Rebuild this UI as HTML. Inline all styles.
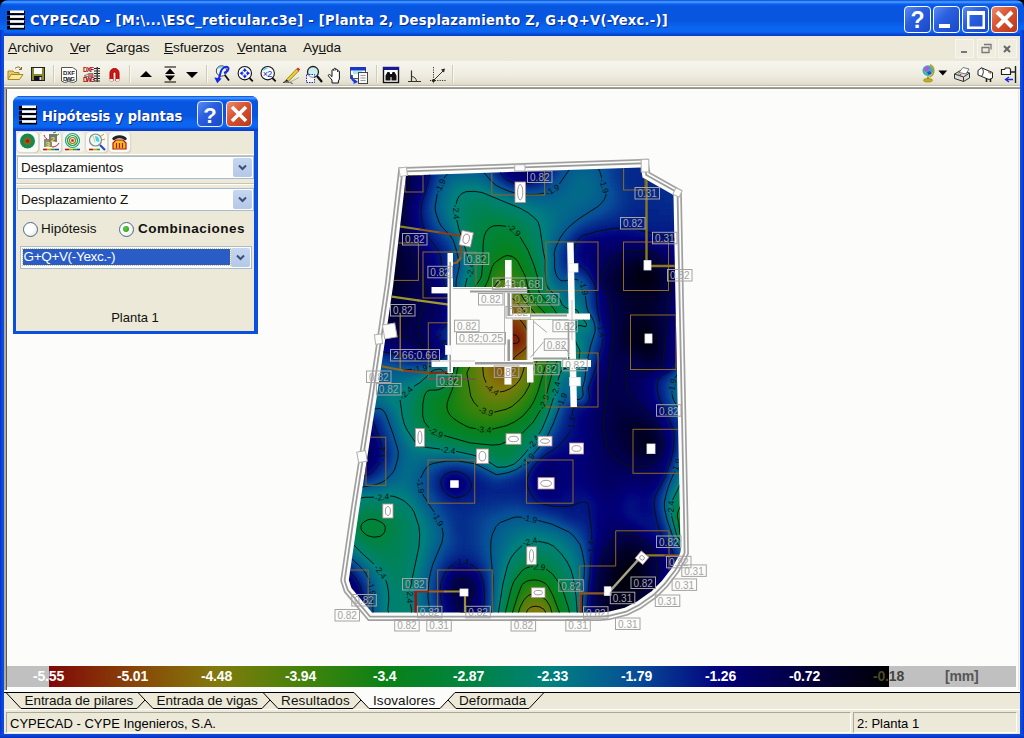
<!DOCTYPE html>
<html>
<head>
<meta charset="utf-8">
<title>CYPECAD</title>
<style>
html,body{margin:0;padding:0;}
body{width:1024px;height:738px;overflow:hidden;position:relative;background:#0a3fd6;font-family:"Liberation Sans",sans-serif;font-size:13px;color:#000;}
.abs{position:absolute;}
#titlebar{left:0;top:0;width:1024px;height:36px;background:linear-gradient(#0a40d0 0,#3a90ff 1.5px,#3a90ff 2.5px,#0c62f0 4px,#0856e0 6px,#0856e0 21px,#0a5ee8 24px,#0a66f0 27px,#0a66f0 32px,#0a48d4 34px,#0a3cc8 36px);border-radius:8px 8px 0 0;}
#title{left:30px;top:11px;line-height:18px;color:#fff;font-family:"DejaVu Sans Condensed","DejaVu Sans","Liberation Sans",sans-serif;font-weight:bold;font-size:14.5px;white-space:nowrap;text-shadow:1px 1px 0 #0a2a8a;letter-spacing:0.3px;}
#frameL{left:0;top:30px;width:4px;height:708px;background:linear-gradient(90deg,#0a2fc8,#0a48e0 2px,#0a4fe0);}
#frameR{left:1020px;top:30px;width:4px;height:708px;background:linear-gradient(90deg,#0a4fe0,#0a48e0 2px,#0a2fc8);}
#frameB{left:0;top:734px;width:1024px;height:4px;background:linear-gradient(#0a4fe0,#0a3fd0 2px,#0a2fc0);}
#menubar{left:4px;top:36px;width:1016px;height:25px;background:#ece9d8;}
#toolbar{left:4px;top:61px;width:1016px;height:26px;background:linear-gradient(#f6f5ee 0,#f0eee2 50%,#e6e3d2 80%,#d4d0bf 100%);}
#tbline{left:4px;top:85px;width:1016px;height:4.500px;background:linear-gradient(#c4c0b0 0,#c4c0b0 1px,#fff 1px,#fff 2px,#a8a498 2px,#8c887c 4.500px);}
#client{left:4px;top:89px;width:1016px;height:603px;background:#fcfcfa;}
#clientL{left:4px;top:89px;width:3px;height:603px;background:linear-gradient(90deg,#b0ac9c 0,#b0ac9c 2px,#5c5c5c 2px,#5c5c5c 3px);}
#clientR{left:1017px;top:89px;width:3px;height:603px;background:linear-gradient(90deg,#fcfcfa 1px,#ece9d8 1px,#ece9d8 2px,#fcfcfa 2px);}
.corner{position:absolute;top:0;width:10px;height:10px;background:#000;}
.menu{position:absolute;top:3.500px;font-size:13.600px;line-height:16px;letter-spacing:-0.05px;color:#111;}
.tbtn{position:absolute;top:6px;width:27px;height:27px;border-radius:4px;box-sizing:border-box;border:1px solid #fff;}
.tblue{background:linear-gradient(135deg,#5a8cf0 0,#2a5fe0 40%,#1a48c8 100%);}
.tred{background:linear-gradient(135deg,#f08868 0,#d8522e 45%,#b8381a 100%);}
.sep{position:absolute;top:4px;width:1px;height:19px;background:#c8c5b4;border-right:1px solid #fff;}
.ico{position:absolute;top:3px;width:20px;height:20px;}
.mdib{position:absolute;top:3px;width:19px;height:19px;background:#efede0;border:1px solid #f6f5ee;box-sizing:border-box;}
</style>
</head>
<body>
<div class="corner" style="left:0"></div><div class="corner" style="left:1014px"></div>
<div id="titlebar" class="abs"></div>
<svg class="abs" style="left:6px;top:9px" width="20" height="21" viewBox="0 0 20 21">
<g fill="#000"><rect x="1" y="2" width="18" height="4"/><rect x="1" y="7" width="18" height="4"/><rect x="1" y="12" width="18" height="4"/><rect x="1" y="17" width="18" height="3.5"/></g>
<g fill="#fff"><rect x="4" y="1.5" width="14" height="2.6"/><rect x="4" y="6.3" width="14" height="2.6"/><rect x="4" y="11.2" width="14" height="2.6"/><rect x="4" y="16.2" width="14" height="2.6"/></g>
<g fill="#000"><rect x="7" y="4" width="1" height="2"/><rect x="11" y="4" width="1" height="2"/><rect x="15" y="4" width="1" height="2"/><rect x="7" y="9" width="1" height="2"/><rect x="11" y="9" width="1" height="2"/><rect x="15" y="9" width="1" height="2"/><rect x="7" y="14" width="1" height="2"/><rect x="11" y="14" width="1" height="2"/><rect x="15" y="14" width="1" height="2"/></g>
</svg>
<div id="title" class="abs">CYPECAD - [M:\...\ESC_reticular.c3e] - [Planta 2, Desplazamiento Z, G+Q+V(-Yexc.-)]</div>
<div class="tbtn tblue" style="left:904px"><svg width="25" height="25" viewBox="0 0 25 25"><text x="12.5" y="21" text-anchor="middle" font-family="Liberation Sans,sans-serif" font-weight="bold" font-size="23" fill="#fff">?</text></svg></div>
<div class="tbtn tblue" style="left:933px"><svg width="25" height="25" viewBox="0 0 25 25"><rect x="5" y="17" width="11" height="4" fill="#fff"/></svg></div>
<div class="tbtn tblue" style="left:962px"><svg width="25" height="25" viewBox="0 0 25 25"><path d="M4 4h18v18H4z M6.5 8v11.500h13V8z" fill="#fff" fill-rule="evenodd"/></svg></div>
<div class="tbtn tred" style="left:991px"><svg width="25" height="25" viewBox="0 0 25 25"><path d="M5 5L20 20M20 5L5 20" stroke="#fff" stroke-width="4" stroke-linecap="butt"/></svg></div>
<div id="frameL" class="abs"></div>
<div id="frameR" class="abs"></div>
<div id="frameB" class="abs"></div>
<div id="menubar" class="abs">
<span class="menu" style="left:4px"><u>A</u>rchivo</span>
<span class="menu" style="left:66px"><u>V</u>er</span>
<span class="menu" style="left:102px"><u>C</u>argas</span>
<span class="menu" style="left:160px"><u>E</u>sfuerzos</span>
<span class="menu" style="left:233px"><u>V</u>entana</span>
<span class="menu" style="left:299px">Ay<u>u</u>da</span>
<div class="mdib" style="left:951px"><svg width="17" height="17"><rect x="5" y="11" width="6" height="2" fill="#777"/></svg></div>
<div class="mdib" style="left:973px"><svg width="17" height="17"><path d="M6 4.500h7v5M4 7.500h7v5H4z" fill="none" stroke="#777" stroke-width="1.300"/></svg></div>
<div class="mdib" style="left:994px"><svg width="17" height="17"><path d="M5 6l6 6M11 6l-6 6" stroke="#666" stroke-width="2"/></svg></div>
</div>
<div id="toolbar" class="abs"></div>
<div id="tbline" class="abs"></div>
<svg class="abs" style="left:0;top:61px" width="1024" height="26" viewBox="0 61 1024 26" font-family="Liberation Sans,sans-serif">
<!-- separators -->
<g stroke="#cfccbc"><path d="M53.500 65v18M129.500 65v18M206.500 65v18M376.500 65v18M452.500 65v18"/></g>
<g stroke="#f8f7f0"><path d="M54.500 65v18M130.500 65v18M207.500 65v18M377.500 65v18M453.500 65v18"/></g>
<!-- open folder -->
<path d="M8 71h5l1.500 1.500H19V79H8z" fill="#e8c860" stroke="#a88820" stroke-width="1"/>
<path d="M8 79.500l3-5h12l-3.500 5z" fill="#f8e8a0" stroke="#a88820" stroke-width="1"/>
<path d="M15 68.500c2-2 5-2 6 .5M21.500 69.500v-2.500M21.500 69.500h-2.500" fill="none" stroke="#806020" stroke-width="1"/>
<!-- save -->
<rect x="31.500" y="67.500" width="13" height="13" fill="#8a8a30" stroke="#222" stroke-width="1"/>
<rect x="34" y="68" width="8" height="6" fill="#fff"/>
<rect x="34" y="76" width="8" height="5" fill="#112"/>
<rect x="39.500" y="77" width="2" height="3" fill="#ddd"/>
<!-- DXF doc -->
<path d="M61.500 67.500h11l4 2.500v11l-3 1.500-5-1-4 1-3-1.500z" fill="#fff" stroke="#555" stroke-width="1"/>
<text x="63" y="74.500" font-size="6" font-weight="bold" fill="#222" textLength="12">DXF</text>
<text x="63" y="80.500" font-size="6" font-weight="bold" fill="#222" textLength="12">DWG</text>
<!-- DXF red -->
<text x="83" y="72" font-size="6.500" font-weight="bold" fill="#b01010" textLength="11">DXF</text>
<text x="83" y="82" font-size="6.500" font-weight="bold" fill="#b01010" textLength="12">DWG</text>
<path d="M84 76l5-2.500h4v3h-7z" fill="#ddd" stroke="#555" stroke-width=".7"/>
<path d="M88 75h5" stroke="#d00" stroke-width="1"/>
<g stroke="#222" stroke-width="1.200"><path d="M94 68.500h6M94 71h6M94 73.500h6M94 76h6M94 78.500h6M94 81h6"/></g>
<rect x="96.500" y="67" width="1.500" height="15" fill="#444"/>
<!-- magnet -->
<path d="M110 81v-8a4.500 4.500 0 0 1 9 0v8h-3v-7.500a1.500 1.500 0 0 0-3 0V81z" fill="#d01818" stroke="#a00" stroke-width="1"/>
<rect x="109.500" y="79" width="3.500" height="2.500" fill="#eee"/><rect x="116" y="79" width="3.500" height="2.500" fill="#eee"/>
<!-- arrows -->
<path d="M140 77l6-6 6 6z" fill="#000"/>
<path d="M164.500 67h11.500M164.500 82h11.500" stroke="#000" stroke-width="1.200"/>
<path d="M165 74l5-5.500 5 5.500zM165 75.500l5 5.500 5-5.500z" fill="#000"/>
<path d="M186 72l6 6 6-6z" fill="#000"/>
<!-- R magnifier -->
<circle cx="221.500" cy="71" r="5.200" fill="#eef6f8" stroke="#444" stroke-width="1"/>
<path d="M218.500 68.500a3.500 3.500 0 0 1 4-1.500" stroke="#40d8e8" stroke-width="1.300" fill="none"/>
<path d="M224.800 75l4.200 5.500" stroke="#111" stroke-width="1.800"/>
<path d="M224 73c3-1 5.300-3.200 4.300-5.200c-1.200-2-5.800-.8-7.300 3.200c-1 3-1.200 5.500-2.500 8.500" stroke="#1428e8" stroke-width="2" fill="none"/>
<path d="M214.300 77.500l7.400 1-4.400 4.700z" fill="#1428e8"/>
<!-- zoom all -->
<circle cx="244.800" cy="73.200" r="6.700" fill="#fafcff" stroke="#111" stroke-width="1.100"/>
<path d="M249.500 78l3.300 3.400" stroke="#111" stroke-width="1.800"/>
<path d="M244.800 68l-2.200 3h4.400zM244.800 78.400l-2.200-3h4.400zM239.600 73.200l3-2.200v4.400zM250 73.200l-3-2.200v4.400z" fill="#1428e8"/>
<path d="M241.500 73.200h2M246.100 73.200h2M244.800 70v2M244.800 74.400v2" stroke="#1428e8" stroke-width="1.200"/>
<!-- x2 -->
<circle cx="267.700" cy="73.200" r="6.700" fill="#fafcff" stroke="#111" stroke-width="1.100"/>
<path d="M263.300 70.300a5 5 0 0 1 4-2.300" stroke="#40d8e8" stroke-width="1.300" fill="none"/>
<path d="M272.400 78l3.300 3.400" stroke="#111" stroke-width="1.800"/>
<text x="262.700" y="76.800" font-size="9" fill="#2030c0" textLength="9.500">×2</text>
<!-- pencil -->
<path d="M286.500 79.500l10-10.500 2.200 2-10.200 10.300z" fill="#e8d428" stroke="#706010" stroke-width=".7"/>
<path d="M296.500 69l1.500-1.600 2.200 2-1.500 1.600z" fill="#e02020"/>
<path d="M284 82l2.500-2.500 2 1.800z" fill="#222"/>
<path d="M283 82.500c3-.8 7-.5 9.500 1" stroke="#333" stroke-width="1" fill="none"/>
<path d="M289 82.500l10-5" stroke="#aaa" stroke-width="1"/>
<!-- zoom window -->
<circle cx="313" cy="72" r="5.500" fill="#c8f0f0" stroke="#222" stroke-width="1.300"/>
<path d="M317 76l5 6" stroke="#111" stroke-width="2.200"/>
<rect x="306.500" y="74.500" width="8" height="8" fill="#fff" fill-opacity=".6" stroke="#2030d0" stroke-width="1" stroke-dasharray="1.500 1"/>
<!-- hand -->
<path d="M332 83v-3l-3.500-4c-.8-1.200.8-2 1.800-1l1.700 1.700v-6.200c0-1.300 1.800-1.300 1.800 0v-1.300c0-1.300 1.900-1.300 1.900 0v1c0-1.300 1.900-1.300 1.900 0v1.500c0-1.200 1.800-1.200 1.800 0V79l-1 2v2z" fill="#fff" stroke="#111" stroke-width="1"/>
<!-- window icon -->
<rect x="350.500" y="67.500" width="15" height="11" fill="#fff" stroke="#555" stroke-width="1"/>
<rect x="350" y="67" width="16" height="3.500" fill="#1838c8"/>
<rect x="353" y="71" width="9" height="3" fill="#a0e8f0"/>
<rect x="358.500" y="72.500" width="9" height="11" fill="#f8f8f8" stroke="#444" stroke-width="1"/>
<path d="M360.500 75.500h5M360.500 78h5M360.500 80.500h5" stroke="#999" stroke-width="1"/>
<path d="M352 75c-1 4 1 6 4 6.500" stroke="#1838e0" stroke-width="2" fill="none"/>
<path d="M354 79l4 3-4.500 2z" fill="#1838e0"/>
<!-- binoculars -->
<rect x="383.500" y="67.500" width="15" height="15" fill="#fff" stroke="#111" stroke-width="1.400"/>
<rect x="383" y="67" width="16" height="3" fill="#18189a"/>
<path d="M385.500 80.500v-5l2-3.500h2l1 3v5.500zM391.500 80.500v-5.500l1-3h2l2 3.500v5z" fill="#111"/>
<rect x="389.500" y="74" width="3" height="3" fill="#111"/>
<!-- angle -->
<path d="M408 81.500h13M411.500 81.500v-11" stroke="#333" stroke-width="1.200" fill="none"/>
<path d="M411.500 76.500a5 5 0 0 1 5 5" stroke="#333" stroke-width="1" fill="none"/>
<!-- dotted -->
<path d="M433.500 67v17M430 80.500h16" stroke="#333" stroke-width="1" stroke-dasharray="1.200 1.200"/>
<path d="M433.500 80.500l10-10" stroke="#333" stroke-width="1"/>
<circle cx="433.500" cy="80.500" r="1.600" fill="#222"/>
<path d="M445 68.500l-4 1 3 3z" fill="#222"/>
<!-- right icons -->
<circle cx="927.800" cy="70.600" r="5.300" fill="#38b0b8"/>
<path d="M924 68.500l3-2.500 3 1.500-2 3.500-3 .5z" fill="#c050d8"/><path d="M927 72l3-1 1.500 2.500-3 1.500z" fill="#3048d0"/><path d="M923.500 71.500l2 .5.500 2.500z" fill="#60d060"/>
<path d="M930 64.800a6.600 6.600 0 0 1-.5 12.200" stroke="#b0a018" stroke-width="1.500" fill="none"/>
<path d="M928 76.500v3" stroke="#a09010" stroke-width="1.800"/>
<ellipse cx="928" cy="80.300" rx="4.600" ry="1.800" fill="#c0b020" stroke="#8a7a10" stroke-width=".6"/>
<path d="M938.400 70.600h8.800l-4.400 4.800z" fill="#000"/>
<path d="M954.500 74l6-3.500 9 2.500v5l-6 3.500-9-3z" fill="#ddd" stroke="#333" stroke-width="1"/>
<path d="M954.500 74l9 3 6-4M963.500 77v4.500" stroke="#333" stroke-width="1" fill="none"/>
<path d="M959 72.500l4-5 6 1.500-3 5z" fill="#fff" stroke="#555" stroke-width=".8"/>
<circle cx="960.500" cy="74.800" r=".9" fill="#e22"/><circle cx="958.500" cy="74" r=".8" fill="#2c2"/>
<path d="M978 70.500l3.500-2.700 11 4.700v5.500l-3.500 1.500-11-4.500z" fill="#fff" stroke="#222" stroke-width="1"/>
<path d="M981.500 67.800c2.200 1.800 2.500 5.200.3 8.200" stroke="#222" stroke-width="1" fill="none"/>
<path d="M986.500 78.500v3.500M990.500 79v3" stroke="#222" stroke-width="1.600"/>
<circle cx="990.300" cy="72.800" r=".9" fill="#e22"/><circle cx="988.800" cy="72" r=".8" fill="#2a2"/>
<path d="M1001.500 69.500h3l1-1.500h4l1 1.500v5h-9z" fill="#fff" stroke="#222" stroke-width="1.200"/>
<path d="M1010 72h5M1015.500 66v17" stroke="#222" stroke-width="1.400"/>
<path d="M1013 79.500h-7M1009 77l-3.500 2.500 3.500 2.500" stroke="#1828e0" stroke-width="1.300" fill="none"/>
</svg>
<div id="client" class="abs"></div>
<div id="clientL" class="abs"></div>
<div id="clientR" class="abs"></div>
<svg class="abs" style="left:0;top:89px" width="1024" height="577" viewBox="0 89 1024 577" font-family="Liberation Sans,sans-serif">
<defs>
<filter id="cm" filterUnits="userSpaceOnUse" x="330" y="150" width="370" height="480" color-interpolation-filters="sRGB"><feGaussianBlur stdDeviation="3.2"/><feComponentTransfer><feFuncR type="table" tableValues="0 0.008 0.008 0.031 0 0 0.039 0.275 0.51 0.533 0.502"/><feFuncG type="table" tableValues="0 0 0 0.298 0.502 0.518 0.51 0.51 0.478 0.267 0.031"/><feFuncB type="table" tableValues="0.016 0.235 0.486 0.596 0.502 0.251 0.086 0.039 0.047 0.031 0.031"/><feFuncA type="linear" slope="0" intercept="1"/></feComponentTransfer></filter>
<clipPath id="mclip"><path d="M406 175.5L641 167.5L642.5 177.5L673.5 195L675.5 300L680 520L680.5 552L679 555.4L672 567.7L661.8 581L651.5 591.3L637 601.5L624.8 607.7L608.4 611.8L600 612.5L372 612.5L351.4 588L348.8 580L359 510L377 395L393.2 285z"/></clipPath>
</defs>
<path d="M406 175.5L641 167.5L642.5 177.5L673.5 195L675.5 300L680 520L680.5 552L679 555.4L672 567.7L661.8 581L651.5 591.3L637 601.5L624.8 607.7L608.4 611.8L600 612.5L372 612.5L351.4 588L348.8 580L359 510L377 395L393.2 285z" fill="none" stroke="#a0a0a0" stroke-width="16.8" stroke-linejoin="miter"/>
<path d="M406 175.5L641 167.5L642.5 177.5L673.5 195L675.5 300L680 520L680.5 552L679 555.4L672 567.7L661.8 581L651.5 591.3L637 601.5L624.8 607.7L608.4 611.8L600 612.5L372 612.5L351.4 588L348.8 580L359 510L377 395L393.2 285z" fill="none" stroke="#fcfcfa" stroke-width="13.4" stroke-linejoin="miter"/>
<path d="M406 175.5L641 167.5L642.5 177.5L673.5 195L675.5 300L680 520L680.5 552L679 555.4L672 567.7L661.8 581L651.5 591.3L637 601.5L624.8 607.7L608.4 611.8L600 612.5L372 612.5L351.4 588L348.8 580L359 510L377 395L393.2 285z" fill="none" stroke="#9c9c9c" stroke-width="10" stroke-linejoin="miter"/>
<path d="M406 175.5L641 167.5L642.5 177.5L673.5 195L675.5 300L680 520L680.5 552L679 555.4L672 567.7L661.8 581L651.5 591.3L637 601.5L624.8 607.7L608.4 611.8L600 612.5L372 612.5L351.4 588L348.8 580L359 510L377 395L393.2 285z" fill="none" stroke="#fcfcfa" stroke-width="6.4" stroke-linejoin="miter"/>
<g clip-path="url(#mclip)">
<g filter="url(#cm)"><rect x="330" y="150" width="370" height="480" fill="#333"/>
<path fill="#040404" d="M623 575h6.5v6.5h-6.5zM623 581h6.5v6.5h-6.5z"/>
<path fill="#050505" d="M623 569h12.5v6.5h-12.5zM617 575h6.5v6.5h-6.5zM629 575h6.5v6.5h-6.5zM617 581h6.5v6.5h-6.5z"/>
<path fill="#060606" d="M641 269h6.5v6.5h-6.5zM641 275h6.5v6.5h-6.5zM641 335h6.5v6.5h-6.5zM623 563h6.5v6.5h-6.5zM629 581h6.5v6.5h-6.5zM617 587h12.5v6.5h-12.5z"/>
<path fill="#070707" d="M647 275h6.5v6.5h-6.5zM641 329h6.5v6.5h-6.5zM647 335h6.5v6.5h-6.5zM641 341h6.5v6.5h-6.5zM629 563h6.5v6.5h-6.5zM617 569h6.5v6.5h-6.5z"/>
<path fill="#080808" d="M635 269h6.5v6.5h-6.5zM647 269h6.5v6.5h-6.5zM635 275h6.5v6.5h-6.5zM641 281h12.5v6.5h-12.5zM635 335h6.5v6.5h-6.5zM647 341h6.5v6.5h-6.5zM617 593h6.5v6.5h-6.5z"/>
<path fill="#090909" d="M635 281h6.5v6.5h-6.5zM635 329h6.5v6.5h-6.5zM623 557h12.5v6.5h-12.5zM617 563h6.5v6.5h-6.5zM635 569h6.5v6.5h-6.5zM635 575h6.5v6.5h-6.5zM611 581h6.5v6.5h-6.5zM611 587h6.5v6.5h-6.5zM629 587h6.5v6.5h-6.5zM623 593h6.5v6.5h-6.5z"/>
<path fill="#0a0a0a" d="M641 263h6.5v6.5h-6.5zM641 323h6.5v6.5h-6.5zM647 329h6.5v6.5h-6.5zM635 341h6.5v6.5h-6.5zM647 443h6.5v6.5h-6.5zM635 563h6.5v6.5h-6.5zM611 575h6.5v6.5h-6.5zM611 593h6.5v6.5h-6.5zM617 599h6.5v6.5h-6.5z"/>
<path fill="#0b0b0b" d="M629 275h6.5v6.5h-6.5zM629 281h6.5v6.5h-6.5zM641 287h6.5v6.5h-6.5zM635 323h6.5v6.5h-6.5zM641 347h12.5v6.5h-12.5zM641 443h6.5v6.5h-6.5zM635 581h6.5v6.5h-6.5z"/>
<path fill="#0c0c0c" d="M635 263h6.5v6.5h-6.5zM647 263h6.5v6.5h-6.5zM629 269h6.5v6.5h-6.5zM653 275h6.5v6.5h-6.5zM653 281h6.5v6.5h-6.5zM635 287h6.5v6.5h-6.5zM647 287h6.5v6.5h-6.5zM629 329h6.5v6.5h-6.5zM629 335h6.5v6.5h-6.5zM641 437h12.5v6.5h-12.5zM635 557h6.5v6.5h-6.5zM611 569h6.5v6.5h-6.5zM629 593h6.5v6.5h-6.5zM611 599h6.5v6.5h-6.5zM623 599h6.5v6.5h-6.5z"/>
<path fill="#0d0d0d" d="M635 317h12.5v6.5h-12.5zM647 323h6.5v6.5h-6.5zM641 431h6.5v6.5h-6.5zM623 551h12.5v6.5h-12.5zM617 557h6.5v6.5h-6.5z"/>
<path fill="#0e0e0e" d="M389 251h6.5v6.5h-6.5zM389 257h6.5v6.5h-6.5zM389 263h6.5v6.5h-6.5zM389 269h6.5v6.5h-6.5zM653 269h6.5v6.5h-6.5zM389 275h6.5v6.5h-6.5zM623 275h6.5v6.5h-6.5zM623 281h6.5v6.5h-6.5zM383 287h6.5v6.5h-6.5zM629 287h6.5v6.5h-6.5zM629 323h6.5v6.5h-6.5zM629 341h6.5v6.5h-6.5zM653 341h6.5v6.5h-6.5zM611 563h6.5v6.5h-6.5zM635 587h6.5v6.5h-6.5zM611 605h12.5v6.5h-12.5z"/>
<path fill="#0f0f0f" d="M389 245h6.5v6.5h-6.5zM389 281h6.5v6.5h-6.5zM653 287h6.5v6.5h-6.5zM635 293h18.5v6.5h-18.5zM653 335h6.5v6.5h-6.5zM635 347h6.5v6.5h-6.5zM653 347h6.5v6.5h-6.5zM635 431h6.5v6.5h-6.5zM647 431h6.5v6.5h-6.5zM635 437h6.5v6.5h-6.5zM641 449h12.5v6.5h-12.5zM635 551h6.5v6.5h-6.5zM641 569h6.5v6.5h-6.5zM605 581h6.5v6.5h-6.5zM605 587h6.5v6.5h-6.5zM605 593h6.5v6.5h-6.5zM629 599h6.5v6.5h-6.5zM623 605h6.5v6.5h-6.5z"/>
<path fill="#101010" d="M629 263h6.5v6.5h-6.5zM623 287h6.5v6.5h-6.5zM383 293h6.5v6.5h-6.5zM629 293h6.5v6.5h-6.5zM635 311h12.5v6.5h-12.5zM629 317h6.5v6.5h-6.5zM647 317h6.5v6.5h-6.5zM653 329h6.5v6.5h-6.5zM647 353h6.5v6.5h-6.5zM641 425h6.5v6.5h-6.5zM635 443h6.5v6.5h-6.5zM641 563h6.5v6.5h-6.5zM605 575h6.5v6.5h-6.5zM641 575h6.5v6.5h-6.5zM605 599h6.5v6.5h-6.5z"/>
<path fill="#111111" d="M389 239h6.5v6.5h-6.5zM623 269h6.5v6.5h-6.5zM389 287h6.5v6.5h-6.5zM641 299h6.5v6.5h-6.5zM635 305h12.5v6.5h-12.5zM623 335h6.5v6.5h-6.5zM641 353h6.5v6.5h-6.5zM635 425h6.5v6.5h-6.5zM617 551h6.5v6.5h-6.5z"/>
<path fill="#121212" d="M389 233h6.5v6.5h-6.5zM641 257h6.5v6.5h-6.5zM395 263h6.5v6.5h-6.5zM395 269h6.5v6.5h-6.5zM395 275h6.5v6.5h-6.5zM617 275h6.5v6.5h-6.5zM617 281h6.5v6.5h-6.5zM389 293h6.5v6.5h-6.5zM653 293h6.5v6.5h-6.5zM383 299h6.5v6.5h-6.5zM629 299h12.5v6.5h-12.5zM647 299h6.5v6.5h-6.5zM629 311h6.5v6.5h-6.5zM647 311h6.5v6.5h-6.5zM623 329h6.5v6.5h-6.5zM629 431h6.5v6.5h-6.5zM623 545h12.5v6.5h-12.5zM611 557h6.5v6.5h-6.5zM641 557h6.5v6.5h-6.5zM641 581h6.5v6.5h-6.5zM635 593h6.5v6.5h-6.5zM605 605h6.5v6.5h-6.5zM611 611h12.5v6.5h-12.5z"/>
<path fill="#131313" d="M395 251h6.5v6.5h-6.5zM395 257h6.5v6.5h-6.5zM635 257h6.5v6.5h-6.5zM653 263h6.5v6.5h-6.5zM395 281h6.5v6.5h-6.5zM659 281h6.5v6.5h-6.5zM617 287h6.5v6.5h-6.5zM623 293h6.5v6.5h-6.5zM629 305h6.5v6.5h-6.5zM647 305h6.5v6.5h-6.5zM623 323h6.5v6.5h-6.5zM653 323h6.5v6.5h-6.5zM623 341h6.5v6.5h-6.5zM629 347h6.5v6.5h-6.5zM629 425h6.5v6.5h-6.5zM629 437h6.5v6.5h-6.5zM653 443h6.5v6.5h-6.5zM635 449h6.5v6.5h-6.5zM605 569h6.5v6.5h-6.5zM629 605h6.5v6.5h-6.5zM623 611h6.5v6.5h-6.5z"/>
<path fill="#141414" d="M647 257h6.5v6.5h-6.5zM623 263h6.5v6.5h-6.5zM617 269h6.5v6.5h-6.5zM659 275h6.5v6.5h-6.5zM395 287h6.5v6.5h-6.5zM389 299h6.5v6.5h-6.5zM383 305h6.5v6.5h-6.5zM623 317h6.5v6.5h-6.5zM653 353h6.5v6.5h-6.5zM647 425h6.5v6.5h-6.5zM653 437h6.5v6.5h-6.5zM629 443h6.5v6.5h-6.5zM635 545h6.5v6.5h-6.5z"/>
<path fill="#151515" d="M395 245h6.5v6.5h-6.5zM611 281h6.5v6.5h-6.5zM659 287h6.5v6.5h-6.5zM395 293h6.5v6.5h-6.5zM623 299h6.5v6.5h-6.5zM653 299h6.5v6.5h-6.5zM389 305h6.5v6.5h-6.5zM623 311h6.5v6.5h-6.5zM653 317h6.5v6.5h-6.5zM635 353h6.5v6.5h-6.5zM629 419h12.5v6.5h-12.5zM623 425h6.5v6.5h-6.5zM623 431h6.5v6.5h-6.5zM641 551h6.5v6.5h-6.5zM635 599h6.5v6.5h-6.5zM605 611h6.5v6.5h-6.5z"/>
<path fill="#161616" d="M395 239h6.5v6.5h-6.5zM629 257h6.5v6.5h-6.5zM401 269h6.5v6.5h-6.5zM401 275h6.5v6.5h-6.5zM611 275h6.5v6.5h-6.5zM401 281h6.5v6.5h-6.5zM617 293h6.5v6.5h-6.5zM623 305h6.5v6.5h-6.5zM653 305h6.5v6.5h-6.5zM383 311h6.5v6.5h-6.5zM653 311h6.5v6.5h-6.5zM623 437h6.5v6.5h-6.5zM617 545h6.5v6.5h-6.5zM611 551h6.5v6.5h-6.5zM605 563h6.5v6.5h-6.5zM641 587h6.5v6.5h-6.5z"/>
<path fill="#171717" d="M401 263h6.5v6.5h-6.5zM659 269h6.5v6.5h-6.5zM395 299h6.5v6.5h-6.5zM395 305h6.5v6.5h-6.5zM389 311h6.5v6.5h-6.5zM623 347h6.5v6.5h-6.5zM647 359h6.5v6.5h-6.5zM623 419h6.5v6.5h-6.5zM641 419h6.5v6.5h-6.5zM623 443h6.5v6.5h-6.5zM629 449h6.5v6.5h-6.5zM653 449h6.5v6.5h-6.5zM461 587h6.5v6.5h-6.5zM599 587h6.5v6.5h-6.5zM599 593h6.5v6.5h-6.5zM599 599h6.5v6.5h-6.5z"/>
<path fill="#181818" d="M395 233h6.5v6.5h-6.5zM401 257h6.5v6.5h-6.5zM617 263h6.5v6.5h-6.5zM611 269h6.5v6.5h-6.5zM401 287h6.5v6.5h-6.5zM611 287h6.5v6.5h-6.5zM659 293h6.5v6.5h-6.5zM395 311h6.5v6.5h-6.5zM617 335h6.5v6.5h-6.5zM617 341h6.5v6.5h-6.5zM641 359h6.5v6.5h-6.5zM617 419h6.5v6.5h-6.5zM617 425h6.5v6.5h-6.5zM617 431h6.5v6.5h-6.5zM653 431h6.5v6.5h-6.5zM641 455h6.5v6.5h-6.5zM629 539h6.5v6.5h-6.5zM647 563h6.5v6.5h-6.5zM647 569h6.5v6.5h-6.5zM647 575h6.5v6.5h-6.5zM599 581h6.5v6.5h-6.5zM599 605h6.5v6.5h-6.5z"/>
<path fill="#191919" d="M395 185h6.5v6.5h-6.5zM395 227h6.5v6.5h-6.5zM401 251h6.5v6.5h-6.5zM401 293h6.5v6.5h-6.5zM617 299h6.5v6.5h-6.5zM383 317h18.5v6.5h-18.5zM617 329h6.5v6.5h-6.5zM653 359h6.5v6.5h-6.5zM623 413h12.5v6.5h-12.5zM617 437h6.5v6.5h-6.5zM635 455h6.5v6.5h-6.5zM623 539h6.5v6.5h-6.5zM605 557h6.5v6.5h-6.5zM635 605h6.5v6.5h-6.5z"/>
<path fill="#1a1a1a" d="M395 191h6.5v6.5h-6.5zM395 197h6.5v6.5h-6.5zM395 221h6.5v6.5h-6.5zM623 257h6.5v6.5h-6.5zM407 275h6.5v6.5h-6.5zM605 275h6.5v6.5h-6.5zM407 281h6.5v6.5h-6.5zM401 299h6.5v6.5h-6.5zM401 305h6.5v6.5h-6.5zM617 305h6.5v6.5h-6.5zM401 311h6.5v6.5h-6.5zM617 311h6.5v6.5h-6.5zM617 317h6.5v6.5h-6.5zM617 323h6.5v6.5h-6.5zM659 335h6.5v6.5h-6.5zM659 341h6.5v6.5h-6.5zM617 347h6.5v6.5h-6.5zM629 353h6.5v6.5h-6.5zM617 413h6.5v6.5h-6.5zM635 413h6.5v6.5h-6.5zM623 449h6.5v6.5h-6.5zM647 455h6.5v6.5h-6.5zM641 545h6.5v6.5h-6.5zM647 557h6.5v6.5h-6.5zM599 575h6.5v6.5h-6.5zM461 581h6.5v6.5h-6.5zM455 587h6.5v6.5h-6.5zM641 593h6.5v6.5h-6.5z"/>
<path fill="#1b1b1b" d="M395 203h6.5v6.5h-6.5zM395 209h6.5v6.5h-6.5zM395 215h6.5v6.5h-6.5zM401 245h6.5v6.5h-6.5zM653 257h6.5v6.5h-6.5zM659 263h6.5v6.5h-6.5zM407 269h6.5v6.5h-6.5zM605 281h6.5v6.5h-6.5zM407 287h6.5v6.5h-6.5zM659 299h6.5v6.5h-6.5zM401 317h6.5v6.5h-6.5zM389 323h12.5v6.5h-12.5zM659 323h6.5v6.5h-6.5zM659 329h6.5v6.5h-6.5zM659 347h6.5v6.5h-6.5zM623 407h6.5v6.5h-6.5zM611 419h6.5v6.5h-6.5zM611 425h6.5v6.5h-6.5zM617 443h6.5v6.5h-6.5zM629 455h6.5v6.5h-6.5zM635 539h6.5v6.5h-6.5zM611 545h6.5v6.5h-6.5zM647 581h6.5v6.5h-6.5zM599 611h6.5v6.5h-6.5z"/>
<path fill="#1c1c1c" d="M401 239h6.5v6.5h-6.5zM407 263h6.5v6.5h-6.5zM611 263h6.5v6.5h-6.5zM407 293h6.5v6.5h-6.5zM611 293h6.5v6.5h-6.5zM659 305h6.5v6.5h-6.5zM659 317h6.5v6.5h-6.5zM383 323h6.5v6.5h-6.5zM401 323h6.5v6.5h-6.5zM623 353h6.5v6.5h-6.5zM635 359h6.5v6.5h-6.5zM617 407h6.5v6.5h-6.5zM611 413h6.5v6.5h-6.5zM647 419h6.5v6.5h-6.5zM611 431h6.5v6.5h-6.5zM617 539h6.5v6.5h-6.5zM599 569h6.5v6.5h-6.5z"/>
<path fill="#1d1d1d" d="M635 251h12.5v6.5h-12.5zM407 257h6.5v6.5h-6.5zM617 257h6.5v6.5h-6.5zM605 269h6.5v6.5h-6.5zM665 281h6.5v6.5h-6.5zM407 299h6.5v6.5h-6.5zM407 305h6.5v6.5h-6.5zM407 311h6.5v6.5h-6.5zM659 311h6.5v6.5h-6.5zM407 317h6.5v6.5h-6.5zM617 353h6.5v6.5h-6.5zM617 401h6.5v6.5h-6.5zM611 407h6.5v6.5h-6.5zM629 407h6.5v6.5h-6.5zM611 437h6.5v6.5h-6.5zM617 449h6.5v6.5h-6.5zM605 551h6.5v6.5h-6.5zM647 551h6.5v6.5h-6.5zM455 581h6.5v6.5h-6.5zM467 587h6.5v6.5h-6.5zM461 593h6.5v6.5h-6.5zM641 599h6.5v6.5h-6.5z"/>
<path fill="#1e1e1e" d="M401 167h6.5v6.5h-6.5zM401 173h6.5v6.5h-6.5zM401 179h6.5v6.5h-6.5zM401 233h6.5v6.5h-6.5zM629 251h6.5v6.5h-6.5zM647 251h6.5v6.5h-6.5zM413 275h6.5v6.5h-6.5zM665 275h6.5v6.5h-6.5zM413 281h6.5v6.5h-6.5zM413 287h6.5v6.5h-6.5zM665 287h6.5v6.5h-6.5zM611 299h6.5v6.5h-6.5zM407 323h6.5v6.5h-6.5zM611 401h6.5v6.5h-6.5zM623 401h6.5v6.5h-6.5zM641 413h6.5v6.5h-6.5zM653 425h6.5v6.5h-6.5zM611 443h6.5v6.5h-6.5zM623 455h6.5v6.5h-6.5zM455 593h6.5v6.5h-6.5z"/>
<path fill="#1f1f1f" d="M401 185h6.5v6.5h-6.5zM401 191h6.5v6.5h-6.5zM407 251h6.5v6.5h-6.5zM413 269h6.5v6.5h-6.5zM605 287h6.5v6.5h-6.5zM413 293h6.5v6.5h-6.5zM389 329h24.5v6.5h-24.5zM611 347h6.5v6.5h-6.5zM611 353h6.5v6.5h-6.5zM659 353h6.5v6.5h-6.5zM617 359h6.5v6.5h-6.5zM659 359h6.5v6.5h-6.5zM641 365h12.5v6.5h-12.5zM611 395h12.5v6.5h-12.5zM635 407h6.5v6.5h-6.5zM605 413h6.5v6.5h-6.5zM605 419h6.5v6.5h-6.5zM605 425h6.5v6.5h-6.5zM635 461h6.5v6.5h-6.5zM599 563h6.5v6.5h-6.5zM647 587h6.5v6.5h-6.5z"/>
<path fill="#202020" d="M401 227h6.5v6.5h-6.5zM623 251h6.5v6.5h-6.5zM419 287h6.5v6.5h-6.5zM665 293h6.5v6.5h-6.5zM413 299h6.5v6.5h-6.5zM413 305h6.5v6.5h-6.5zM611 305h6.5v6.5h-6.5zM413 311h6.5v6.5h-6.5zM611 311h6.5v6.5h-6.5zM413 323h6.5v6.5h-6.5zM383 329h6.5v6.5h-6.5zM413 329h6.5v6.5h-6.5zM611 341h6.5v6.5h-6.5zM611 359h6.5v6.5h-6.5zM629 359h6.5v6.5h-6.5zM611 365h6.5v6.5h-6.5zM611 371h6.5v6.5h-6.5zM611 377h6.5v6.5h-6.5zM611 383h6.5v6.5h-6.5zM611 389h12.5v6.5h-12.5zM623 395h6.5v6.5h-6.5zM629 401h6.5v6.5h-6.5zM605 407h6.5v6.5h-6.5zM605 431h6.5v6.5h-6.5zM611 449h6.5v6.5h-6.5zM617 455h6.5v6.5h-6.5zM653 455h6.5v6.5h-6.5zM629 461h6.5v6.5h-6.5zM641 461h6.5v6.5h-6.5zM623 533h12.5v6.5h-12.5zM611 539h6.5v6.5h-6.5zM641 539h6.5v6.5h-6.5zM467 581h6.5v6.5h-6.5zM347 593h6.5v6.5h-6.5zM461 599h6.5v6.5h-6.5zM461 605h6.5v6.5h-6.5z"/>
<path fill="#212121" d="M401 197h6.5v6.5h-6.5zM401 221h6.5v6.5h-6.5zM407 245h6.5v6.5h-6.5zM611 257h6.5v6.5h-6.5zM413 263h6.5v6.5h-6.5zM605 263h6.5v6.5h-6.5zM665 269h6.5v6.5h-6.5zM599 275h6.5v6.5h-6.5zM419 281h6.5v6.5h-6.5zM419 293h6.5v6.5h-6.5zM419 299h6.5v6.5h-6.5zM413 317h6.5v6.5h-6.5zM611 317h6.5v6.5h-6.5zM611 323h6.5v6.5h-6.5zM377 329h6.5v6.5h-6.5zM413 335h6.5v6.5h-6.5zM611 335h6.5v6.5h-6.5zM623 359h6.5v6.5h-6.5zM617 365h6.5v6.5h-6.5zM635 365h6.5v6.5h-6.5zM653 365h6.5v6.5h-6.5zM617 371h6.5v6.5h-6.5zM617 377h6.5v6.5h-6.5zM617 383h6.5v6.5h-6.5zM623 389h6.5v6.5h-6.5zM605 395h6.5v6.5h-6.5zM605 401h6.5v6.5h-6.5zM605 437h6.5v6.5h-6.5zM659 437h6.5v6.5h-6.5zM605 443h6.5v6.5h-6.5zM659 443h6.5v6.5h-6.5zM599 557h6.5v6.5h-6.5zM653 563h6.5v6.5h-6.5zM653 569h6.5v6.5h-6.5zM653 575h6.5v6.5h-6.5zM467 593h6.5v6.5h-6.5zM455 599h6.5v6.5h-6.5zM593 605h6.5v6.5h-6.5z"/>
<path fill="#222222" d="M401 203h6.5v6.5h-6.5zM401 209h6.5v6.5h-6.5zM401 215h6.5v6.5h-6.5zM659 257h6.5v6.5h-6.5zM419 275h6.5v6.5h-6.5zM419 305h6.5v6.5h-6.5zM611 329h6.5v6.5h-6.5zM407 335h6.5v6.5h-6.5zM419 341h6.5v6.5h-6.5zM623 365h6.5v6.5h-6.5zM623 371h6.5v6.5h-6.5zM605 377h6.5v6.5h-6.5zM623 377h6.5v6.5h-6.5zM605 383h6.5v6.5h-6.5zM623 383h6.5v6.5h-6.5zM605 389h6.5v6.5h-6.5zM629 395h6.5v6.5h-6.5zM359 443h6.5v6.5h-6.5zM359 449h6.5v6.5h-6.5zM623 461h6.5v6.5h-6.5zM647 461h6.5v6.5h-6.5zM617 533h6.5v6.5h-6.5zM605 545h6.5v6.5h-6.5zM647 545h6.5v6.5h-6.5zM653 557h6.5v6.5h-6.5zM341 581h6.5v6.5h-6.5zM647 593h6.5v6.5h-6.5zM593 599h6.5v6.5h-6.5zM455 605h6.5v6.5h-6.5z"/>
<path fill="#232323" d="M407 167h6.5v6.5h-6.5zM407 173h6.5v6.5h-6.5zM407 179h6.5v6.5h-6.5zM407 239h6.5v6.5h-6.5zM617 251h6.5v6.5h-6.5zM653 251h6.5v6.5h-6.5zM413 257h6.5v6.5h-6.5zM425 293h6.5v6.5h-6.5zM605 293h6.5v6.5h-6.5zM425 299h6.5v6.5h-6.5zM665 299h6.5v6.5h-6.5zM425 305h6.5v6.5h-6.5zM419 311h6.5v6.5h-6.5zM419 335h6.5v6.5h-6.5zM413 341h6.5v6.5h-6.5zM629 365h6.5v6.5h-6.5zM605 371h6.5v6.5h-6.5zM629 371h6.5v6.5h-6.5zM635 401h6.5v6.5h-6.5zM641 407h6.5v6.5h-6.5zM647 413h6.5v6.5h-6.5zM599 419h6.5v6.5h-6.5zM599 425h6.5v6.5h-6.5zM605 449h6.5v6.5h-6.5zM359 455h6.5v6.5h-6.5zM611 455h6.5v6.5h-6.5zM617 461h6.5v6.5h-6.5zM461 575h6.5v6.5h-6.5zM449 587h6.5v6.5h-6.5zM593 587h6.5v6.5h-6.5zM593 593h6.5v6.5h-6.5zM467 599h6.5v6.5h-6.5z"/>
<path fill="#242424" d="M407 185h6.5v6.5h-6.5zM605 257h6.5v6.5h-6.5zM665 263h6.5v6.5h-6.5zM419 269h6.5v6.5h-6.5zM599 269h6.5v6.5h-6.5zM425 287h6.5v6.5h-6.5zM665 305h6.5v6.5h-6.5zM425 311h6.5v6.5h-6.5zM419 317h6.5v6.5h-6.5zM419 323h6.5v6.5h-6.5zM389 335h6.5v6.5h-6.5zM401 335h6.5v6.5h-6.5zM605 365h6.5v6.5h-6.5zM635 371h6.5v6.5h-6.5zM629 377h6.5v6.5h-6.5zM629 383h6.5v6.5h-6.5zM629 389h6.5v6.5h-6.5zM599 407h6.5v6.5h-6.5zM599 413h6.5v6.5h-6.5zM653 419h6.5v6.5h-6.5zM599 431h6.5v6.5h-6.5zM659 431h6.5v6.5h-6.5zM659 449h6.5v6.5h-6.5zM635 467h6.5v6.5h-6.5zM635 533h6.5v6.5h-6.5zM455 575h6.5v6.5h-6.5zM593 581h6.5v6.5h-6.5zM653 581h6.5v6.5h-6.5zM347 587h6.5v6.5h-6.5zM467 605h6.5v6.5h-6.5zM461 611h6.5v6.5h-6.5zM593 611h6.5v6.5h-6.5z"/>
<path fill="#252525" d="M407 191h6.5v6.5h-6.5zM407 233h6.5v6.5h-6.5zM629 245h6.5v6.5h-6.5zM413 251h6.5v6.5h-6.5zM611 251h6.5v6.5h-6.5zM425 281h6.5v6.5h-6.5zM599 281h6.5v6.5h-6.5zM431 305h6.5v6.5h-6.5zM431 311h6.5v6.5h-6.5zM665 311h6.5v6.5h-6.5zM665 317h6.5v6.5h-6.5zM665 323h6.5v6.5h-6.5zM419 329h6.5v6.5h-6.5zM383 335h6.5v6.5h-6.5zM395 335h6.5v6.5h-6.5zM425 341h6.5v6.5h-6.5zM419 347h12.5v6.5h-12.5zM605 359h6.5v6.5h-6.5zM641 371h6.5v6.5h-6.5zM599 389h6.5v6.5h-6.5zM599 395h6.5v6.5h-6.5zM635 395h6.5v6.5h-6.5zM599 401h6.5v6.5h-6.5zM599 437h6.5v6.5h-6.5zM599 443h6.5v6.5h-6.5zM365 449h6.5v6.5h-6.5zM605 455h6.5v6.5h-6.5zM611 461h6.5v6.5h-6.5zM653 461h6.5v6.5h-6.5zM623 467h12.5v6.5h-12.5zM641 467h6.5v6.5h-6.5zM611 533h6.5v6.5h-6.5zM605 539h6.5v6.5h-6.5zM599 551h6.5v6.5h-6.5zM449 581h6.5v6.5h-6.5zM449 593h6.5v6.5h-6.5z"/>
<path fill="#262626" d="M635 245h6.5v6.5h-6.5zM419 263h6.5v6.5h-6.5zM599 263h6.5v6.5h-6.5zM431 299h6.5v6.5h-6.5zM605 299h6.5v6.5h-6.5zM425 317h6.5v6.5h-6.5zM665 329h6.5v6.5h-6.5zM377 335h6.5v6.5h-6.5zM407 341h6.5v6.5h-6.5zM659 365h6.5v6.5h-6.5zM635 377h6.5v6.5h-6.5zM599 383h6.5v6.5h-6.5zM365 443h6.5v6.5h-6.5zM599 449h6.5v6.5h-6.5zM605 461h6.5v6.5h-6.5zM611 467h12.5v6.5h-12.5zM647 467h6.5v6.5h-6.5zM653 551h6.5v6.5h-6.5zM467 575h6.5v6.5h-6.5zM593 575h6.5v6.5h-6.5zM455 611h6.5v6.5h-6.5z"/>
<path fill="#272727" d="M515 167h12.5v6.5h-12.5zM407 197h6.5v6.5h-6.5zM407 227h6.5v6.5h-6.5zM623 245h6.5v6.5h-6.5zM641 245h6.5v6.5h-6.5zM605 251h6.5v6.5h-6.5zM599 257h6.5v6.5h-6.5zM425 275h6.5v6.5h-6.5zM671 275h6.5v6.5h-6.5zM671 281h6.5v6.5h-6.5zM671 287h6.5v6.5h-6.5zM431 293h6.5v6.5h-6.5zM605 305h6.5v6.5h-6.5zM605 311h6.5v6.5h-6.5zM665 335h6.5v6.5h-6.5zM605 353h6.5v6.5h-6.5zM599 377h6.5v6.5h-6.5zM635 383h6.5v6.5h-6.5zM635 389h6.5v6.5h-6.5zM641 401h6.5v6.5h-6.5zM365 455h6.5v6.5h-6.5zM599 455h6.5v6.5h-6.5zM659 455h6.5v6.5h-6.5zM359 461h6.5v6.5h-6.5zM605 467h6.5v6.5h-6.5zM623 527h6.5v6.5h-6.5zM473 587h6.5v6.5h-6.5zM467 611h6.5v6.5h-6.5z"/>
<path fill="#282828" d="M413 167h6.5v6.5h-6.5zM413 173h6.5v6.5h-6.5zM413 179h6.5v6.5h-6.5zM413 245h6.5v6.5h-6.5zM617 245h6.5v6.5h-6.5zM647 245h6.5v6.5h-6.5zM659 251h6.5v6.5h-6.5zM665 257h6.5v6.5h-6.5zM431 317h6.5v6.5h-6.5zM605 317h6.5v6.5h-6.5zM413 347h6.5v6.5h-6.5zM647 371h6.5v6.5h-6.5zM647 407h6.5v6.5h-6.5zM593 419h6.5v6.5h-6.5zM593 425h6.5v6.5h-6.5zM593 431h6.5v6.5h-6.5zM599 461h6.5v6.5h-6.5zM653 467h6.5v6.5h-6.5zM605 473h42.5v6.5h-42.5zM545 479h6.5v6.5h-6.5zM617 527h6.5v6.5h-6.5zM599 545h6.5v6.5h-6.5zM593 569h6.5v6.5h-6.5zM653 587h6.5v6.5h-6.5zM473 593h6.5v6.5h-6.5zM449 599h6.5v6.5h-6.5z"/>
<path fill="#292929" d="M413 185h6.5v6.5h-6.5zM407 203h6.5v6.5h-6.5zM407 221h6.5v6.5h-6.5zM599 251h6.5v6.5h-6.5zM419 257h6.5v6.5h-6.5zM671 269h6.5v6.5h-6.5zM431 287h6.5v6.5h-6.5zM671 293h6.5v6.5h-6.5zM437 305h6.5v6.5h-6.5zM437 311h6.5v6.5h-6.5zM401 341h6.5v6.5h-6.5zM665 341h6.5v6.5h-6.5zM431 347h6.5v6.5h-6.5zM665 359h6.5v6.5h-6.5zM641 377h6.5v6.5h-6.5zM593 413h6.5v6.5h-6.5zM659 425h6.5v6.5h-6.5zM593 437h6.5v6.5h-6.5zM593 443h6.5v6.5h-6.5zM599 467h6.5v6.5h-6.5zM545 473h6.5v6.5h-6.5zM647 473h6.5v6.5h-6.5zM605 479h6.5v6.5h-6.5zM611 527h6.5v6.5h-6.5zM629 527h6.5v6.5h-6.5zM605 533h6.5v6.5h-6.5zM647 539h6.5v6.5h-6.5zM659 563h6.5v6.5h-6.5zM659 569h6.5v6.5h-6.5zM341 575h6.5v6.5h-6.5zM473 581h6.5v6.5h-6.5zM353 599h6.5v6.5h-6.5zM449 605h6.5v6.5h-6.5z"/>
<path fill="#2a2a2a" d="M509 167h6.5v6.5h-6.5zM527 167h6.5v6.5h-6.5zM407 209h6.5v6.5h-6.5zM407 215h6.5v6.5h-6.5zM413 239h6.5v6.5h-6.5zM611 245h6.5v6.5h-6.5zM425 269h6.5v6.5h-6.5zM599 287h6.5v6.5h-6.5zM425 323h6.5v6.5h-6.5zM605 323h6.5v6.5h-6.5zM425 335h6.5v6.5h-6.5zM605 347h6.5v6.5h-6.5zM599 371h6.5v6.5h-6.5zM641 395h6.5v6.5h-6.5zM593 407h6.5v6.5h-6.5zM653 413h6.5v6.5h-6.5zM365 437h6.5v6.5h-6.5zM593 449h6.5v6.5h-6.5zM593 455h6.5v6.5h-6.5zM599 473h6.5v6.5h-6.5zM599 479h6.5v6.5h-6.5zM611 479h6.5v6.5h-6.5zM605 485h6.5v6.5h-6.5zM641 533h6.5v6.5h-6.5zM659 557h6.5v6.5h-6.5zM593 563h6.5v6.5h-6.5zM449 575h6.5v6.5h-6.5zM659 575h6.5v6.5h-6.5zM347 581h6.5v6.5h-6.5zM353 593h6.5v6.5h-6.5zM653 593h6.5v6.5h-6.5zM473 599h6.5v6.5h-6.5z"/>
<path fill="#2b2b2b" d="M605 245h6.5v6.5h-6.5zM653 245h6.5v6.5h-6.5zM419 251h6.5v6.5h-6.5zM593 257h6.5v6.5h-6.5zM593 263h6.5v6.5h-6.5zM671 263h6.5v6.5h-6.5zM431 281h6.5v6.5h-6.5zM437 299h6.5v6.5h-6.5zM671 299h6.5v6.5h-6.5zM383 341h18.5v6.5h-18.5zM665 347h6.5v6.5h-6.5zM641 383h6.5v6.5h-6.5zM641 389h6.5v6.5h-6.5zM365 461h6.5v6.5h-6.5zM593 461h6.5v6.5h-6.5zM659 461h6.5v6.5h-6.5zM545 467h6.5v6.5h-6.5zM593 467h6.5v6.5h-6.5zM539 473h6.5v6.5h-6.5zM551 473h6.5v6.5h-6.5zM653 473h6.5v6.5h-6.5zM539 479h6.5v6.5h-6.5zM551 479h6.5v6.5h-6.5zM617 479h6.5v6.5h-6.5zM641 479h6.5v6.5h-6.5zM545 485h6.5v6.5h-6.5zM599 485h6.5v6.5h-6.5zM611 485h6.5v6.5h-6.5zM605 527h6.5v6.5h-6.5zM599 539h6.5v6.5h-6.5zM653 545h6.5v6.5h-6.5zM473 605h6.5v6.5h-6.5z"/>
<path fill="#2c2c2c" d="M413 191h6.5v6.5h-6.5zM599 245h6.5v6.5h-6.5zM593 251h6.5v6.5h-6.5zM425 263h6.5v6.5h-6.5zM593 269h6.5v6.5h-6.5zM671 305h6.5v6.5h-6.5zM437 317h6.5v6.5h-6.5zM425 329h6.5v6.5h-6.5zM605 329h6.5v6.5h-6.5zM431 341h6.5v6.5h-6.5zM605 341h6.5v6.5h-6.5zM407 347h6.5v6.5h-6.5zM665 353h6.5v6.5h-6.5zM593 383h6.5v6.5h-6.5zM593 389h6.5v6.5h-6.5zM593 401h6.5v6.5h-6.5zM647 401h6.5v6.5h-6.5zM587 419h6.5v6.5h-6.5zM587 425h6.5v6.5h-6.5zM371 449h6.5v6.5h-6.5zM551 467h6.5v6.5h-6.5zM593 473h6.5v6.5h-6.5zM449 479h6.5v6.5h-6.5zM593 479h6.5v6.5h-6.5zM623 479h18.5v6.5h-18.5zM647 479h6.5v6.5h-6.5zM605 491h6.5v6.5h-6.5zM593 557h6.5v6.5h-6.5zM461 569h6.5v6.5h-6.5zM449 611h6.5v6.5h-6.5z"/>
<path fill="#2d2d2d" d="M515 173h12.5v6.5h-12.5zM413 233h6.5v6.5h-6.5zM623 239h12.5v6.5h-12.5zM665 251h6.5v6.5h-6.5zM671 311h6.5v6.5h-6.5zM377 341h6.5v6.5h-6.5zM671 353h6.5v6.5h-6.5zM599 365h6.5v6.5h-6.5zM665 365h6.5v6.5h-6.5zM593 395h6.5v6.5h-6.5zM587 413h6.5v6.5h-6.5zM659 419h6.5v6.5h-6.5zM587 431h6.5v6.5h-6.5zM587 437h6.5v6.5h-6.5zM665 437h6.5v6.5h-6.5zM371 443h6.5v6.5h-6.5zM587 443h6.5v6.5h-6.5zM587 449h6.5v6.5h-6.5zM587 455h6.5v6.5h-6.5zM587 461h6.5v6.5h-6.5zM539 467h6.5v6.5h-6.5zM587 467h6.5v6.5h-6.5zM455 479h6.5v6.5h-6.5zM539 485h6.5v6.5h-6.5zM551 485h6.5v6.5h-6.5zM617 485h6.5v6.5h-6.5zM599 491h6.5v6.5h-6.5zM611 491h6.5v6.5h-6.5zM605 521h18.5v6.5h-18.5zM659 551h6.5v6.5h-6.5zM455 569h6.5v6.5h-6.5zM659 581h6.5v6.5h-6.5z"/>
<path fill="#2e2e2e" d="M611 239h12.5v6.5h-12.5zM635 239h6.5v6.5h-6.5zM419 245h6.5v6.5h-6.5zM593 245h6.5v6.5h-6.5zM425 257h6.5v6.5h-6.5zM671 257h6.5v6.5h-6.5zM431 275h6.5v6.5h-6.5zM593 275h6.5v6.5h-6.5zM437 293h6.5v6.5h-6.5zM599 293h6.5v6.5h-6.5zM671 317h6.5v6.5h-6.5zM605 335h6.5v6.5h-6.5zM425 353h6.5v6.5h-6.5zM653 371h6.5v6.5h-6.5zM365 431h6.5v6.5h-6.5zM665 443h6.5v6.5h-6.5zM371 455h6.5v6.5h-6.5zM551 461h6.5v6.5h-6.5zM659 467h6.5v6.5h-6.5zM587 473h6.5v6.5h-6.5zM449 485h12.5v6.5h-12.5zM593 485h6.5v6.5h-6.5zM605 497h6.5v6.5h-6.5zM635 527h6.5v6.5h-6.5zM599 533h6.5v6.5h-6.5zM593 551h6.5v6.5h-6.5zM473 575h6.5v6.5h-6.5zM353 587h6.5v6.5h-6.5zM443 587h6.5v6.5h-6.5z"/>
<path fill="#2f2f2f" d="M419 167h6.5v6.5h-6.5zM533 167h6.5v6.5h-6.5zM419 173h6.5v6.5h-6.5zM527 173h6.5v6.5h-6.5zM419 179h6.5v6.5h-6.5zM413 197h6.5v6.5h-6.5zM413 227h6.5v6.5h-6.5zM605 239h6.5v6.5h-6.5zM641 239h6.5v6.5h-6.5zM659 245h6.5v6.5h-6.5zM587 251h6.5v6.5h-6.5zM587 257h6.5v6.5h-6.5zM431 323h6.5v6.5h-6.5zM671 323h6.5v6.5h-6.5zM437 347h6.5v6.5h-6.5zM419 353h6.5v6.5h-6.5zM647 377h6.5v6.5h-6.5zM647 395h6.5v6.5h-6.5zM653 407h6.5v6.5h-6.5zM665 431h6.5v6.5h-6.5zM665 449h6.5v6.5h-6.5zM545 461h6.5v6.5h-6.5zM359 467h6.5v6.5h-6.5zM557 467h6.5v6.5h-6.5zM557 473h6.5v6.5h-6.5zM587 479h6.5v6.5h-6.5zM653 479h6.5v6.5h-6.5zM623 485h6.5v6.5h-6.5zM641 485h6.5v6.5h-6.5zM545 491h6.5v6.5h-6.5zM617 491h6.5v6.5h-6.5zM611 497h6.5v6.5h-6.5zM605 515h12.5v6.5h-12.5zM623 521h6.5v6.5h-6.5zM599 527h6.5v6.5h-6.5zM467 569h6.5v6.5h-6.5zM443 593h6.5v6.5h-6.5zM587 605h6.5v6.5h-6.5zM473 611h6.5v6.5h-6.5z"/>
<path fill="#303030" d="M503 167h6.5v6.5h-6.5zM509 173h6.5v6.5h-6.5zM599 239h6.5v6.5h-6.5zM587 245h6.5v6.5h-6.5zM431 269h6.5v6.5h-6.5zM677 275h6.5v6.5h-6.5zM677 281h6.5v6.5h-6.5zM677 287h6.5v6.5h-6.5zM599 299h6.5v6.5h-6.5zM599 305h6.5v6.5h-6.5zM401 347h6.5v6.5h-6.5zM431 353h6.5v6.5h-6.5zM599 359h6.5v6.5h-6.5zM671 359h6.5v6.5h-6.5zM593 377h6.5v6.5h-6.5zM587 407h6.5v6.5h-6.5zM581 455h6.5v6.5h-6.5zM557 461h6.5v6.5h-6.5zM581 461h6.5v6.5h-6.5zM563 467h6.5v6.5h-6.5zM581 467h6.5v6.5h-6.5zM581 473h6.5v6.5h-6.5zM557 479h6.5v6.5h-6.5zM629 485h12.5v6.5h-12.5zM647 485h6.5v6.5h-6.5zM551 491h6.5v6.5h-6.5zM593 491h6.5v6.5h-6.5zM599 497h6.5v6.5h-6.5zM605 503h12.5v6.5h-12.5zM605 509h6.5v6.5h-6.5zM599 515h6.5v6.5h-6.5zM599 521h6.5v6.5h-6.5zM443 581h6.5v6.5h-6.5zM659 587h6.5v6.5h-6.5z"/>
<path fill="#313131" d="M419 185h6.5v6.5h-6.5zM413 203h6.5v6.5h-6.5zM413 221h6.5v6.5h-6.5zM419 239h6.5v6.5h-6.5zM593 239h6.5v6.5h-6.5zM647 239h6.5v6.5h-6.5zM425 251h6.5v6.5h-6.5zM587 263h6.5v6.5h-6.5zM677 269h6.5v6.5h-6.5zM437 287h6.5v6.5h-6.5zM599 311h6.5v6.5h-6.5zM671 329h6.5v6.5h-6.5zM671 347h6.5v6.5h-6.5zM647 383h6.5v6.5h-6.5zM647 389h6.5v6.5h-6.5zM581 419h6.5v6.5h-6.5zM581 425h6.5v6.5h-6.5zM581 431h6.5v6.5h-6.5zM371 437h6.5v6.5h-6.5zM581 437h6.5v6.5h-6.5zM581 443h6.5v6.5h-6.5zM581 449h6.5v6.5h-6.5zM563 461h18.5v6.5h-18.5zM569 467h12.5v6.5h-12.5zM533 473h6.5v6.5h-6.5zM563 473h6.5v6.5h-6.5zM533 479h6.5v6.5h-6.5zM581 479h6.5v6.5h-6.5zM557 485h6.5v6.5h-6.5zM587 485h6.5v6.5h-6.5zM539 491h6.5v6.5h-6.5zM617 497h6.5v6.5h-6.5zM611 509h6.5v6.5h-6.5zM617 515h6.5v6.5h-6.5zM647 533h6.5v6.5h-6.5zM653 539h6.5v6.5h-6.5zM593 545h6.5v6.5h-6.5zM665 563h6.5v6.5h-6.5zM347 575h6.5v6.5h-6.5zM443 599h6.5v6.5h-6.5zM587 599h6.5v6.5h-6.5z"/>
<path fill="#323232" d="M539 161h6.5v6.5h-6.5zM413 209h6.5v6.5h-6.5zM413 215h6.5v6.5h-6.5zM587 239h6.5v6.5h-6.5zM665 245h6.5v6.5h-6.5zM581 251h6.5v6.5h-6.5zM671 251h6.5v6.5h-6.5zM431 263h6.5v6.5h-6.5zM677 263h6.5v6.5h-6.5zM677 293h6.5v6.5h-6.5zM599 317h6.5v6.5h-6.5zM431 335h6.5v6.5h-6.5zM677 347h6.5v6.5h-6.5zM677 353h6.5v6.5h-6.5zM581 413h6.5v6.5h-6.5zM659 413h6.5v6.5h-6.5zM365 425h6.5v6.5h-6.5zM551 455h30.5v6.5h-30.5zM665 455h6.5v6.5h-6.5zM371 461h6.5v6.5h-6.5zM539 461h6.5v6.5h-6.5zM365 467h6.5v6.5h-6.5zM569 473h12.5v6.5h-12.5zM659 473h6.5v6.5h-6.5zM563 479h6.5v6.5h-6.5zM599 503h6.5v6.5h-6.5zM599 509h6.5v6.5h-6.5zM629 521h6.5v6.5h-6.5zM659 545h6.5v6.5h-6.5zM665 557h6.5v6.5h-6.5zM341 569h6.5v6.5h-6.5zM449 569h6.5v6.5h-6.5zM665 569h6.5v6.5h-6.5zM587 611h6.5v6.5h-6.5z"/>
<path fill="#333333" d="M533 173h6.5v6.5h-6.5zM611 233h18.5v6.5h-18.5zM653 239h6.5v6.5h-6.5zM581 245h6.5v6.5h-6.5zM431 257h6.5v6.5h-6.5zM581 257h6.5v6.5h-6.5zM437 281h6.5v6.5h-6.5zM677 299h6.5v6.5h-6.5zM443 305h6.5v6.5h-6.5zM443 311h6.5v6.5h-6.5zM671 335h6.5v6.5h-6.5zM437 341h6.5v6.5h-6.5zM671 341h6.5v6.5h-6.5zM395 347h6.5v6.5h-6.5zM413 353h6.5v6.5h-6.5zM599 353h6.5v6.5h-6.5zM653 401h6.5v6.5h-6.5zM665 425h6.5v6.5h-6.5zM575 449h6.5v6.5h-6.5zM533 467h6.5v6.5h-6.5zM449 473h12.5v6.5h-12.5zM443 479h6.5v6.5h-6.5zM461 479h6.5v6.5h-6.5zM569 479h12.5v6.5h-12.5zM533 485h6.5v6.5h-6.5zM563 485h6.5v6.5h-6.5zM557 491h6.5v6.5h-6.5zM623 491h6.5v6.5h-6.5zM641 491h6.5v6.5h-6.5zM617 503h6.5v6.5h-6.5zM617 509h6.5v6.5h-6.5zM641 527h6.5v6.5h-6.5zM593 539h6.5v6.5h-6.5zM665 575h6.5v6.5h-6.5zM587 593h6.5v6.5h-6.5zM443 605h6.5v6.5h-6.5z"/>
<path fill="#343434" d="M419 233h6.5v6.5h-6.5zM605 233h6.5v6.5h-6.5zM629 233h6.5v6.5h-6.5zM425 245h6.5v6.5h-6.5zM677 257h6.5v6.5h-6.5zM677 305h6.5v6.5h-6.5zM437 323h6.5v6.5h-6.5zM389 347h6.5v6.5h-6.5zM437 353h6.5v6.5h-6.5zM575 437h6.5v6.5h-6.5zM575 443h6.5v6.5h-6.5zM563 449h12.5v6.5h-12.5zM545 455h6.5v6.5h-6.5zM443 485h6.5v6.5h-6.5zM461 485h6.5v6.5h-6.5zM581 485h6.5v6.5h-6.5zM587 491h6.5v6.5h-6.5zM635 491h6.5v6.5h-6.5zM647 491h6.5v6.5h-6.5zM551 497h6.5v6.5h-6.5zM593 497h6.5v6.5h-6.5zM641 497h6.5v6.5h-6.5zM641 503h6.5v6.5h-6.5zM593 533h6.5v6.5h-6.5zM665 551h6.5v6.5h-6.5zM443 575h6.5v6.5h-6.5zM353 581h6.5v6.5h-6.5zM479 587h6.5v6.5h-6.5zM587 587h6.5v6.5h-6.5zM479 593h6.5v6.5h-6.5z"/>
<path fill="#353535" d="M539 167h6.5v6.5h-6.5zM503 173h6.5v6.5h-6.5zM419 191h6.5v6.5h-6.5zM599 233h6.5v6.5h-6.5zM635 233h6.5v6.5h-6.5zM581 239h6.5v6.5h-6.5zM659 239h6.5v6.5h-6.5zM671 245h6.5v6.5h-6.5zM431 251h6.5v6.5h-6.5zM593 281h6.5v6.5h-6.5zM443 299h6.5v6.5h-6.5zM431 329h6.5v6.5h-6.5zM383 347h6.5v6.5h-6.5zM593 371h6.5v6.5h-6.5zM587 401h6.5v6.5h-6.5zM581 407h6.5v6.5h-6.5zM575 419h6.5v6.5h-6.5zM575 425h6.5v6.5h-6.5zM371 431h6.5v6.5h-6.5zM575 431h6.5v6.5h-6.5zM569 443h6.5v6.5h-6.5zM377 449h6.5v6.5h-6.5zM557 449h6.5v6.5h-6.5zM569 485h12.5v6.5h-12.5zM653 485h6.5v6.5h-6.5zM563 491h6.5v6.5h-6.5zM629 491h6.5v6.5h-6.5zM545 497h6.5v6.5h-6.5zM593 503h6.5v6.5h-6.5zM593 509h6.5v6.5h-6.5zM641 509h6.5v6.5h-6.5zM593 515h6.5v6.5h-6.5zM623 515h6.5v6.5h-6.5zM593 521h6.5v6.5h-6.5zM593 527h6.5v6.5h-6.5zM473 569h6.5v6.5h-6.5zM479 599h6.5v6.5h-6.5z"/>
<path fill="#363636" d="M425 167h6.5v6.5h-6.5zM515 179h12.5v6.5h-12.5zM419 227h6.5v6.5h-6.5zM593 233h6.5v6.5h-6.5zM641 233h6.5v6.5h-6.5zM575 251h6.5v6.5h-6.5zM677 251h6.5v6.5h-6.5zM587 269h6.5v6.5h-6.5zM437 275h6.5v6.5h-6.5zM677 311h6.5v6.5h-6.5zM443 317h6.5v6.5h-6.5zM599 323h6.5v6.5h-6.5zM407 353h6.5v6.5h-6.5zM659 371h6.5v6.5h-6.5zM653 395h6.5v6.5h-6.5zM659 407h6.5v6.5h-6.5zM575 413h6.5v6.5h-6.5zM665 419h6.5v6.5h-6.5zM665 461h6.5v6.5h-6.5zM449 491h12.5v6.5h-12.5zM533 491h6.5v6.5h-6.5zM569 491h6.5v6.5h-6.5zM581 491h6.5v6.5h-6.5zM539 497h6.5v6.5h-6.5zM557 497h6.5v6.5h-6.5zM623 497h6.5v6.5h-6.5zM635 497h6.5v6.5h-6.5zM647 497h6.5v6.5h-6.5zM635 503h6.5v6.5h-6.5zM647 503h6.5v6.5h-6.5zM647 509h6.5v6.5h-6.5zM635 521h6.5v6.5h-6.5zM455 563h12.5v6.5h-12.5zM479 581h6.5v6.5h-6.5zM587 581h6.5v6.5h-6.5zM665 581h6.5v6.5h-6.5zM479 605h6.5v6.5h-6.5zM443 611h6.5v6.5h-6.5z"/>
<path fill="#373737" d="M587 233h6.5v6.5h-6.5zM647 233h6.5v6.5h-6.5zM425 239h6.5v6.5h-6.5zM665 239h6.5v6.5h-6.5zM575 245h6.5v6.5h-6.5zM575 257h6.5v6.5h-6.5zM581 263h6.5v6.5h-6.5zM437 269h6.5v6.5h-6.5zM677 317h6.5v6.5h-6.5zM377 347h6.5v6.5h-6.5zM599 347h6.5v6.5h-6.5zM653 377h6.5v6.5h-6.5zM587 389h6.5v6.5h-6.5zM365 419h6.5v6.5h-6.5zM569 437h6.5v6.5h-6.5zM377 443h6.5v6.5h-6.5zM563 443h6.5v6.5h-6.5zM377 455h6.5v6.5h-6.5zM443 473h6.5v6.5h-6.5zM527 479h6.5v6.5h-6.5zM575 491h6.5v6.5h-6.5zM563 497h6.5v6.5h-6.5zM623 503h6.5v6.5h-6.5zM623 509h6.5v6.5h-6.5zM635 509h6.5v6.5h-6.5zM653 533h6.5v6.5h-6.5zM659 539h6.5v6.5h-6.5zM359 599h6.5v6.5h-6.5zM359 605h6.5v6.5h-6.5z"/>
<path fill="#383838" d="M545 161h6.5v6.5h-6.5zM497 167h6.5v6.5h-6.5zM425 173h6.5v6.5h-6.5zM527 179h6.5v6.5h-6.5zM617 227h6.5v6.5h-6.5zM671 239h6.5v6.5h-6.5zM431 245h6.5v6.5h-6.5zM677 245h6.5v6.5h-6.5zM437 263h6.5v6.5h-6.5zM443 293h6.5v6.5h-6.5zM443 347h6.5v6.5h-6.5zM587 383h6.5v6.5h-6.5zM653 389h6.5v6.5h-6.5zM575 407h6.5v6.5h-6.5zM371 425h6.5v6.5h-6.5zM569 431h6.5v6.5h-6.5zM551 449h6.5v6.5h-6.5zM461 473h6.5v6.5h-6.5zM527 473h6.5v6.5h-6.5zM527 485h6.5v6.5h-6.5zM569 497h6.5v6.5h-6.5zM587 497h6.5v6.5h-6.5zM629 497h6.5v6.5h-6.5zM629 515h6.5v6.5h-6.5zM641 515h12.5v6.5h-12.5zM647 527h6.5v6.5h-6.5zM665 545h6.5v6.5h-6.5zM467 563h6.5v6.5h-6.5zM587 575h6.5v6.5h-6.5zM359 593h6.5v6.5h-6.5z"/>
<path fill="#393939" d="M539 173h6.5v6.5h-6.5zM509 179h6.5v6.5h-6.5zM419 197h6.5v6.5h-6.5zM419 221h6.5v6.5h-6.5zM605 227h12.5v6.5h-12.5zM623 227h12.5v6.5h-12.5zM581 233h6.5v6.5h-6.5zM653 233h6.5v6.5h-6.5zM575 239h6.5v6.5h-6.5zM437 257h6.5v6.5h-6.5zM677 323h6.5v6.5h-6.5zM437 335h6.5v6.5h-6.5zM677 341h6.5v6.5h-6.5zM593 365h6.5v6.5h-6.5zM653 383h6.5v6.5h-6.5zM587 395h6.5v6.5h-6.5zM569 425h6.5v6.5h-6.5zM563 437h6.5v6.5h-6.5zM557 443h6.5v6.5h-6.5zM539 455h6.5v6.5h-6.5zM533 461h6.5v6.5h-6.5zM371 467h6.5v6.5h-6.5zM359 473h6.5v6.5h-6.5zM467 479h6.5v6.5h-6.5zM659 479h6.5v6.5h-6.5zM467 485h6.5v6.5h-6.5zM461 491h6.5v6.5h-6.5zM533 497h6.5v6.5h-6.5zM575 497h12.5v6.5h-12.5zM587 503h6.5v6.5h-6.5zM629 503h6.5v6.5h-6.5zM587 509h6.5v6.5h-6.5zM629 509h6.5v6.5h-6.5zM635 515h6.5v6.5h-6.5zM641 521h18.5v6.5h-18.5zM653 527h6.5v6.5h-6.5zM449 563h6.5v6.5h-6.5zM443 569h6.5v6.5h-6.5zM479 575h6.5v6.5h-6.5z"/>
<path fill="#3a3a3a" d="M425 179h6.5v6.5h-6.5zM599 227h6.5v6.5h-6.5zM635 227h6.5v6.5h-6.5zM425 233h6.5v6.5h-6.5zM659 233h6.5v6.5h-6.5zM677 239h6.5v6.5h-6.5zM437 251h6.5v6.5h-6.5zM569 251h6.5v6.5h-6.5zM569 257h6.5v6.5h-6.5zM593 287h6.5v6.5h-6.5zM599 329h6.5v6.5h-6.5zM677 329h6.5v6.5h-6.5zM443 341h6.5v6.5h-6.5zM401 353h6.5v6.5h-6.5zM569 413h6.5v6.5h-6.5zM665 413h6.5v6.5h-6.5zM569 419h6.5v6.5h-6.5zM671 431h6.5v6.5h-6.5zM377 437h6.5v6.5h-6.5zM671 437h6.5v6.5h-6.5zM671 443h6.5v6.5h-6.5zM443 491h6.5v6.5h-6.5zM653 491h6.5v6.5h-6.5zM551 503h24.5v6.5h-24.5zM587 515h6.5v6.5h-6.5zM653 515h6.5v6.5h-6.5zM659 533h6.5v6.5h-6.5zM347 569h6.5v6.5h-6.5zM587 569h6.5v6.5h-6.5zM437 587h6.5v6.5h-6.5zM479 611h6.5v6.5h-6.5z"/>
<path fill="#3b3b3b" d="M533 179h6.5v6.5h-6.5zM419 203h6.5v6.5h-6.5zM419 215h6.5v6.5h-6.5zM641 227h6.5v6.5h-6.5zM665 233h12.5v6.5h-12.5zM575 263h6.5v6.5h-6.5zM443 287h6.5v6.5h-6.5zM593 293h6.5v6.5h-6.5zM437 329h6.5v6.5h-6.5zM677 335h6.5v6.5h-6.5zM599 341h6.5v6.5h-6.5zM677 359h6.5v6.5h-6.5zM671 365h6.5v6.5h-6.5zM659 401h6.5v6.5h-6.5zM569 407h6.5v6.5h-6.5zM371 419h6.5v6.5h-6.5zM563 431h6.5v6.5h-6.5zM377 461h6.5v6.5h-6.5zM665 467h6.5v6.5h-6.5zM437 479h6.5v6.5h-6.5zM467 491h6.5v6.5h-6.5zM527 491h6.5v6.5h-6.5zM545 503h6.5v6.5h-6.5zM575 503h12.5v6.5h-12.5zM569 509h6.5v6.5h-6.5zM581 509h6.5v6.5h-6.5zM653 509h6.5v6.5h-6.5zM587 521h6.5v6.5h-6.5zM671 557h6.5v6.5h-6.5zM341 563h6.5v6.5h-6.5zM671 563h6.5v6.5h-6.5zM353 575h6.5v6.5h-6.5zM359 587h6.5v6.5h-6.5zM437 593h6.5v6.5h-6.5z"/>
<path fill="#3c3c3c" d="M545 167h6.5v6.5h-6.5zM419 209h6.5v6.5h-6.5zM593 227h6.5v6.5h-6.5zM647 227h12.5v6.5h-12.5zM431 239h6.5v6.5h-6.5zM437 245h6.5v6.5h-6.5zM569 245h6.5v6.5h-6.5zM587 275h6.5v6.5h-6.5zM593 299h6.5v6.5h-6.5zM593 305h6.5v6.5h-6.5zM443 323h6.5v6.5h-6.5zM599 335h6.5v6.5h-6.5zM395 353h6.5v6.5h-6.5zM593 359h6.5v6.5h-6.5zM671 425h6.5v6.5h-6.5zM557 437h6.5v6.5h-6.5zM545 449h6.5v6.5h-6.5zM671 449h6.5v6.5h-6.5zM527 467h6.5v6.5h-6.5zM365 473h6.5v6.5h-6.5zM467 473h6.5v6.5h-6.5zM473 479h6.5v6.5h-6.5zM521 479h6.5v6.5h-6.5zM437 485h6.5v6.5h-6.5zM473 485h6.5v6.5h-6.5zM521 485h6.5v6.5h-6.5zM455 497h6.5v6.5h-6.5zM563 509h6.5v6.5h-6.5zM575 509h6.5v6.5h-6.5zM587 527h6.5v6.5h-6.5zM659 527h6.5v6.5h-6.5zM587 533h6.5v6.5h-6.5zM671 551h6.5v6.5h-6.5zM461 557h6.5v6.5h-6.5zM587 557h6.5v6.5h-6.5zM473 563h6.5v6.5h-6.5zM587 563h6.5v6.5h-6.5zM671 569h6.5v6.5h-6.5zM437 581h6.5v6.5h-6.5zM437 599h6.5v6.5h-6.5z"/>
<path fill="#3d3d3d" d="M425 185h6.5v6.5h-6.5zM617 221h30.5v6.5h-30.5zM659 227h18.5v6.5h-18.5zM575 233h6.5v6.5h-6.5zM677 233h6.5v6.5h-6.5zM443 281h6.5v6.5h-6.5zM665 371h6.5v6.5h-6.5zM563 425h6.5v6.5h-6.5zM377 431h6.5v6.5h-6.5zM551 443h6.5v6.5h-6.5zM449 467h6.5v6.5h-6.5zM479 485h6.5v6.5h-6.5zM515 485h6.5v6.5h-6.5zM473 491h6.5v6.5h-6.5zM449 497h6.5v6.5h-6.5zM461 497h6.5v6.5h-6.5zM653 497h6.5v6.5h-6.5zM539 503h6.5v6.5h-6.5zM653 503h6.5v6.5h-6.5zM575 515h12.5v6.5h-12.5zM587 539h6.5v6.5h-6.5zM665 539h6.5v6.5h-6.5zM587 545h6.5v6.5h-6.5zM587 551h6.5v6.5h-6.5zM455 557h6.5v6.5h-6.5z"/>
<path fill="#3e3e3e" d="M497 173h6.5v6.5h-6.5zM635 215h12.5v6.5h-12.5zM611 221h6.5v6.5h-6.5zM647 221h24.5v6.5h-24.5zM425 227h6.5v6.5h-6.5zM587 227h6.5v6.5h-6.5zM569 263h6.5v6.5h-6.5zM581 269h6.5v6.5h-6.5zM443 275h6.5v6.5h-6.5zM443 353h6.5v6.5h-6.5zM587 377h6.5v6.5h-6.5zM659 395h6.5v6.5h-6.5zM581 401h6.5v6.5h-6.5zM563 419h6.5v6.5h-6.5zM455 467h6.5v6.5h-6.5zM437 473h6.5v6.5h-6.5zM521 473h6.5v6.5h-6.5zM479 479h6.5v6.5h-6.5zM515 479h6.5v6.5h-6.5zM485 485h6.5v6.5h-6.5zM509 485h6.5v6.5h-6.5zM479 491h6.5v6.5h-6.5zM521 491h6.5v6.5h-6.5zM467 497h6.5v6.5h-6.5zM527 497h6.5v6.5h-6.5zM557 509h6.5v6.5h-6.5zM569 515h6.5v6.5h-6.5zM467 557h6.5v6.5h-6.5zM479 569h6.5v6.5h-6.5zM437 605h6.5v6.5h-6.5z"/>
<path fill="#3f3f3f" d="M551 161h6.5v6.5h-6.5zM431 167h6.5v6.5h-6.5zM503 179h6.5v6.5h-6.5zM635 209h24.5v6.5h-24.5zM629 215h6.5v6.5h-6.5zM647 215h24.5v6.5h-24.5zM605 221h6.5v6.5h-6.5zM671 221h6.5v6.5h-6.5zM677 227h6.5v6.5h-6.5zM569 239h6.5v6.5h-6.5zM443 257h6.5v6.5h-6.5zM563 257h6.5v6.5h-6.5zM443 263h6.5v6.5h-6.5zM443 269h6.5v6.5h-6.5zM389 353h6.5v6.5h-6.5zM659 377h6.5v6.5h-6.5zM665 407h6.5v6.5h-6.5zM671 419h6.5v6.5h-6.5zM473 473h6.5v6.5h-6.5zM491 485h18.5v6.5h-18.5zM485 491h36.5v6.5h-36.5zM473 497h6.5v6.5h-6.5zM533 503h6.5v6.5h-6.5zM581 521h6.5v6.5h-6.5zM659 521h6.5v6.5h-6.5zM449 557h6.5v6.5h-6.5zM443 563h6.5v6.5h-6.5zM437 575h6.5v6.5h-6.5z"/>
<path fill="#404040" d="M641 167h6.5v6.5h-6.5zM545 173h6.5v6.5h-6.5zM635 173h12.5v6.5h-12.5zM539 179h6.5v6.5h-6.5zM635 179h12.5v6.5h-12.5zM641 185h6.5v6.5h-6.5zM425 191h6.5v6.5h-6.5zM641 191h12.5v6.5h-12.5zM641 197h12.5v6.5h-12.5zM635 203h30.5v6.5h-30.5zM629 209h6.5v6.5h-6.5zM659 209h12.5v6.5h-12.5zM623 215h6.5v6.5h-6.5zM671 215h6.5v6.5h-6.5zM599 221h6.5v6.5h-6.5zM677 221h6.5v6.5h-6.5zM581 227h6.5v6.5h-6.5zM431 233h6.5v6.5h-6.5zM437 239h6.5v6.5h-6.5zM443 251h6.5v6.5h-6.5zM563 251h6.5v6.5h-6.5zM593 311h6.5v6.5h-6.5zM443 335h6.5v6.5h-6.5zM593 353h6.5v6.5h-6.5zM419 359h12.5v6.5h-12.5zM659 389h6.5v6.5h-6.5zM563 413h6.5v6.5h-6.5zM377 425h6.5v6.5h-6.5zM557 431h6.5v6.5h-6.5zM383 449h6.5v6.5h-6.5zM383 455h6.5v6.5h-6.5zM443 467h6.5v6.5h-6.5zM461 467h6.5v6.5h-6.5zM509 479h6.5v6.5h-6.5zM659 485h6.5v6.5h-6.5zM437 491h6.5v6.5h-6.5zM443 497h6.5v6.5h-6.5zM479 497h6.5v6.5h-6.5zM455 503h12.5v6.5h-12.5zM551 509h6.5v6.5h-6.5zM563 515h6.5v6.5h-6.5zM671 545h6.5v6.5h-6.5zM461 551h6.5v6.5h-6.5zM359 581h6.5v6.5h-6.5zM437 611h6.5v6.5h-6.5z"/>
<path fill="#414141" d="M629 161h18.5v6.5h-18.5zM491 167h6.5v6.5h-6.5zM629 167h12.5v6.5h-12.5zM629 173h6.5v6.5h-6.5zM647 173h6.5v6.5h-6.5zM629 179h6.5v6.5h-6.5zM647 179h12.5v6.5h-12.5zM629 185h12.5v6.5h-12.5zM647 185h12.5v6.5h-12.5zM635 191h6.5v6.5h-6.5zM653 191h6.5v6.5h-6.5zM635 197h6.5v6.5h-6.5zM653 197h12.5v6.5h-12.5zM629 203h6.5v6.5h-6.5zM665 203h6.5v6.5h-6.5zM671 209h6.5v6.5h-6.5zM617 215h6.5v6.5h-6.5zM677 215h6.5v6.5h-6.5zM425 221h6.5v6.5h-6.5zM443 329h6.5v6.5h-6.5zM383 353h6.5v6.5h-6.5zM413 359h6.5v6.5h-6.5zM659 383h6.5v6.5h-6.5zM365 413h6.5v6.5h-6.5zM383 443h6.5v6.5h-6.5zM671 455h6.5v6.5h-6.5zM377 467h6.5v6.5h-6.5zM371 473h6.5v6.5h-6.5zM485 479h6.5v6.5h-6.5zM503 479h6.5v6.5h-6.5zM485 497h6.5v6.5h-6.5zM521 497h6.5v6.5h-6.5zM449 503h6.5v6.5h-6.5zM467 503h6.5v6.5h-6.5zM455 551h6.5v6.5h-6.5zM467 551h6.5v6.5h-6.5zM473 557h6.5v6.5h-6.5z"/>
<path fill="#424242" d="M623 161h6.5v6.5h-6.5zM623 167h6.5v6.5h-6.5zM431 173h6.5v6.5h-6.5zM623 173h6.5v6.5h-6.5zM623 179h6.5v6.5h-6.5zM659 179h6.5v6.5h-6.5zM659 185h6.5v6.5h-6.5zM629 191h6.5v6.5h-6.5zM659 191h12.5v6.5h-12.5zM629 197h6.5v6.5h-6.5zM665 197h6.5v6.5h-6.5zM671 203h6.5v6.5h-6.5zM623 209h6.5v6.5h-6.5zM677 209h6.5v6.5h-6.5zM611 215h6.5v6.5h-6.5zM593 221h6.5v6.5h-6.5zM443 245h6.5v6.5h-6.5zM563 263h6.5v6.5h-6.5zM449 305h6.5v6.5h-6.5zM407 359h6.5v6.5h-6.5zM431 359h6.5v6.5h-6.5zM569 401h12.5v6.5h-12.5zM563 407h6.5v6.5h-6.5zM551 437h6.5v6.5h-6.5zM479 473h6.5v6.5h-6.5zM665 473h6.5v6.5h-6.5zM491 497h18.5v6.5h-18.5zM515 497h6.5v6.5h-6.5zM473 503h6.5v6.5h-6.5zM455 509h18.5v6.5h-18.5zM545 509h6.5v6.5h-6.5zM461 515h6.5v6.5h-6.5zM575 521h6.5v6.5h-6.5zM581 527h6.5v6.5h-6.5zM665 533h6.5v6.5h-6.5zM461 545h6.5v6.5h-6.5zM437 569h6.5v6.5h-6.5z"/>
<path fill="#434343" d="M551 167h6.5v6.5h-6.5zM521 185h6.5v6.5h-6.5zM623 185h6.5v6.5h-6.5zM665 185h6.5v6.5h-6.5zM425 197h6.5v6.5h-6.5zM671 197h6.5v6.5h-6.5zM623 203h6.5v6.5h-6.5zM677 203h6.5v6.5h-6.5zM563 245h6.5v6.5h-6.5zM575 269h6.5v6.5h-6.5zM587 281h6.5v6.5h-6.5zM449 311h6.5v6.5h-6.5zM377 353h6.5v6.5h-6.5zM437 359h6.5v6.5h-6.5zM587 371h6.5v6.5h-6.5zM371 413h6.5v6.5h-6.5zM377 419h6.5v6.5h-6.5zM557 425h6.5v6.5h-6.5zM539 449h6.5v6.5h-6.5zM533 455h6.5v6.5h-6.5zM383 461h6.5v6.5h-6.5zM467 467h6.5v6.5h-6.5zM515 473h6.5v6.5h-6.5zM431 479h6.5v6.5h-6.5zM491 479h12.5v6.5h-12.5zM509 497h6.5v6.5h-6.5zM479 503h6.5v6.5h-6.5zM527 503h6.5v6.5h-6.5zM455 515h6.5v6.5h-6.5zM455 521h12.5v6.5h-12.5zM455 527h12.5v6.5h-12.5zM461 533h6.5v6.5h-6.5zM461 539h6.5v6.5h-6.5zM455 545h6.5v6.5h-6.5zM467 545h6.5v6.5h-6.5zM479 563h6.5v6.5h-6.5zM353 569h6.5v6.5h-6.5z"/>
<path fill="#444444" d="M617 161h6.5v6.5h-6.5zM617 167h6.5v6.5h-6.5zM617 173h6.5v6.5h-6.5zM515 185h6.5v6.5h-6.5zM527 185h6.5v6.5h-6.5zM671 185h6.5v6.5h-6.5zM623 191h6.5v6.5h-6.5zM671 191h6.5v6.5h-6.5zM623 197h6.5v6.5h-6.5zM677 197h6.5v6.5h-6.5zM617 209h6.5v6.5h-6.5zM425 215h6.5v6.5h-6.5zM605 215h6.5v6.5h-6.5zM449 299h6.5v6.5h-6.5zM593 347h6.5v6.5h-6.5zM401 359h6.5v6.5h-6.5zM665 401h6.5v6.5h-6.5zM671 413h6.5v6.5h-6.5zM383 437h6.5v6.5h-6.5zM545 443h6.5v6.5h-6.5zM527 461h6.5v6.5h-6.5zM431 485h6.5v6.5h-6.5zM443 503h6.5v6.5h-6.5zM485 503h6.5v6.5h-6.5zM449 509h6.5v6.5h-6.5zM473 509h6.5v6.5h-6.5zM539 509h6.5v6.5h-6.5zM467 515h6.5v6.5h-6.5zM557 515h6.5v6.5h-6.5zM659 515h6.5v6.5h-6.5zM467 521h6.5v6.5h-6.5zM569 521h6.5v6.5h-6.5zM467 527h6.5v6.5h-6.5zM455 533h6.5v6.5h-6.5zM467 533h6.5v6.5h-6.5zM455 539h6.5v6.5h-6.5zM467 539h6.5v6.5h-6.5zM449 551h6.5v6.5h-6.5zM473 551h6.5v6.5h-6.5zM443 557h6.5v6.5h-6.5zM347 563h6.5v6.5h-6.5zM485 587h6.5v6.5h-6.5zM485 593h6.5v6.5h-6.5zM485 599h6.5v6.5h-6.5z"/>
<path fill="#454545" d="M431 179h6.5v6.5h-6.5zM617 179h6.5v6.5h-6.5zM677 191h6.5v6.5h-6.5zM425 203h6.5v6.5h-6.5zM587 221h6.5v6.5h-6.5zM431 227h6.5v6.5h-6.5zM575 227h6.5v6.5h-6.5zM569 233h6.5v6.5h-6.5zM449 317h6.5v6.5h-6.5zM677 431h6.5v6.5h-6.5zM437 467h6.5v6.5h-6.5zM521 467h6.5v6.5h-6.5zM431 473h6.5v6.5h-6.5zM437 497h6.5v6.5h-6.5zM491 503h6.5v6.5h-6.5zM521 503h6.5v6.5h-6.5zM449 515h6.5v6.5h-6.5zM581 533h6.5v6.5h-6.5zM485 581h6.5v6.5h-6.5zM485 605h6.5v6.5h-6.5z"/>
<path fill="#464646" d="M557 161h6.5v6.5h-6.5zM545 179h6.5v6.5h-6.5zM533 185h6.5v6.5h-6.5zM617 185h6.5v6.5h-6.5zM617 203h6.5v6.5h-6.5zM425 209h6.5v6.5h-6.5zM611 209h6.5v6.5h-6.5zM599 215h6.5v6.5h-6.5zM437 233h6.5v6.5h-6.5zM443 239h6.5v6.5h-6.5zM449 257h6.5v6.5h-6.5zM449 263h6.5v6.5h-6.5zM569 269h6.5v6.5h-6.5zM587 287h6.5v6.5h-6.5zM449 293h6.5v6.5h-6.5zM593 317h6.5v6.5h-6.5zM557 419h6.5v6.5h-6.5zM677 425h6.5v6.5h-6.5zM383 431h6.5v6.5h-6.5zM677 437h6.5v6.5h-6.5zM473 467h6.5v6.5h-6.5zM509 473h6.5v6.5h-6.5zM359 479h6.5v6.5h-6.5zM659 491h6.5v6.5h-6.5zM497 503h6.5v6.5h-6.5zM479 509h6.5v6.5h-6.5zM473 515h6.5v6.5h-6.5zM449 521h6.5v6.5h-6.5zM473 545h6.5v6.5h-6.5zM479 557h6.5v6.5h-6.5zM359 575h6.5v6.5h-6.5zM485 575h6.5v6.5h-6.5zM365 599h6.5v6.5h-6.5zM365 611h6.5v6.5h-6.5z"/>
<path fill="#474747" d="M611 161h6.5v6.5h-6.5zM437 167h6.5v6.5h-6.5zM611 167h6.5v6.5h-6.5zM551 173h6.5v6.5h-6.5zM611 173h6.5v6.5h-6.5zM497 179h6.5v6.5h-6.5zM509 185h6.5v6.5h-6.5zM617 191h6.5v6.5h-6.5zM617 197h6.5v6.5h-6.5zM563 239h6.5v6.5h-6.5zM557 251h6.5v6.5h-6.5zM557 257h6.5v6.5h-6.5zM563 269h6.5v6.5h-6.5zM581 275h6.5v6.5h-6.5zM593 341h6.5v6.5h-6.5zM395 359h6.5v6.5h-6.5zM587 365h6.5v6.5h-6.5zM665 377h6.5v6.5h-6.5zM551 431h6.5v6.5h-6.5zM671 461h6.5v6.5h-6.5zM377 473h6.5v6.5h-6.5zM485 473h6.5v6.5h-6.5zM431 491h6.5v6.5h-6.5zM503 503h18.5v6.5h-18.5zM443 509h6.5v6.5h-6.5zM485 509h6.5v6.5h-6.5zM533 509h6.5v6.5h-6.5zM473 521h6.5v6.5h-6.5zM449 527h6.5v6.5h-6.5zM473 527h6.5v6.5h-6.5zM575 527h6.5v6.5h-6.5zM473 533h6.5v6.5h-6.5zM473 539h6.5v6.5h-6.5zM449 545h6.5v6.5h-6.5zM437 563h6.5v6.5h-6.5zM677 563h6.5v6.5h-6.5zM431 587h6.5v6.5h-6.5zM365 593h6.5v6.5h-6.5zM431 593h6.5v6.5h-6.5zM365 605h6.5v6.5h-6.5z"/>
<path fill="#484848" d="M491 173h6.5v6.5h-6.5zM611 179h6.5v6.5h-6.5zM431 185h6.5v6.5h-6.5zM581 221h6.5v6.5h-6.5zM449 251h6.5v6.5h-6.5zM557 263h6.5v6.5h-6.5zM449 269h6.5v6.5h-6.5zM449 287h6.5v6.5h-6.5zM587 293h6.5v6.5h-6.5zM587 299h6.5v6.5h-6.5zM665 395h6.5v6.5h-6.5zM563 401h6.5v6.5h-6.5zM383 467h6.5v6.5h-6.5zM365 479h6.5v6.5h-6.5zM659 509h6.5v6.5h-6.5zM479 515h6.5v6.5h-6.5zM551 515h6.5v6.5h-6.5zM563 521h6.5v6.5h-6.5zM449 533h6.5v6.5h-6.5zM449 539h6.5v6.5h-6.5zM443 551h6.5v6.5h-6.5zM677 557h6.5v6.5h-6.5zM431 581h6.5v6.5h-6.5zM431 599h6.5v6.5h-6.5zM485 611h6.5v6.5h-6.5z"/>
<path fill="#494949" d="M539 185h6.5v6.5h-6.5zM611 203h6.5v6.5h-6.5zM605 209h6.5v6.5h-6.5zM593 215h6.5v6.5h-6.5zM449 275h6.5v6.5h-6.5zM449 281h6.5v6.5h-6.5zM449 323h6.5v6.5h-6.5zM389 359h6.5v6.5h-6.5zM443 359h6.5v6.5h-6.5zM671 371h6.5v6.5h-6.5zM671 407h6.5v6.5h-6.5zM377 413h6.5v6.5h-6.5zM677 419h6.5v6.5h-6.5zM677 443h6.5v6.5h-6.5zM389 449h6.5v6.5h-6.5zM389 455h6.5v6.5h-6.5zM437 503h6.5v6.5h-6.5zM491 509h6.5v6.5h-6.5zM527 509h6.5v6.5h-6.5zM665 527h6.5v6.5h-6.5zM581 539h6.5v6.5h-6.5zM479 551h6.5v6.5h-6.5zM485 569h6.5v6.5h-6.5zM365 587h6.5v6.5h-6.5zM581 605h6.5v6.5h-6.5z"/>
<path fill="#4a4a4a" d="M605 161h6.5v6.5h-6.5zM485 167h6.5v6.5h-6.5zM557 167h6.5v6.5h-6.5zM611 185h6.5v6.5h-6.5zM431 221h6.5v6.5h-6.5zM449 245h6.5v6.5h-6.5zM557 245h6.5v6.5h-6.5zM587 305h6.5v6.5h-6.5zM449 341h6.5v6.5h-6.5zM587 359h6.5v6.5h-6.5zM677 365h6.5v6.5h-6.5zM665 383h6.5v6.5h-6.5zM665 389h6.5v6.5h-6.5zM581 395h6.5v6.5h-6.5zM557 413h6.5v6.5h-6.5zM383 425h6.5v6.5h-6.5zM449 461h12.5v6.5h-12.5zM431 467h6.5v6.5h-6.5zM503 473h6.5v6.5h-6.5zM425 479h6.5v6.5h-6.5zM665 479h6.5v6.5h-6.5zM425 485h6.5v6.5h-6.5zM659 497h6.5v6.5h-6.5zM497 509h6.5v6.5h-6.5zM443 515h6.5v6.5h-6.5zM485 515h6.5v6.5h-6.5zM545 515h6.5v6.5h-6.5zM479 521h6.5v6.5h-6.5zM479 527h6.5v6.5h-6.5zM671 539h6.5v6.5h-6.5zM479 545h6.5v6.5h-6.5zM677 551h6.5v6.5h-6.5zM431 575h6.5v6.5h-6.5zM581 599h6.5v6.5h-6.5zM431 605h6.5v6.5h-6.5zM581 611h6.5v6.5h-6.5z"/>
<path fill="#4b4b4b" d="M605 167h6.5v6.5h-6.5zM437 173h6.5v6.5h-6.5zM611 191h6.5v6.5h-6.5zM611 197h6.5v6.5h-6.5zM569 227h6.5v6.5h-6.5zM557 269h6.5v6.5h-6.5zM593 335h6.5v6.5h-6.5zM383 359h6.5v6.5h-6.5zM389 443h6.5v6.5h-6.5zM479 467h6.5v6.5h-6.5zM425 473h6.5v6.5h-6.5zM431 497h6.5v6.5h-6.5zM659 503h6.5v6.5h-6.5zM521 509h6.5v6.5h-6.5zM479 533h6.5v6.5h-6.5zM479 539h6.5v6.5h-6.5zM443 545h6.5v6.5h-6.5zM437 557h6.5v6.5h-6.5zM485 563h6.5v6.5h-6.5zM431 611h6.5v6.5h-6.5z"/>
<path fill="#4c4c4c" d="M563 161h6.5v6.5h-6.5zM605 173h6.5v6.5h-6.5zM551 179h6.5v6.5h-6.5zM431 191h6.5v6.5h-6.5zM599 209h6.5v6.5h-6.5zM587 215h6.5v6.5h-6.5zM437 227h6.5v6.5h-6.5zM443 233h6.5v6.5h-6.5zM563 233h6.5v6.5h-6.5zM449 329h6.5v6.5h-6.5zM449 335h6.5v6.5h-6.5zM449 347h6.5v6.5h-6.5zM581 389h6.5v6.5h-6.5zM551 425h6.5v6.5h-6.5zM545 437h6.5v6.5h-6.5zM677 449h6.5v6.5h-6.5zM389 461h6.5v6.5h-6.5zM443 461h6.5v6.5h-6.5zM461 461h6.5v6.5h-6.5zM491 473h6.5v6.5h-6.5zM371 479h6.5v6.5h-6.5zM437 509h6.5v6.5h-6.5zM503 509h6.5v6.5h-6.5zM443 521h6.5v6.5h-6.5zM557 521h6.5v6.5h-6.5zM569 527h6.5v6.5h-6.5zM581 545h6.5v6.5h-6.5zM353 563h6.5v6.5h-6.5zM431 569h6.5v6.5h-6.5zM365 581h6.5v6.5h-6.5zM581 593h6.5v6.5h-6.5z"/>
<path fill="#4d4d4d" d="M443 167h6.5v6.5h-6.5zM557 173h6.5v6.5h-6.5zM605 179h6.5v6.5h-6.5zM503 185h6.5v6.5h-6.5zM545 185h6.5v6.5h-6.5zM605 203h6.5v6.5h-6.5zM431 215h6.5v6.5h-6.5zM575 221h6.5v6.5h-6.5zM593 323h6.5v6.5h-6.5zM587 353h6.5v6.5h-6.5zM377 359h6.5v6.5h-6.5zM581 383h6.5v6.5h-6.5zM677 413h6.5v6.5h-6.5zM383 419h6.5v6.5h-6.5zM389 437h6.5v6.5h-6.5zM497 473h6.5v6.5h-6.5zM425 491h6.5v6.5h-6.5zM509 509h12.5v6.5h-12.5zM491 515h6.5v6.5h-6.5zM539 515h6.5v6.5h-6.5zM485 521h6.5v6.5h-6.5zM575 533h6.5v6.5h-6.5zM347 557h6.5v6.5h-6.5zM485 557h6.5v6.5h-6.5zM359 569h6.5v6.5h-6.5zM581 587h6.5v6.5h-6.5z"/>
<path fill="#4e4e4e" d="M599 161h6.5v6.5h-6.5zM431 197h6.5v6.5h-6.5zM449 239h6.5v6.5h-6.5zM575 275h6.5v6.5h-6.5zM593 329h6.5v6.5h-6.5zM401 365h6.5v6.5h-6.5zM557 407h6.5v6.5h-6.5zM539 443h6.5v6.5h-6.5zM437 461h6.5v6.5h-6.5zM515 467h6.5v6.5h-6.5zM383 473h6.5v6.5h-6.5zM431 503h6.5v6.5h-6.5zM443 527h6.5v6.5h-6.5zM485 527h6.5v6.5h-6.5zM443 533h6.5v6.5h-6.5zM443 539h6.5v6.5h-6.5zM437 551h6.5v6.5h-6.5zM581 551h6.5v6.5h-6.5z"/>
<path fill="#4f4f4f" d="M437 179h6.5v6.5h-6.5zM491 179h6.5v6.5h-6.5zM605 185h6.5v6.5h-6.5zM605 197h6.5v6.5h-6.5zM431 209h6.5v6.5h-6.5zM593 209h6.5v6.5h-6.5zM581 215h6.5v6.5h-6.5zM557 239h6.5v6.5h-6.5zM455 263h6.5v6.5h-6.5zM563 275h6.5v6.5h-6.5zM581 281h6.5v6.5h-6.5zM407 365h12.5v6.5h-12.5zM671 401h6.5v6.5h-6.5zM365 407h12.5v6.5h-12.5zM467 461h6.5v6.5h-6.5zM389 467h6.5v6.5h-6.5zM425 467h6.5v6.5h-6.5zM671 467h6.5v6.5h-6.5zM437 515h6.5v6.5h-6.5zM497 515h6.5v6.5h-6.5zM533 515h6.5v6.5h-6.5zM485 533h6.5v6.5h-6.5zM485 539h6.5v6.5h-6.5zM485 545h6.5v6.5h-6.5zM485 551h6.5v6.5h-6.5zM431 563h6.5v6.5h-6.5zM581 581h6.5v6.5h-6.5z"/>
<path fill="#505050" d="M569 161h6.5v6.5h-6.5zM479 167h6.5v6.5h-6.5zM563 167h6.5v6.5h-6.5zM599 167h6.5v6.5h-6.5zM485 173h6.5v6.5h-6.5zM605 191h6.5v6.5h-6.5zM431 203h6.5v6.5h-6.5zM599 203h6.5v6.5h-6.5zM455 257h6.5v6.5h-6.5zM557 275h6.5v6.5h-6.5zM569 275h6.5v6.5h-6.5zM395 365h6.5v6.5h-6.5zM563 395h6.5v6.5h-6.5zM377 407h6.5v6.5h-6.5zM389 431h6.5v6.5h-6.5zM533 449h6.5v6.5h-6.5zM377 479h6.5v6.5h-6.5zM419 479h6.5v6.5h-6.5zM425 497h6.5v6.5h-6.5zM503 515h6.5v6.5h-6.5zM491 521h6.5v6.5h-6.5zM551 521h6.5v6.5h-6.5zM665 521h6.5v6.5h-6.5z"/>
<path fill="#515151" d="M593 161h6.5v6.5h-6.5zM449 167h6.5v6.5h-6.5zM599 173h6.5v6.5h-6.5zM557 179h6.5v6.5h-6.5zM551 185h6.5v6.5h-6.5zM521 191h18.5v6.5h-18.5zM587 209h6.5v6.5h-6.5zM587 311h6.5v6.5h-6.5zM587 347h6.5v6.5h-6.5zM389 365h6.5v6.5h-6.5zM419 365h6.5v6.5h-6.5zM383 413h6.5v6.5h-6.5zM395 449h6.5v6.5h-6.5zM527 455h6.5v6.5h-6.5zM431 461h6.5v6.5h-6.5zM419 473h6.5v6.5h-6.5zM353 485h6.5v6.5h-6.5zM419 485h6.5v6.5h-6.5zM527 515h6.5v6.5h-6.5zM563 527h6.5v6.5h-6.5zM581 557h6.5v6.5h-6.5zM365 575h6.5v6.5h-6.5zM581 575h6.5v6.5h-6.5zM425 593h6.5v6.5h-6.5z"/>
<path fill="#525252" d="M443 173h6.5v6.5h-6.5zM599 179h6.5v6.5h-6.5zM515 191h6.5v6.5h-6.5zM539 191h6.5v6.5h-6.5zM437 221h6.5v6.5h-6.5zM569 221h6.5v6.5h-6.5zM563 227h6.5v6.5h-6.5zM455 269h6.5v6.5h-6.5zM581 287h6.5v6.5h-6.5zM371 365h6.5v6.5h-6.5zM383 365h6.5v6.5h-6.5zM671 377h6.5v6.5h-6.5zM551 419h6.5v6.5h-6.5zM395 455h6.5v6.5h-6.5zM677 455h6.5v6.5h-6.5zM473 461h6.5v6.5h-6.5zM521 461h6.5v6.5h-6.5zM485 467h6.5v6.5h-6.5zM665 485h6.5v6.5h-6.5zM431 509h6.5v6.5h-6.5zM509 515h6.5v6.5h-6.5zM521 515h6.5v6.5h-6.5zM437 521h6.5v6.5h-6.5zM497 521h6.5v6.5h-6.5zM491 527h6.5v6.5h-6.5zM575 539h6.5v6.5h-6.5zM437 545h6.5v6.5h-6.5zM677 545h6.5v6.5h-6.5zM431 557h6.5v6.5h-6.5zM425 587h6.5v6.5h-6.5zM425 599h6.5v6.5h-6.5z"/>
<path fill="#535353" d="M575 161h18.5v6.5h-18.5zM455 167h6.5v6.5h-6.5zM473 167h6.5v6.5h-6.5zM563 173h6.5v6.5h-6.5zM437 185h6.5v6.5h-6.5zM497 185h6.5v6.5h-6.5zM599 197h6.5v6.5h-6.5zM593 203h6.5v6.5h-6.5zM575 215h6.5v6.5h-6.5zM443 227h6.5v6.5h-6.5zM557 233h6.5v6.5h-6.5zM455 251h6.5v6.5h-6.5zM551 251h6.5v6.5h-6.5zM551 263h6.5v6.5h-6.5zM377 365h6.5v6.5h-6.5zM371 371h6.5v6.5h-6.5zM371 377h12.5v6.5h-12.5zM377 383h6.5v6.5h-6.5zM557 401h6.5v6.5h-6.5zM677 407h6.5v6.5h-6.5zM389 425h6.5v6.5h-6.5zM545 431h6.5v6.5h-6.5zM395 443h6.5v6.5h-6.5zM419 491h6.5v6.5h-6.5zM515 515h6.5v6.5h-6.5zM545 521h6.5v6.5h-6.5zM491 533h6.5v6.5h-6.5zM569 533h6.5v6.5h-6.5zM581 563h6.5v6.5h-6.5zM581 569h6.5v6.5h-6.5zM425 581h6.5v6.5h-6.5z"/>
<path fill="#545454" d="M461 167h12.5v6.5h-12.5zM569 167h6.5v6.5h-6.5zM593 167h6.5v6.5h-6.5zM557 185h6.5v6.5h-6.5zM599 185h6.5v6.5h-6.5zM545 191h6.5v6.5h-6.5zM599 191h6.5v6.5h-6.5zM581 209h6.5v6.5h-6.5zM449 233h6.5v6.5h-6.5zM551 245h6.5v6.5h-6.5zM551 257h6.5v6.5h-6.5zM551 269h6.5v6.5h-6.5zM587 341h6.5v6.5h-6.5zM377 371h6.5v6.5h-6.5zM581 377h6.5v6.5h-6.5zM371 383h6.5v6.5h-6.5zM569 395h6.5v6.5h-6.5zM671 395h6.5v6.5h-6.5zM395 461h6.5v6.5h-6.5zM425 461h6.5v6.5h-6.5zM419 467h6.5v6.5h-6.5zM389 473h6.5v6.5h-6.5zM359 485h6.5v6.5h-6.5zM425 503h6.5v6.5h-6.5zM503 521h6.5v6.5h-6.5zM437 527h6.5v6.5h-6.5zM437 539h6.5v6.5h-6.5zM491 539h6.5v6.5h-6.5zM491 569h6.5v6.5h-6.5zM425 575h6.5v6.5h-6.5zM491 575h6.5v6.5h-6.5zM491 581h6.5v6.5h-6.5zM371 605h6.5v6.5h-6.5zM425 605h6.5v6.5h-6.5zM371 611h6.5v6.5h-6.5z"/>
<path fill="#555555" d="M593 173h6.5v6.5h-6.5zM563 179h6.5v6.5h-6.5zM587 203h6.5v6.5h-6.5zM437 215h6.5v6.5h-6.5zM455 275h6.5v6.5h-6.5zM563 281h6.5v6.5h-6.5zM581 293h6.5v6.5h-6.5zM455 299h6.5v6.5h-6.5zM455 305h6.5v6.5h-6.5zM455 311h6.5v6.5h-6.5zM449 353h6.5v6.5h-6.5zM383 371h6.5v6.5h-6.5zM671 383h6.5v6.5h-6.5zM563 389h6.5v6.5h-6.5zM671 473h6.5v6.5h-6.5zM383 479h6.5v6.5h-6.5zM431 515h6.5v6.5h-6.5zM539 521h6.5v6.5h-6.5zM497 527h6.5v6.5h-6.5zM557 527h6.5v6.5h-6.5zM437 533h6.5v6.5h-6.5zM491 545h6.5v6.5h-6.5zM431 551h6.5v6.5h-6.5zM491 551h6.5v6.5h-6.5zM491 557h6.5v6.5h-6.5zM491 563h6.5v6.5h-6.5zM491 587h6.5v6.5h-6.5zM371 593h6.5v6.5h-6.5zM491 593h6.5v6.5h-6.5zM371 599h6.5v6.5h-6.5zM425 611h6.5v6.5h-6.5z"/>
<path fill="#565656" d="M575 167h6.5v6.5h-6.5zM587 167h6.5v6.5h-6.5zM479 173h6.5v6.5h-6.5zM443 179h6.5v6.5h-6.5zM437 191h6.5v6.5h-6.5zM509 191h6.5v6.5h-6.5zM551 191h6.5v6.5h-6.5zM593 197h6.5v6.5h-6.5zM569 215h6.5v6.5h-6.5zM563 221h6.5v6.5h-6.5zM455 281h6.5v6.5h-6.5zM557 281h6.5v6.5h-6.5zM455 293h6.5v6.5h-6.5zM425 365h6.5v6.5h-6.5zM389 371h6.5v6.5h-6.5zM581 371h6.5v6.5h-6.5zM383 377h6.5v6.5h-6.5zM563 383h6.5v6.5h-6.5zM671 389h6.5v6.5h-6.5zM383 407h6.5v6.5h-6.5zM395 437h6.5v6.5h-6.5zM395 467h6.5v6.5h-6.5zM509 467h6.5v6.5h-6.5zM413 479h6.5v6.5h-6.5zM365 485h6.5v6.5h-6.5zM419 497h6.5v6.5h-6.5zM509 521h6.5v6.5h-6.5zM353 557h6.5v6.5h-6.5zM359 563h6.5v6.5h-6.5zM425 569h6.5v6.5h-6.5zM371 587h6.5v6.5h-6.5zM491 599h6.5v6.5h-6.5z"/>
<path fill="#575757" d="M581 167h6.5v6.5h-6.5zM449 173h6.5v6.5h-6.5zM569 173h6.5v6.5h-6.5zM485 179h6.5v6.5h-6.5zM593 179h6.5v6.5h-6.5zM593 191h6.5v6.5h-6.5zM581 203h6.5v6.5h-6.5zM437 209h6.5v6.5h-6.5zM575 209h6.5v6.5h-6.5zM557 227h6.5v6.5h-6.5zM551 239h6.5v6.5h-6.5zM455 245h6.5v6.5h-6.5zM551 275h6.5v6.5h-6.5zM455 287h6.5v6.5h-6.5zM563 293h6.5v6.5h-6.5zM581 299h6.5v6.5h-6.5zM455 317h6.5v6.5h-6.5zM395 371h12.5v6.5h-12.5zM677 371h6.5v6.5h-6.5zM377 389h6.5v6.5h-6.5zM575 395h6.5v6.5h-6.5zM389 419h6.5v6.5h-6.5zM413 473h6.5v6.5h-6.5zM413 485h6.5v6.5h-6.5zM665 491h6.5v6.5h-6.5zM533 521h6.5v6.5h-6.5zM497 533h6.5v6.5h-6.5zM575 545h6.5v6.5h-6.5zM347 551h6.5v6.5h-6.5zM365 569h6.5v6.5h-6.5z"/>
<path fill="#585858" d="M587 173h6.5v6.5h-6.5zM563 185h6.5v6.5h-6.5zM593 185h6.5v6.5h-6.5zM557 191h6.5v6.5h-6.5zM437 197h6.5v6.5h-6.5zM587 197h6.5v6.5h-6.5zM437 203h6.5v6.5h-6.5zM563 287h6.5v6.5h-6.5zM569 293h6.5v6.5h-6.5zM587 335h6.5v6.5h-6.5zM581 365h6.5v6.5h-6.5zM407 371h6.5v6.5h-6.5zM563 377h6.5v6.5h-6.5zM383 383h6.5v6.5h-6.5zM557 395h6.5v6.5h-6.5zM377 401h6.5v6.5h-6.5zM551 413h6.5v6.5h-6.5zM443 455h12.5v6.5h-12.5zM419 461h6.5v6.5h-6.5zM371 485h6.5v6.5h-6.5zM425 509h6.5v6.5h-6.5zM665 515h6.5v6.5h-6.5zM431 521h6.5v6.5h-6.5zM515 521h18.5v6.5h-18.5zM503 527h6.5v6.5h-6.5zM551 527h6.5v6.5h-6.5zM671 533h6.5v6.5h-6.5zM431 545h6.5v6.5h-6.5zM425 563h6.5v6.5h-6.5zM371 581h6.5v6.5h-6.5zM491 605h6.5v6.5h-6.5z"/>
<path fill="#595959" d="M455 173h6.5v6.5h-6.5zM473 173h6.5v6.5h-6.5zM575 173h6.5v6.5h-6.5zM569 179h6.5v6.5h-6.5zM491 185h6.5v6.5h-6.5zM563 191h6.5v6.5h-6.5zM539 197h18.5v6.5h-18.5zM575 203h6.5v6.5h-6.5zM569 209h6.5v6.5h-6.5zM563 215h6.5v6.5h-6.5zM443 221h6.5v6.5h-6.5zM569 281h12.5v6.5h-12.5zM677 401h6.5v6.5h-6.5zM539 437h6.5v6.5h-6.5zM401 449h6.5v6.5h-6.5zM401 455h6.5v6.5h-6.5zM437 455h6.5v6.5h-6.5zM455 455h6.5v6.5h-6.5zM479 461h6.5v6.5h-6.5zM677 461h6.5v6.5h-6.5zM413 467h6.5v6.5h-6.5zM395 473h6.5v6.5h-6.5zM563 533h6.5v6.5h-6.5zM497 539h6.5v6.5h-6.5zM569 539h6.5v6.5h-6.5z"/>
<path fill="#5a5a5a" d="M461 173h12.5v6.5h-12.5zM581 173h6.5v6.5h-6.5zM587 179h6.5v6.5h-6.5zM443 185h6.5v6.5h-6.5zM569 185h6.5v6.5h-6.5zM587 185h6.5v6.5h-6.5zM587 191h6.5v6.5h-6.5zM533 197h6.5v6.5h-6.5zM557 197h6.5v6.5h-6.5zM581 197h6.5v6.5h-6.5zM569 203h6.5v6.5h-6.5zM563 209h6.5v6.5h-6.5zM557 221h6.5v6.5h-6.5zM551 233h6.5v6.5h-6.5zM581 305h6.5v6.5h-6.5zM455 323h6.5v6.5h-6.5zM389 377h6.5v6.5h-6.5zM371 389h6.5v6.5h-6.5zM389 413h6.5v6.5h-6.5zM545 425h6.5v6.5h-6.5zM395 431h6.5v6.5h-6.5zM431 455h6.5v6.5h-6.5zM401 461h6.5v6.5h-6.5zM389 479h6.5v6.5h-6.5zM377 485h6.5v6.5h-6.5zM413 491h6.5v6.5h-6.5zM431 539h6.5v6.5h-6.5zM497 545h6.5v6.5h-6.5zM419 593h6.5v6.5h-6.5zM419 599h6.5v6.5h-6.5z"/>
<path fill="#5b5b5b" d="M575 179h12.5v6.5h-12.5zM575 185h6.5v6.5h-6.5zM503 191h6.5v6.5h-6.5zM569 191h18.5v6.5h-18.5zM527 197h6.5v6.5h-6.5zM563 197h18.5v6.5h-18.5zM557 203h12.5v6.5h-12.5zM557 215h6.5v6.5h-6.5zM581 359h6.5v6.5h-6.5zM443 365h6.5v6.5h-6.5zM413 371h6.5v6.5h-6.5zM401 443h6.5v6.5h-6.5zM425 455h6.5v6.5h-6.5zM413 461h6.5v6.5h-6.5zM407 473h6.5v6.5h-6.5zM407 479h6.5v6.5h-6.5zM671 479h6.5v6.5h-6.5zM419 503h6.5v6.5h-6.5zM431 527h6.5v6.5h-6.5zM509 527h6.5v6.5h-6.5zM545 527h6.5v6.5h-6.5zM431 533h6.5v6.5h-6.5zM503 533h6.5v6.5h-6.5zM575 551h6.5v6.5h-6.5zM425 557h6.5v6.5h-6.5zM419 587h6.5v6.5h-6.5zM491 611h6.5v6.5h-6.5z"/>
<path fill="#5c5c5c" d="M449 179h6.5v6.5h-6.5zM581 185h6.5v6.5h-6.5zM551 203h6.5v6.5h-6.5zM557 209h6.5v6.5h-6.5zM449 227h6.5v6.5h-6.5zM551 227h6.5v6.5h-6.5zM455 239h6.5v6.5h-6.5zM461 263h6.5v6.5h-6.5zM551 281h6.5v6.5h-6.5zM557 287h6.5v6.5h-6.5zM569 287h6.5v6.5h-6.5zM395 377h6.5v6.5h-6.5zM557 389h6.5v6.5h-6.5zM371 401h6.5v6.5h-6.5zM533 443h6.5v6.5h-6.5zM461 455h6.5v6.5h-6.5zM407 461h6.5v6.5h-6.5zM401 467h12.5v6.5h-12.5zM401 473h6.5v6.5h-6.5zM665 497h6.5v6.5h-6.5zM665 509h6.5v6.5h-6.5zM425 515h6.5v6.5h-6.5zM497 551h6.5v6.5h-6.5zM371 575h6.5v6.5h-6.5zM419 581h6.5v6.5h-6.5zM419 605h6.5v6.5h-6.5z"/>
<path fill="#5d5d5d" d="M479 179h6.5v6.5h-6.5zM443 191h6.5v6.5h-6.5zM521 197h6.5v6.5h-6.5zM545 203h6.5v6.5h-6.5zM551 209h6.5v6.5h-6.5zM443 215h6.5v6.5h-6.5zM563 299h6.5v6.5h-6.5zM587 317h6.5v6.5h-6.5zM455 329h6.5v6.5h-6.5zM395 425h6.5v6.5h-6.5zM407 455h6.5v6.5h-6.5zM419 455h6.5v6.5h-6.5zM491 467h6.5v6.5h-6.5zM503 467h6.5v6.5h-6.5zM395 479h6.5v6.5h-6.5zM407 485h6.5v6.5h-6.5zM515 527h6.5v6.5h-6.5zM539 527h6.5v6.5h-6.5zM557 533h6.5v6.5h-6.5zM503 539h6.5v6.5h-6.5zM425 551h6.5v6.5h-6.5zM497 557h6.5v6.5h-6.5zM419 575h6.5v6.5h-6.5zM419 611h6.5v6.5h-6.5z"/>
<path fill="#5e5e5e" d="M539 203h6.5v6.5h-6.5zM551 215h6.5v6.5h-6.5zM551 221h6.5v6.5h-6.5zM461 257h6.5v6.5h-6.5zM461 269h6.5v6.5h-6.5zM575 293h6.5v6.5h-6.5zM569 299h6.5v6.5h-6.5zM455 335h6.5v6.5h-6.5zM581 353h6.5v6.5h-6.5zM431 365h6.5v6.5h-6.5zM401 377h6.5v6.5h-6.5zM569 377h6.5v6.5h-6.5zM677 377h6.5v6.5h-6.5zM389 383h6.5v6.5h-6.5zM383 389h6.5v6.5h-6.5zM569 389h6.5v6.5h-6.5zM377 395h6.5v6.5h-6.5zM383 401h6.5v6.5h-6.5zM551 407h6.5v6.5h-6.5zM401 437h6.5v6.5h-6.5zM413 455h6.5v6.5h-6.5zM677 467h6.5v6.5h-6.5zM401 479h6.5v6.5h-6.5zM383 485h6.5v6.5h-6.5zM353 491h6.5v6.5h-6.5zM413 497h6.5v6.5h-6.5zM521 527h6.5v6.5h-6.5zM533 527h6.5v6.5h-6.5zM509 533h6.5v6.5h-6.5zM563 539h6.5v6.5h-6.5zM569 545h6.5v6.5h-6.5zM575 557h6.5v6.5h-6.5zM497 563h6.5v6.5h-6.5zM377 611h6.5v6.5h-6.5z"/>
<path fill="#5f5f5f" d="M455 179h6.5v6.5h-6.5zM473 179h6.5v6.5h-6.5zM497 191h6.5v6.5h-6.5zM443 197h6.5v6.5h-6.5zM515 197h6.5v6.5h-6.5zM443 209h6.5v6.5h-6.5zM575 287h6.5v6.5h-6.5zM587 329h6.5v6.5h-6.5zM581 335h6.5v6.5h-6.5zM419 371h6.5v6.5h-6.5zM557 383h6.5v6.5h-6.5zM569 383h6.5v6.5h-6.5zM677 395h6.5v6.5h-6.5zM389 407h6.5v6.5h-6.5zM407 449h6.5v6.5h-6.5zM467 455h6.5v6.5h-6.5zM665 503h6.5v6.5h-6.5zM419 509h6.5v6.5h-6.5zM425 521h6.5v6.5h-6.5zM527 527h6.5v6.5h-6.5zM425 545h6.5v6.5h-6.5zM683 551h6.5v6.5h-6.5zM359 557h6.5v6.5h-6.5zM365 563h6.5v6.5h-6.5zM419 569h6.5v6.5h-6.5zM497 569h6.5v6.5h-6.5zM377 593h6.5v6.5h-6.5zM377 599h6.5v6.5h-6.5zM377 605h6.5v6.5h-6.5z"/>
<path fill="#606060" d="M461 179h12.5v6.5h-12.5zM449 185h6.5v6.5h-6.5zM485 185h6.5v6.5h-6.5zM443 203h6.5v6.5h-6.5zM533 203h6.5v6.5h-6.5zM545 209h6.5v6.5h-6.5zM545 245h6.5v6.5h-6.5zM455 341h6.5v6.5h-6.5zM563 371h6.5v6.5h-6.5zM407 377h6.5v6.5h-6.5zM527 449h6.5v6.5h-6.5zM497 467h6.5v6.5h-6.5zM389 485h6.5v6.5h-6.5zM401 485h6.5v6.5h-6.5zM407 491h6.5v6.5h-6.5zM551 533h6.5v6.5h-6.5zM347 545h6.5v6.5h-6.5zM503 545h6.5v6.5h-6.5zM353 551h6.5v6.5h-6.5zM377 587h6.5v6.5h-6.5z"/>
<path fill="#616161" d="M449 221h6.5v6.5h-6.5zM545 233h6.5v6.5h-6.5zM545 239h6.5v6.5h-6.5zM545 251h6.5v6.5h-6.5zM581 311h6.5v6.5h-6.5zM581 347h6.5v6.5h-6.5zM437 365h6.5v6.5h-6.5zM395 383h6.5v6.5h-6.5zM677 383h6.5v6.5h-6.5zM395 419h6.5v6.5h-6.5zM545 419h6.5v6.5h-6.5zM521 455h6.5v6.5h-6.5zM515 461h6.5v6.5h-6.5zM395 485h6.5v6.5h-6.5zM671 485h6.5v6.5h-6.5zM425 527h6.5v6.5h-6.5zM425 533h6.5v6.5h-6.5zM515 533h6.5v6.5h-6.5zM425 539h6.5v6.5h-6.5zM509 539h6.5v6.5h-6.5zM419 563h6.5v6.5h-6.5zM575 563h6.5v6.5h-6.5zM371 569h6.5v6.5h-6.5zM575 569h6.5v6.5h-6.5zM497 575h6.5v6.5h-6.5zM377 581h6.5v6.5h-6.5z"/>
<path fill="#626262" d="M509 197h6.5v6.5h-6.5zM527 203h6.5v6.5h-6.5zM539 209h6.5v6.5h-6.5zM545 215h6.5v6.5h-6.5zM545 221h6.5v6.5h-6.5zM545 227h6.5v6.5h-6.5zM455 233h6.5v6.5h-6.5zM545 263h6.5v6.5h-6.5zM545 269h6.5v6.5h-6.5zM461 275h6.5v6.5h-6.5zM575 299h6.5v6.5h-6.5zM581 329h6.5v6.5h-6.5zM581 341h6.5v6.5h-6.5zM449 359h6.5v6.5h-6.5zM575 389h6.5v6.5h-6.5zM677 389h6.5v6.5h-6.5zM371 395h6.5v6.5h-6.5zM401 431h6.5v6.5h-6.5zM539 431h6.5v6.5h-6.5zM407 443h6.5v6.5h-6.5zM413 449h6.5v6.5h-6.5zM485 461h6.5v6.5h-6.5zM359 491h6.5v6.5h-6.5zM545 533h6.5v6.5h-6.5zM557 539h6.5v6.5h-6.5zM503 551h6.5v6.5h-6.5zM569 551h6.5v6.5h-6.5zM575 575h6.5v6.5h-6.5zM575 581h6.5v6.5h-6.5zM413 587h6.5v6.5h-6.5zM575 587h6.5v6.5h-6.5zM413 593h6.5v6.5h-6.5zM413 599h6.5v6.5h-6.5z"/>
<path fill="#636363" d="M449 191h6.5v6.5h-6.5zM461 251h6.5v6.5h-6.5zM551 287h6.5v6.5h-6.5zM557 293h6.5v6.5h-6.5zM587 323h6.5v6.5h-6.5zM413 377h6.5v6.5h-6.5zM575 383h6.5v6.5h-6.5zM551 401h6.5v6.5h-6.5zM395 413h6.5v6.5h-6.5zM419 449h12.5v6.5h-12.5zM677 473h6.5v6.5h-6.5zM365 491h6.5v6.5h-6.5zM413 503h6.5v6.5h-6.5zM419 515h6.5v6.5h-6.5zM671 527h6.5v6.5h-6.5zM521 533h6.5v6.5h-6.5zM677 539h6.5v6.5h-6.5zM563 545h6.5v6.5h-6.5zM419 557h6.5v6.5h-6.5zM497 581h6.5v6.5h-6.5zM575 593h6.5v6.5h-6.5z"/>
<path fill="#646464" d="M455 185h6.5v6.5h-6.5zM479 185h6.5v6.5h-6.5zM491 191h6.5v6.5h-6.5zM449 215h6.5v6.5h-6.5zM545 257h6.5v6.5h-6.5zM545 275h6.5v6.5h-6.5zM569 371h6.5v6.5h-6.5zM557 377h6.5v6.5h-6.5zM575 377h6.5v6.5h-6.5zM401 383h6.5v6.5h-6.5zM389 389h6.5v6.5h-6.5zM383 395h6.5v6.5h-6.5zM389 401h6.5v6.5h-6.5zM431 449h12.5v6.5h-12.5zM473 455h6.5v6.5h-6.5zM371 491h6.5v6.5h-6.5zM401 491h6.5v6.5h-6.5zM407 497h6.5v6.5h-6.5zM539 533h6.5v6.5h-6.5zM377 575h6.5v6.5h-6.5zM413 581h6.5v6.5h-6.5zM575 599h6.5v6.5h-6.5zM413 605h6.5v6.5h-6.5z"/>
<path fill="#656565" d="M449 197h6.5v6.5h-6.5zM521 203h6.5v6.5h-6.5zM449 209h6.5v6.5h-6.5zM533 209h6.5v6.5h-6.5zM539 215h6.5v6.5h-6.5zM575 329h6.5v6.5h-6.5zM575 335h6.5v6.5h-6.5zM443 449h6.5v6.5h-6.5zM377 491h6.5v6.5h-6.5zM419 521h6.5v6.5h-6.5zM527 533h12.5v6.5h-12.5zM515 539h6.5v6.5h-6.5zM509 545h6.5v6.5h-6.5zM419 551h6.5v6.5h-6.5zM503 557h6.5v6.5h-6.5zM569 557h6.5v6.5h-6.5zM413 575h6.5v6.5h-6.5zM497 587h6.5v6.5h-6.5zM575 605h6.5v6.5h-6.5zM413 611h6.5v6.5h-6.5z"/>
<path fill="#666666" d="M461 185h18.5v6.5h-18.5zM503 197h6.5v6.5h-6.5zM449 203h6.5v6.5h-6.5zM461 281h6.5v6.5h-6.5zM545 281h6.5v6.5h-6.5zM575 305h6.5v6.5h-6.5zM455 347h6.5v6.5h-6.5zM575 371h6.5v6.5h-6.5zM407 383h6.5v6.5h-6.5zM395 389h6.5v6.5h-6.5zM395 407h6.5v6.5h-6.5zM407 437h6.5v6.5h-6.5zM449 449h6.5v6.5h-6.5zM383 491h6.5v6.5h-6.5zM395 491h6.5v6.5h-6.5zM551 539h6.5v6.5h-6.5zM419 545h6.5v6.5h-6.5zM575 611h6.5v6.5h-6.5z"/>
<path fill="#676767" d="M539 221h6.5v6.5h-6.5zM455 227h6.5v6.5h-6.5zM461 245h6.5v6.5h-6.5zM461 287h6.5v6.5h-6.5zM461 293h6.5v6.5h-6.5zM575 365h6.5v6.5h-6.5zM425 371h6.5v6.5h-6.5zM401 425h6.5v6.5h-6.5zM533 437h6.5v6.5h-6.5zM413 443h6.5v6.5h-6.5zM677 479h6.5v6.5h-6.5zM389 491h6.5v6.5h-6.5zM671 491h6.5v6.5h-6.5zM353 497h6.5v6.5h-6.5zM413 509h6.5v6.5h-6.5zM419 527h6.5v6.5h-6.5zM419 533h6.5v6.5h-6.5zM419 539h6.5v6.5h-6.5zM557 545h6.5v6.5h-6.5zM563 551h6.5v6.5h-6.5zM371 563h6.5v6.5h-6.5zM503 563h6.5v6.5h-6.5zM569 563h6.5v6.5h-6.5zM413 569h6.5v6.5h-6.5zM383 587h6.5v6.5h-6.5zM383 593h6.5v6.5h-6.5zM497 593h6.5v6.5h-6.5zM383 599h6.5v6.5h-6.5zM383 605h6.5v6.5h-6.5zM383 611h6.5v6.5h-6.5z"/>
<path fill="#686868" d="M455 191h6.5v6.5h-6.5zM485 191h6.5v6.5h-6.5zM515 203h6.5v6.5h-6.5zM527 209h6.5v6.5h-6.5zM539 227h6.5v6.5h-6.5zM467 263h6.5v6.5h-6.5zM461 299h6.5v6.5h-6.5zM569 305h6.5v6.5h-6.5zM575 341h6.5v6.5h-6.5zM401 389h6.5v6.5h-6.5zM389 395h6.5v6.5h-6.5zM551 395h6.5v6.5h-6.5zM395 401h6.5v6.5h-6.5zM545 413h6.5v6.5h-6.5zM347 539h6.5v6.5h-6.5zM521 539h6.5v6.5h-6.5zM545 539h6.5v6.5h-6.5zM359 551h6.5v6.5h-6.5zM509 551h6.5v6.5h-6.5zM365 557h6.5v6.5h-6.5zM413 563h6.5v6.5h-6.5zM383 581h6.5v6.5h-6.5z"/>
<path fill="#696969" d="M497 197h6.5v6.5h-6.5zM533 215h6.5v6.5h-6.5zM539 233h6.5v6.5h-6.5zM461 305h6.5v6.5h-6.5zM581 317h6.5v6.5h-6.5zM575 323h12.5v6.5h-12.5zM557 371h6.5v6.5h-6.5zM419 377h6.5v6.5h-6.5zM395 395h6.5v6.5h-6.5zM455 449h6.5v6.5h-6.5zM401 497h6.5v6.5h-6.5zM407 503h6.5v6.5h-6.5zM539 539h6.5v6.5h-6.5zM353 545h6.5v6.5h-6.5zM515 545h6.5v6.5h-6.5zM563 557h6.5v6.5h-6.5zM377 569h6.5v6.5h-6.5zM569 569h6.5v6.5h-6.5zM407 587h6.5v6.5h-6.5zM407 593h6.5v6.5h-6.5zM407 599h6.5v6.5h-6.5zM497 599h6.5v6.5h-6.5z"/>
<path fill="#6a6a6a" d="M461 191h6.5v6.5h-6.5zM455 197h6.5v6.5h-6.5zM455 221h6.5v6.5h-6.5zM539 239h6.5v6.5h-6.5zM467 269h6.5v6.5h-6.5zM563 305h6.5v6.5h-6.5zM461 311h6.5v6.5h-6.5zM575 359h6.5v6.5h-6.5zM563 365h12.5v6.5h-12.5zM443 371h6.5v6.5h-6.5zM401 419h6.5v6.5h-6.5zM539 425h6.5v6.5h-6.5zM407 431h6.5v6.5h-6.5zM419 443h6.5v6.5h-6.5zM479 455h6.5v6.5h-6.5zM413 515h6.5v6.5h-6.5zM527 539h12.5v6.5h-12.5zM551 545h6.5v6.5h-6.5zM557 551h6.5v6.5h-6.5zM413 557h6.5v6.5h-6.5zM503 569h6.5v6.5h-6.5zM407 581h6.5v6.5h-6.5zM407 605h6.5v6.5h-6.5zM407 611h6.5v6.5h-6.5z"/>
<path fill="#6b6b6b" d="M479 191h6.5v6.5h-6.5zM455 203h6.5v6.5h-6.5zM509 203h6.5v6.5h-6.5zM455 209h6.5v6.5h-6.5zM521 209h6.5v6.5h-6.5zM455 215h6.5v6.5h-6.5zM461 239h6.5v6.5h-6.5zM539 245h6.5v6.5h-6.5zM467 257h6.5v6.5h-6.5zM575 311h6.5v6.5h-6.5zM575 347h6.5v6.5h-6.5zM413 383h6.5v6.5h-6.5zM401 395h6.5v6.5h-6.5zM527 443h6.5v6.5h-6.5zM395 497h6.5v6.5h-6.5zM671 521h6.5v6.5h-6.5zM683 545h6.5v6.5h-6.5zM413 551h6.5v6.5h-6.5zM383 575h6.5v6.5h-6.5zM569 575h6.5v6.5h-6.5zM389 611h6.5v6.5h-6.5z"/>
<path fill="#6c6c6c" d="M467 191h12.5v6.5h-12.5zM491 197h6.5v6.5h-6.5zM527 215h6.5v6.5h-6.5zM533 221h6.5v6.5h-6.5zM545 287h6.5v6.5h-6.5zM557 299h6.5v6.5h-6.5zM461 317h6.5v6.5h-6.5zM575 353h6.5v6.5h-6.5zM407 389h6.5v6.5h-6.5zM401 401h6.5v6.5h-6.5zM401 407h6.5v6.5h-6.5zM401 413h6.5v6.5h-6.5zM413 437h6.5v6.5h-6.5zM425 443h6.5v6.5h-6.5zM461 449h6.5v6.5h-6.5zM491 461h6.5v6.5h-6.5zM509 461h6.5v6.5h-6.5zM677 485h6.5v6.5h-6.5zM359 497h6.5v6.5h-6.5zM389 497h6.5v6.5h-6.5zM413 521h6.5v6.5h-6.5zM413 527h6.5v6.5h-6.5zM413 539h6.5v6.5h-6.5zM413 545h6.5v6.5h-6.5zM521 545h6.5v6.5h-6.5zM509 557h6.5v6.5h-6.5zM563 563h6.5v6.5h-6.5zM407 575h6.5v6.5h-6.5zM389 587h6.5v6.5h-6.5zM389 593h6.5v6.5h-6.5zM389 599h6.5v6.5h-6.5zM389 605h6.5v6.5h-6.5zM497 605h6.5v6.5h-6.5z"/>
<path fill="#6d6d6d" d="M503 203h6.5v6.5h-6.5zM539 251h6.5v6.5h-6.5zM551 293h6.5v6.5h-6.5zM575 317h6.5v6.5h-6.5zM569 329h6.5v6.5h-6.5zM569 335h6.5v6.5h-6.5zM551 389h6.5v6.5h-6.5zM431 443h6.5v6.5h-6.5zM371 497h18.5v6.5h-18.5zM353 503h6.5v6.5h-6.5zM401 503h6.5v6.5h-6.5zM407 509h6.5v6.5h-6.5zM413 533h6.5v6.5h-6.5zM545 545h6.5v6.5h-6.5zM515 551h6.5v6.5h-6.5zM407 569h6.5v6.5h-6.5zM503 575h6.5v6.5h-6.5zM569 581h6.5v6.5h-6.5zM401 593h6.5v6.5h-6.5zM401 599h6.5v6.5h-6.5zM395 611h12.5v6.5h-12.5z"/>
<path fill="#6e6e6e" d="M461 197h6.5v6.5h-6.5zM533 227h6.5v6.5h-6.5zM545 407h6.5v6.5h-6.5zM407 425h6.5v6.5h-6.5zM521 449h6.5v6.5h-6.5zM683 473h6.5v6.5h-6.5zM365 497h6.5v6.5h-6.5zM671 497h6.5v6.5h-6.5zM347 533h6.5v6.5h-6.5zM527 545h6.5v6.5h-6.5zM539 545h6.5v6.5h-6.5zM551 551h6.5v6.5h-6.5zM371 557h6.5v6.5h-6.5zM557 557h6.5v6.5h-6.5zM377 563h6.5v6.5h-6.5zM407 563h6.5v6.5h-6.5zM383 569h6.5v6.5h-6.5zM389 581h6.5v6.5h-6.5zM401 587h6.5v6.5h-6.5zM395 593h6.5v6.5h-6.5zM395 599h6.5v6.5h-6.5zM395 605h12.5v6.5h-12.5z"/>
<path fill="#6f6f6f" d="M485 197h6.5v6.5h-6.5zM461 203h6.5v6.5h-6.5zM497 203h6.5v6.5h-6.5zM515 209h6.5v6.5h-6.5zM461 233h6.5v6.5h-6.5zM467 251h6.5v6.5h-6.5zM539 257h6.5v6.5h-6.5zM467 275h6.5v6.5h-6.5zM569 311h6.5v6.5h-6.5zM461 323h6.5v6.5h-6.5zM569 323h6.5v6.5h-6.5zM407 395h6.5v6.5h-6.5zM533 431h6.5v6.5h-6.5zM437 443h6.5v6.5h-6.5zM467 449h6.5v6.5h-6.5zM395 503h6.5v6.5h-6.5zM407 515h6.5v6.5h-6.5zM533 545h6.5v6.5h-6.5zM365 551h6.5v6.5h-6.5zM407 557h6.5v6.5h-6.5zM563 569h6.5v6.5h-6.5zM401 581h6.5v6.5h-6.5zM395 587h6.5v6.5h-6.5z"/>
<path fill="#707070" d="M467 197h6.5v6.5h-6.5zM521 215h6.5v6.5h-6.5zM527 221h6.5v6.5h-6.5zM533 233h6.5v6.5h-6.5zM569 341h6.5v6.5h-6.5zM569 359h6.5v6.5h-6.5zM413 431h6.5v6.5h-6.5zM419 437h6.5v6.5h-6.5zM485 455h6.5v6.5h-6.5zM515 455h6.5v6.5h-6.5zM389 503h6.5v6.5h-6.5zM353 539h6.5v6.5h-6.5zM359 545h6.5v6.5h-6.5zM407 545h6.5v6.5h-6.5zM407 551h6.5v6.5h-6.5zM509 563h6.5v6.5h-6.5zM389 575h6.5v6.5h-6.5zM569 587h6.5v6.5h-6.5zM497 611h6.5v6.5h-6.5z"/>
<path fill="#717171" d="M473 197h12.5v6.5h-12.5zM461 209h6.5v6.5h-6.5zM509 209h6.5v6.5h-6.5zM461 215h6.5v6.5h-6.5zM461 227h6.5v6.5h-6.5zM539 263h6.5v6.5h-6.5zM569 317h6.5v6.5h-6.5zM557 365h6.5v6.5h-6.5zM425 377h6.5v6.5h-6.5zM437 377h6.5v6.5h-6.5zM407 419h6.5v6.5h-6.5zM539 419h6.5v6.5h-6.5zM443 443h6.5v6.5h-6.5zM497 461h12.5v6.5h-12.5zM383 503h6.5v6.5h-6.5zM401 509h6.5v6.5h-6.5zM407 521h6.5v6.5h-6.5zM407 527h6.5v6.5h-6.5zM407 533h6.5v6.5h-6.5zM407 539h6.5v6.5h-6.5zM521 551h6.5v6.5h-6.5zM545 551h6.5v6.5h-6.5zM401 575h6.5v6.5h-6.5zM395 581h6.5v6.5h-6.5zM503 581h6.5v6.5h-6.5z"/>
<path fill="#727272" d="M491 203h6.5v6.5h-6.5zM461 221h6.5v6.5h-6.5zM533 239h6.5v6.5h-6.5zM461 329h6.5v6.5h-6.5zM449 365h6.5v6.5h-6.5zM419 383h6.5v6.5h-6.5zM551 383h6.5v6.5h-6.5zM413 389h6.5v6.5h-6.5zM407 401h6.5v6.5h-6.5zM527 437h6.5v6.5h-6.5zM473 449h6.5v6.5h-6.5zM683 479h6.5v6.5h-6.5zM359 503h6.5v6.5h-6.5zM377 503h6.5v6.5h-6.5zM671 503h6.5v6.5h-6.5zM353 509h6.5v6.5h-6.5zM671 515h6.5v6.5h-6.5zM347 527h6.5v6.5h-6.5zM377 557h6.5v6.5h-6.5zM515 557h6.5v6.5h-6.5zM551 557h6.5v6.5h-6.5zM383 563h6.5v6.5h-6.5zM401 563h6.5v6.5h-6.5zM557 563h6.5v6.5h-6.5zM389 569h6.5v6.5h-6.5zM401 569h6.5v6.5h-6.5zM395 575h6.5v6.5h-6.5z"/>
<path fill="#737373" d="M467 203h6.5v6.5h-6.5zM503 209h6.5v6.5h-6.5zM467 245h6.5v6.5h-6.5zM539 269h6.5v6.5h-6.5zM563 311h6.5v6.5h-6.5zM569 347h6.5v6.5h-6.5zM455 353h6.5v6.5h-6.5zM569 353h6.5v6.5h-6.5zM563 359h6.5v6.5h-6.5zM437 371h6.5v6.5h-6.5zM407 407h6.5v6.5h-6.5zM407 413h6.5v6.5h-6.5zM425 437h6.5v6.5h-6.5zM449 443h6.5v6.5h-6.5zM395 509h6.5v6.5h-6.5zM401 515h6.5v6.5h-6.5zM347 521h6.5v6.5h-6.5zM401 551h6.5v6.5h-6.5zM527 551h6.5v6.5h-6.5zM539 551h6.5v6.5h-6.5zM401 557h6.5v6.5h-6.5zM395 569h6.5v6.5h-6.5zM563 575h6.5v6.5h-6.5zM569 593h6.5v6.5h-6.5z"/>
<path fill="#747474" d="M485 203h6.5v6.5h-6.5zM497 209h6.5v6.5h-6.5zM515 215h6.5v6.5h-6.5zM527 227h6.5v6.5h-6.5zM533 245h6.5v6.5h-6.5zM473 263h6.5v6.5h-6.5zM467 281h6.5v6.5h-6.5zM557 305h6.5v6.5h-6.5zM431 371h6.5v6.5h-6.5zM431 377h6.5v6.5h-6.5zM545 401h6.5v6.5h-6.5zM677 491h6.5v6.5h-6.5zM365 503h12.5v6.5h-12.5zM389 509h6.5v6.5h-6.5zM671 509h6.5v6.5h-6.5zM401 539h6.5v6.5h-6.5zM401 545h6.5v6.5h-6.5zM371 551h6.5v6.5h-6.5zM533 551h6.5v6.5h-6.5zM389 563h12.5v6.5h-12.5zM509 569h6.5v6.5h-6.5zM503 587h6.5v6.5h-6.5z"/>
<path fill="#757575" d="M473 203h12.5v6.5h-12.5zM467 209h6.5v6.5h-6.5zM521 221h6.5v6.5h-6.5zM467 239h6.5v6.5h-6.5zM473 269h6.5v6.5h-6.5zM539 275h6.5v6.5h-6.5zM539 281h6.5v6.5h-6.5zM461 335h6.5v6.5h-6.5zM443 377h6.5v6.5h-6.5zM413 425h6.5v6.5h-6.5zM521 443h6.5v6.5h-6.5zM401 521h6.5v6.5h-6.5zM401 527h6.5v6.5h-6.5zM401 533h6.5v6.5h-6.5zM383 557h6.5v6.5h-6.5zM395 557h6.5v6.5h-6.5z"/>
<path fill="#767676" d="M491 209h6.5v6.5h-6.5zM467 215h6.5v6.5h-6.5zM527 233h6.5v6.5h-6.5zM473 257h6.5v6.5h-6.5zM545 293h6.5v6.5h-6.5zM551 377h6.5v6.5h-6.5zM533 425h6.5v6.5h-6.5zM419 431h6.5v6.5h-6.5zM431 437h6.5v6.5h-6.5zM455 443h6.5v6.5h-6.5zM479 449h6.5v6.5h-6.5zM491 455h6.5v6.5h-6.5zM383 509h6.5v6.5h-6.5zM395 515h6.5v6.5h-6.5zM365 545h6.5v6.5h-6.5zM395 545h6.5v6.5h-6.5zM377 551h6.5v6.5h-6.5zM395 551h6.5v6.5h-6.5zM389 557h6.5v6.5h-6.5zM521 557h6.5v6.5h-6.5zM545 557h6.5v6.5h-6.5zM557 569h6.5v6.5h-6.5zM569 599h6.5v6.5h-6.5z"/>
<path fill="#777777" d="M473 209h6.5v6.5h-6.5zM509 215h6.5v6.5h-6.5zM467 233h6.5v6.5h-6.5zM533 251h6.5v6.5h-6.5zM467 287h6.5v6.5h-6.5zM563 317h6.5v6.5h-6.5zM413 395h6.5v6.5h-6.5zM539 413h6.5v6.5h-6.5zM515 449h6.5v6.5h-6.5zM359 509h6.5v6.5h-6.5zM353 533h6.5v6.5h-6.5zM359 539h6.5v6.5h-6.5zM395 539h6.5v6.5h-6.5zM383 551h12.5v6.5h-12.5zM515 563h6.5v6.5h-6.5zM551 563h6.5v6.5h-6.5zM563 581h6.5v6.5h-6.5z"/>
<path fill="#787878" d="M479 209h12.5v6.5h-12.5zM467 221h6.5v6.5h-6.5zM467 227h6.5v6.5h-6.5zM473 251h6.5v6.5h-6.5zM551 299h6.5v6.5h-6.5zM563 323h6.5v6.5h-6.5zM563 329h6.5v6.5h-6.5zM563 353h6.5v6.5h-6.5zM413 419h6.5v6.5h-6.5zM527 431h6.5v6.5h-6.5zM509 455h6.5v6.5h-6.5zM683 485h6.5v6.5h-6.5zM377 509h6.5v6.5h-6.5zM353 515h6.5v6.5h-6.5zM395 521h6.5v6.5h-6.5zM395 533h6.5v6.5h-6.5zM389 545h6.5v6.5h-6.5zM539 557h6.5v6.5h-6.5zM503 593h6.5v6.5h-6.5z"/>
<path fill="#797979" d="M503 215h6.5v6.5h-6.5zM521 227h6.5v6.5h-6.5zM527 239h6.5v6.5h-6.5zM473 275h6.5v6.5h-6.5zM539 287h6.5v6.5h-6.5zM467 293h6.5v6.5h-6.5zM563 335h6.5v6.5h-6.5zM461 341h6.5v6.5h-6.5zM413 401h6.5v6.5h-6.5zM437 437h6.5v6.5h-6.5zM461 443h6.5v6.5h-6.5zM485 449h6.5v6.5h-6.5zM389 515h6.5v6.5h-6.5zM395 527h6.5v6.5h-6.5zM389 539h6.5v6.5h-6.5zM371 545h6.5v6.5h-6.5zM527 557h12.5v6.5h-12.5zM509 575h6.5v6.5h-6.5zM569 605h6.5v6.5h-6.5z"/>
<path fill="#7a7a7a" d="M473 215h6.5v6.5h-6.5zM497 215h6.5v6.5h-6.5zM515 221h6.5v6.5h-6.5zM473 245h6.5v6.5h-6.5zM533 257h6.5v6.5h-6.5zM563 341h6.5v6.5h-6.5zM563 347h6.5v6.5h-6.5zM557 359h6.5v6.5h-6.5zM551 371h6.5v6.5h-6.5zM431 383h6.5v6.5h-6.5zM545 395h6.5v6.5h-6.5zM413 407h6.5v6.5h-6.5zM413 413h6.5v6.5h-6.5zM425 431h6.5v6.5h-6.5zM521 437h6.5v6.5h-6.5zM365 509h12.5v6.5h-12.5zM677 533h6.5v6.5h-6.5zM377 545h12.5v6.5h-12.5z"/>
<path fill="#7b7b7b" d="M479 215h6.5v6.5h-6.5zM491 215h6.5v6.5h-6.5zM473 221h6.5v6.5h-6.5zM467 299h6.5v6.5h-6.5zM425 383h6.5v6.5h-6.5zM437 383h6.5v6.5h-6.5zM419 389h6.5v6.5h-6.5zM419 425h6.5v6.5h-6.5zM443 437h6.5v6.5h-6.5zM467 443h6.5v6.5h-6.5zM515 443h6.5v6.5h-6.5zM497 455h12.5v6.5h-12.5zM677 497h6.5v6.5h-6.5zM383 515h6.5v6.5h-6.5zM353 521h6.5v6.5h-6.5zM353 527h6.5v6.5h-6.5zM389 533h6.5v6.5h-6.5zM557 575h6.5v6.5h-6.5zM563 587h6.5v6.5h-6.5zM503 599h6.5v6.5h-6.5zM569 611h6.5v6.5h-6.5z"/>
<path fill="#7c7c7c" d="M485 215h6.5v6.5h-6.5zM473 227h6.5v6.5h-6.5zM473 233h6.5v6.5h-6.5zM473 239h6.5v6.5h-6.5zM557 311h6.5v6.5h-6.5zM491 449h6.5v6.5h-6.5zM389 521h6.5v6.5h-6.5zM365 539h6.5v6.5h-6.5zM383 539h6.5v6.5h-6.5zM545 563h6.5v6.5h-6.5z"/>
<path fill="#7d7d7d" d="M509 221h6.5v6.5h-6.5zM521 233h6.5v6.5h-6.5zM527 245h6.5v6.5h-6.5zM467 305h6.5v6.5h-6.5zM533 419h6.5v6.5h-6.5zM473 443h6.5v6.5h-6.5zM509 449h6.5v6.5h-6.5zM359 515h6.5v6.5h-6.5zM389 527h6.5v6.5h-6.5zM359 533h6.5v6.5h-6.5zM521 563h6.5v6.5h-6.5zM515 569h6.5v6.5h-6.5zM551 569h6.5v6.5h-6.5z"/>
<path fill="#7e7e7e" d="M479 221h6.5v6.5h-6.5zM515 227h6.5v6.5h-6.5zM533 263h6.5v6.5h-6.5zM539 407h6.5v6.5h-6.5zM527 425h6.5v6.5h-6.5zM431 431h6.5v6.5h-6.5zM449 437h6.5v6.5h-6.5zM515 437h6.5v6.5h-6.5zM497 449h6.5v6.5h-6.5zM377 515h6.5v6.5h-6.5zM371 539h12.5v6.5h-12.5zM683 539h6.5v6.5h-6.5z"/>
<path fill="#7f7f7f" d="M485 221h6.5v6.5h-6.5zM503 221h6.5v6.5h-6.5zM479 227h6.5v6.5h-6.5zM449 371h6.5v6.5h-6.5zM545 389h6.5v6.5h-6.5zM419 395h6.5v6.5h-6.5zM419 419h6.5v6.5h-6.5zM521 431h6.5v6.5h-6.5zM479 443h6.5v6.5h-6.5zM509 443h6.5v6.5h-6.5zM503 449h6.5v6.5h-6.5zM683 491h6.5v6.5h-6.5zM383 533h6.5v6.5h-6.5zM539 563h6.5v6.5h-6.5zM509 581h6.5v6.5h-6.5zM563 593h6.5v6.5h-6.5z"/>
<path fill="#808080" d="M491 221h12.5v6.5h-12.5zM479 233h6.5v6.5h-6.5zM479 239h6.5v6.5h-6.5zM521 239h6.5v6.5h-6.5zM479 245h6.5v6.5h-6.5zM479 251h6.5v6.5h-6.5zM479 257h6.5v6.5h-6.5zM479 263h6.5v6.5h-6.5zM473 281h6.5v6.5h-6.5zM539 293h6.5v6.5h-6.5zM545 299h6.5v6.5h-6.5zM551 305h6.5v6.5h-6.5zM467 311h6.5v6.5h-6.5zM551 365h6.5v6.5h-6.5zM419 401h6.5v6.5h-6.5zM419 413h6.5v6.5h-6.5zM425 425h6.5v6.5h-6.5zM485 443h24.5v6.5h-24.5zM365 515h12.5v6.5h-12.5zM383 521h6.5v6.5h-6.5zM527 563h12.5v6.5h-12.5zM503 605h6.5v6.5h-6.5z"/>
<path fill="#818181" d="M485 227h6.5v6.5h-6.5zM527 251h6.5v6.5h-6.5zM557 317h6.5v6.5h-6.5zM461 347h6.5v6.5h-6.5zM557 353h6.5v6.5h-6.5zM419 407h6.5v6.5h-6.5zM437 431h6.5v6.5h-6.5zM455 437h6.5v6.5h-6.5zM509 437h6.5v6.5h-6.5zM677 503h6.5v6.5h-6.5zM359 521h6.5v6.5h-6.5zM359 527h6.5v6.5h-6.5zM383 527h6.5v6.5h-6.5zM365 533h6.5v6.5h-6.5zM377 533h6.5v6.5h-6.5zM557 581h6.5v6.5h-6.5z"/>
<path fill="#828282" d="M509 227h6.5v6.5h-6.5zM515 233h6.5v6.5h-6.5zM479 269h6.5v6.5h-6.5zM533 269h6.5v6.5h-6.5zM467 317h6.5v6.5h-6.5zM425 389h6.5v6.5h-6.5zM371 533h6.5v6.5h-6.5zM563 599h6.5v6.5h-6.5z"/>
<path fill="#838383" d="M491 227h6.5v6.5h-6.5zM485 233h6.5v6.5h-6.5zM443 383h6.5v6.5h-6.5zM515 431h6.5v6.5h-6.5zM503 437h6.5v6.5h-6.5zM377 521h6.5v6.5h-6.5zM377 527h6.5v6.5h-6.5z"/>
<path fill="#848484" d="M497 227h12.5v6.5h-12.5zM557 323h6.5v6.5h-6.5zM545 383h6.5v6.5h-6.5zM431 389h6.5v6.5h-6.5zM539 401h6.5v6.5h-6.5zM533 413h6.5v6.5h-6.5zM425 419h6.5v6.5h-6.5zM443 431h6.5v6.5h-6.5zM461 437h6.5v6.5h-6.5zM365 521h12.5v6.5h-12.5zM365 527h6.5v6.5h-6.5zM677 527h6.5v6.5h-6.5zM545 569h6.5v6.5h-6.5zM551 575h6.5v6.5h-6.5zM509 587h6.5v6.5h-6.5z"/>
<path fill="#858585" d="M485 239h6.5v6.5h-6.5zM521 245h6.5v6.5h-6.5zM527 257h6.5v6.5h-6.5zM479 275h6.5v6.5h-6.5zM533 275h6.5v6.5h-6.5zM533 281h6.5v6.5h-6.5zM467 323h6.5v6.5h-6.5zM557 347h6.5v6.5h-6.5zM455 359h6.5v6.5h-6.5zM431 425h6.5v6.5h-6.5zM521 425h6.5v6.5h-6.5zM497 437h6.5v6.5h-6.5zM371 527h6.5v6.5h-6.5zM521 569h6.5v6.5h-6.5zM515 575h6.5v6.5h-6.5zM503 611h6.5v6.5h-6.5z"/>
<path fill="#868686" d="M491 233h6.5v6.5h-6.5zM509 233h6.5v6.5h-6.5zM485 245h6.5v6.5h-6.5zM473 287h6.5v6.5h-6.5zM557 329h6.5v6.5h-6.5zM557 335h6.5v6.5h-6.5zM557 341h6.5v6.5h-6.5zM437 389h6.5v6.5h-6.5zM425 395h6.5v6.5h-6.5zM425 413h6.5v6.5h-6.5zM527 419h6.5v6.5h-6.5zM467 437h6.5v6.5h-6.5zM683 497h6.5v6.5h-6.5zM677 521h6.5v6.5h-6.5zM557 587h6.5v6.5h-6.5zM563 605h6.5v6.5h-6.5z"/>
<path fill="#878787" d="M515 239h6.5v6.5h-6.5zM533 287h6.5v6.5h-6.5zM551 311h6.5v6.5h-6.5zM551 359h6.5v6.5h-6.5zM425 401h6.5v6.5h-6.5zM425 407h6.5v6.5h-6.5zM449 431h6.5v6.5h-6.5zM509 431h6.5v6.5h-6.5zM473 437h6.5v6.5h-6.5zM491 437h6.5v6.5h-6.5zM677 509h6.5v6.5h-6.5z"/>
<path fill="#888888" d="M497 233h12.5v6.5h-12.5zM485 251h6.5v6.5h-6.5zM545 377h6.5v6.5h-6.5zM437 425h6.5v6.5h-6.5zM479 437h12.5v6.5h-12.5zM539 569h6.5v6.5h-6.5zM509 593h6.5v6.5h-6.5z"/>
<path fill="#898989" d="M491 239h6.5v6.5h-6.5zM527 263h6.5v6.5h-6.5zM467 329h6.5v6.5h-6.5zM431 419h6.5v6.5h-6.5zM527 569h6.5v6.5h-6.5z"/>
<path fill="#8a8a8a" d="M521 251h6.5v6.5h-6.5zM539 299h6.5v6.5h-6.5zM545 305h6.5v6.5h-6.5zM449 377h6.5v6.5h-6.5zM431 395h6.5v6.5h-6.5zM539 395h6.5v6.5h-6.5zM455 431h6.5v6.5h-6.5zM503 431h6.5v6.5h-6.5zM677 515h6.5v6.5h-6.5zM533 569h6.5v6.5h-6.5zM557 593h6.5v6.5h-6.5zM563 611h6.5v6.5h-6.5z"/>
<path fill="#8b8b8b" d="M497 239h6.5v6.5h-6.5zM509 239h6.5v6.5h-6.5zM485 257h6.5v6.5h-6.5zM473 293h6.5v6.5h-6.5zM533 407h6.5v6.5h-6.5z"/>
<path fill="#8c8c8c" d="M503 239h6.5v6.5h-6.5zM491 245h6.5v6.5h-6.5zM515 245h6.5v6.5h-6.5zM533 293h6.5v6.5h-6.5zM545 371h6.5v6.5h-6.5zM431 413h6.5v6.5h-6.5zM443 425h6.5v6.5h-6.5zM515 425h6.5v6.5h-6.5zM545 575h6.5v6.5h-6.5zM551 581h6.5v6.5h-6.5z"/>
<path fill="#8d8d8d" d="M479 281h6.5v6.5h-6.5zM467 335h6.5v6.5h-6.5zM461 353h6.5v6.5h-6.5zM551 353h6.5v6.5h-6.5zM431 401h6.5v6.5h-6.5zM431 407h6.5v6.5h-6.5zM437 419h6.5v6.5h-6.5zM461 431h6.5v6.5h-6.5zM509 599h6.5v6.5h-6.5z"/>
<path fill="#8e8e8e" d="M527 269h6.5v6.5h-6.5zM551 317h6.5v6.5h-6.5zM443 389h6.5v6.5h-6.5zM437 395h6.5v6.5h-6.5zM527 413h6.5v6.5h-6.5zM521 419h6.5v6.5h-6.5zM497 431h6.5v6.5h-6.5zM683 503h6.5v6.5h-6.5zM557 599h6.5v6.5h-6.5z"/>
<path fill="#8f8f8f" d="M521 257h6.5v6.5h-6.5zM485 263h6.5v6.5h-6.5zM473 299h6.5v6.5h-6.5zM539 389h6.5v6.5h-6.5zM449 425h6.5v6.5h-6.5zM515 581h6.5v6.5h-6.5z"/>
<path fill="#909090" d="M497 245h6.5v6.5h-6.5zM509 245h6.5v6.5h-6.5zM491 251h6.5v6.5h-6.5zM467 431h6.5v6.5h-6.5zM491 431h6.5v6.5h-6.5zM521 575h6.5v6.5h-6.5z"/>
<path fill="#919191" d="M527 275h6.5v6.5h-6.5zM545 365h6.5v6.5h-6.5zM437 413h6.5v6.5h-6.5zM443 419h6.5v6.5h-6.5zM509 425h6.5v6.5h-6.5zM473 431h18.5v6.5h-18.5z"/>
<path fill="#929292" d="M503 245h6.5v6.5h-6.5zM515 251h6.5v6.5h-6.5zM473 305h6.5v6.5h-6.5zM551 323h6.5v6.5h-6.5zM467 341h6.5v6.5h-6.5zM551 347h6.5v6.5h-6.5zM437 401h6.5v6.5h-6.5zM533 401h6.5v6.5h-6.5zM437 407h6.5v6.5h-6.5zM455 425h6.5v6.5h-6.5zM539 575h6.5v6.5h-6.5zM551 587h6.5v6.5h-6.5z"/>
<path fill="#939393" d="M485 269h6.5v6.5h-6.5zM527 281h6.5v6.5h-6.5zM539 383h6.5v6.5h-6.5zM509 605h6.5v6.5h-6.5z"/>
<path fill="#949494" d="M521 263h6.5v6.5h-6.5zM545 311h6.5v6.5h-6.5zM449 383h6.5v6.5h-6.5zM683 533h6.5v6.5h-6.5zM527 575h6.5v6.5h-6.5zM515 587h6.5v6.5h-6.5zM557 605h6.5v6.5h-6.5z"/>
<path fill="#959595" d="M497 251h6.5v6.5h-6.5zM491 257h6.5v6.5h-6.5zM479 287h6.5v6.5h-6.5zM527 287h6.5v6.5h-6.5zM473 311h6.5v6.5h-6.5zM551 329h6.5v6.5h-6.5zM551 341h6.5v6.5h-6.5zM443 395h6.5v6.5h-6.5zM443 413h6.5v6.5h-6.5zM449 419h6.5v6.5h-6.5zM515 419h6.5v6.5h-6.5zM461 425h6.5v6.5h-6.5zM503 425h6.5v6.5h-6.5zM533 575h6.5v6.5h-6.5z"/>
<path fill="#969696" d="M533 299h6.5v6.5h-6.5zM539 305h6.5v6.5h-6.5zM551 335h6.5v6.5h-6.5zM545 359h6.5v6.5h-6.5zM527 407h6.5v6.5h-6.5zM545 581h6.5v6.5h-6.5z"/>
<path fill="#979797" d="M503 251h12.5v6.5h-12.5zM485 275h6.5v6.5h-6.5zM521 413h6.5v6.5h-6.5zM683 509h6.5v6.5h-6.5zM551 593h6.5v6.5h-6.5z"/>
<path fill="#989898" d="M515 257h6.5v6.5h-6.5zM521 269h6.5v6.5h-6.5zM455 365h6.5v6.5h-6.5zM539 377h6.5v6.5h-6.5zM533 395h6.5v6.5h-6.5zM443 401h6.5v6.5h-6.5zM443 407h6.5v6.5h-6.5zM455 419h6.5v6.5h-6.5zM467 425h6.5v6.5h-6.5zM497 425h6.5v6.5h-6.5z"/>
<path fill="#999999" d="M473 317h6.5v6.5h-6.5zM467 347h6.5v6.5h-6.5zM509 611h6.5v6.5h-6.5zM557 611h6.5v6.5h-6.5z"/>
<path fill="#9a9a9a" d="M497 257h6.5v6.5h-6.5zM527 293h6.5v6.5h-6.5zM449 389h6.5v6.5h-6.5zM449 413h6.5v6.5h-6.5zM473 425h6.5v6.5h-6.5zM491 425h6.5v6.5h-6.5zM515 593h6.5v6.5h-6.5z"/>
<path fill="#9b9b9b" d="M491 263h6.5v6.5h-6.5zM515 263h6.5v6.5h-6.5zM539 371h6.5v6.5h-6.5zM509 419h6.5v6.5h-6.5zM479 425h12.5v6.5h-12.5zM521 581h6.5v6.5h-6.5z"/>
<path fill="#9c9c9c" d="M503 257h12.5v6.5h-12.5zM521 275h6.5v6.5h-6.5zM479 293h6.5v6.5h-6.5zM545 317h6.5v6.5h-6.5zM473 323h6.5v6.5h-6.5zM545 353h6.5v6.5h-6.5zM461 359h6.5v6.5h-6.5zM461 419h6.5v6.5h-6.5z"/>
<path fill="#9d9d9d" d="M485 281h6.5v6.5h-6.5zM533 389h6.5v6.5h-6.5zM449 395h6.5v6.5h-6.5zM527 401h6.5v6.5h-6.5zM449 407h6.5v6.5h-6.5zM683 515h6.5v6.5h-6.5zM683 527h6.5v6.5h-6.5zM539 581h6.5v6.5h-6.5zM545 587h6.5v6.5h-6.5z"/>
<path fill="#9e9e9e" d="M449 401h6.5v6.5h-6.5zM455 413h6.5v6.5h-6.5zM683 521h6.5v6.5h-6.5zM551 599h6.5v6.5h-6.5z"/>
<path fill="#9f9f9f" d="M509 263h6.5v6.5h-6.5zM515 269h6.5v6.5h-6.5zM521 281h6.5v6.5h-6.5zM539 365h6.5v6.5h-6.5zM521 407h6.5v6.5h-6.5zM515 413h6.5v6.5h-6.5zM467 419h6.5v6.5h-6.5zM503 419h6.5v6.5h-6.5zM527 581h6.5v6.5h-6.5z"/>
<path fill="#a0a0a0" d="M497 263h6.5v6.5h-6.5zM491 269h6.5v6.5h-6.5zM473 329h6.5v6.5h-6.5zM455 371h6.5v6.5h-6.5zM533 581h6.5v6.5h-6.5z"/>
<path fill="#a1a1a1" d="M503 263h6.5v6.5h-6.5zM479 299h6.5v6.5h-6.5zM539 311h6.5v6.5h-6.5zM545 347h6.5v6.5h-6.5zM455 407h6.5v6.5h-6.5zM515 599h6.5v6.5h-6.5z"/>
<path fill="#a2a2a2" d="M545 323h6.5v6.5h-6.5zM467 353h6.5v6.5h-6.5zM455 377h6.5v6.5h-6.5zM533 383h6.5v6.5h-6.5zM461 413h6.5v6.5h-6.5zM473 419h6.5v6.5h-6.5zM497 419h6.5v6.5h-6.5zM521 587h6.5v6.5h-6.5z"/>
<path fill="#a3a3a3" d="M533 305h6.5v6.5h-6.5zM455 383h6.5v6.5h-6.5zM527 395h6.5v6.5h-6.5zM479 419h6.5v6.5h-6.5z"/>
<path fill="#a4a4a4" d="M509 269h6.5v6.5h-6.5zM521 287h6.5v6.5h-6.5zM527 299h6.5v6.5h-6.5zM473 335h6.5v6.5h-6.5zM455 389h6.5v6.5h-6.5zM455 401h6.5v6.5h-6.5zM509 413h6.5v6.5h-6.5zM485 419h12.5v6.5h-12.5z"/>
<path fill="#a5a5a5" d="M515 275h6.5v6.5h-6.5zM485 287h6.5v6.5h-6.5zM545 329h6.5v6.5h-6.5zM545 341h6.5v6.5h-6.5zM539 359h6.5v6.5h-6.5zM533 377h6.5v6.5h-6.5zM455 395h6.5v6.5h-6.5zM467 413h6.5v6.5h-6.5zM545 593h6.5v6.5h-6.5zM551 605h6.5v6.5h-6.5z"/>
<path fill="#a6a6a6" d="M497 269h6.5v6.5h-6.5zM491 275h6.5v6.5h-6.5zM479 305h6.5v6.5h-6.5zM545 335h6.5v6.5h-6.5zM521 401h6.5v6.5h-6.5zM461 407h6.5v6.5h-6.5zM539 587h6.5v6.5h-6.5z"/>
<path fill="#a7a7a7" d="M503 269h6.5v6.5h-6.5zM515 407h6.5v6.5h-6.5z"/>
<path fill="#a8a8a8" d="M473 341h6.5v6.5h-6.5zM533 371h6.5v6.5h-6.5zM473 413h6.5v6.5h-6.5zM503 413h6.5v6.5h-6.5z"/>
<path fill="#a9a9a9" d="M461 365h6.5v6.5h-6.5zM527 389h6.5v6.5h-6.5zM461 401h6.5v6.5h-6.5zM527 587h6.5v6.5h-6.5z"/>
<path fill="#aaaaaa" d="M479 311h6.5v6.5h-6.5zM467 407h6.5v6.5h-6.5zM479 413h6.5v6.5h-6.5zM497 413h6.5v6.5h-6.5zM533 587h6.5v6.5h-6.5zM521 593h6.5v6.5h-6.5zM515 605h6.5v6.5h-6.5z"/>
<path fill="#ababab" d="M509 275h6.5v6.5h-6.5zM515 281h6.5v6.5h-6.5zM521 293h6.5v6.5h-6.5zM539 317h6.5v6.5h-6.5zM539 353h6.5v6.5h-6.5zM461 395h6.5v6.5h-6.5zM551 611h6.5v6.5h-6.5z"/>
<path fill="#acacac" d="M491 281h6.5v6.5h-6.5zM485 293h6.5v6.5h-6.5zM467 359h6.5v6.5h-6.5zM533 365h6.5v6.5h-6.5zM461 383h6.5v6.5h-6.5zM461 389h6.5v6.5h-6.5zM509 407h6.5v6.5h-6.5zM485 413h12.5v6.5h-12.5z"/>
<path fill="#adadad" d="M461 371h6.5v6.5h-6.5zM461 377h6.5v6.5h-6.5zM521 395h6.5v6.5h-6.5zM467 401h6.5v6.5h-6.5zM473 407h6.5v6.5h-6.5z"/>
<path fill="#aeaeae" d="M497 275h6.5v6.5h-6.5zM479 317h6.5v6.5h-6.5zM473 347h6.5v6.5h-6.5zM515 401h6.5v6.5h-6.5z"/>
<path fill="#afafaf" d="M503 275h6.5v6.5h-6.5zM527 383h6.5v6.5h-6.5zM467 395h6.5v6.5h-6.5z"/>
<path fill="#b0b0b0" d="M533 311h6.5v6.5h-6.5zM479 407h6.5v6.5h-6.5zM503 407h6.5v6.5h-6.5zM539 593h6.5v6.5h-6.5zM545 599h6.5v6.5h-6.5zM515 611h6.5v6.5h-6.5z"/>
<path fill="#b1b1b1" d="M467 389h6.5v6.5h-6.5zM473 401h6.5v6.5h-6.5z"/>
<path fill="#b2b2b2" d="M515 287h6.5v6.5h-6.5zM485 299h6.5v6.5h-6.5zM527 305h6.5v6.5h-6.5zM479 323h6.5v6.5h-6.5zM539 323h6.5v6.5h-6.5zM539 347h6.5v6.5h-6.5zM533 359h6.5v6.5h-6.5zM467 365h6.5v6.5h-6.5zM467 383h6.5v6.5h-6.5zM497 407h6.5v6.5h-6.5z"/>
<path fill="#b3b3b3" d="M509 281h6.5v6.5h-6.5zM491 287h6.5v6.5h-6.5zM467 377h6.5v6.5h-6.5zM527 377h6.5v6.5h-6.5zM485 407h12.5v6.5h-12.5zM527 593h6.5v6.5h-6.5z"/>
<path fill="#b4b4b4" d="M473 353h6.5v6.5h-6.5zM467 371h6.5v6.5h-6.5zM521 389h6.5v6.5h-6.5zM473 395h6.5v6.5h-6.5zM509 401h6.5v6.5h-6.5zM533 593h6.5v6.5h-6.5zM521 599h6.5v6.5h-6.5z"/>
<path fill="#b5b5b5" d="M515 395h6.5v6.5h-6.5zM479 401h6.5v6.5h-6.5z"/>
<path fill="#b6b6b6" d="M497 281h6.5v6.5h-6.5zM521 299h6.5v6.5h-6.5zM479 329h6.5v6.5h-6.5zM539 341h6.5v6.5h-6.5zM527 371h6.5v6.5h-6.5z"/>
<path fill="#b7b7b7" d="M503 281h6.5v6.5h-6.5zM539 329h6.5v6.5h-6.5zM473 389h6.5v6.5h-6.5zM503 401h6.5v6.5h-6.5z"/>
<path fill="#b8b8b8" d="M485 305h6.5v6.5h-6.5zM539 335h6.5v6.5h-6.5zM485 401h6.5v6.5h-6.5z"/>
<path fill="#b9b9b9" d="M479 335h6.5v6.5h-6.5zM473 359h6.5v6.5h-6.5zM527 365h6.5v6.5h-6.5zM473 383h6.5v6.5h-6.5zM497 401h6.5v6.5h-6.5z"/>
<path fill="#bababa" d="M491 293h6.5v6.5h-6.5zM533 353h6.5v6.5h-6.5zM521 383h6.5v6.5h-6.5zM479 395h6.5v6.5h-6.5zM491 401h6.5v6.5h-6.5z"/>
<path fill="#bbbbbb" d="M509 287h6.5v6.5h-6.5zM515 293h6.5v6.5h-6.5zM533 317h6.5v6.5h-6.5zM473 377h6.5v6.5h-6.5zM509 395h6.5v6.5h-6.5zM545 605h6.5v6.5h-6.5z"/>
<path fill="#bcbcbc" d="M497 287h6.5v6.5h-6.5zM473 365h6.5v6.5h-6.5zM473 371h6.5v6.5h-6.5zM515 389h6.5v6.5h-6.5zM539 599h6.5v6.5h-6.5z"/>
<path fill="#bdbdbd" d="M485 311h6.5v6.5h-6.5zM479 341h6.5v6.5h-6.5z"/>
<path fill="#bebebe" d="M479 389h6.5v6.5h-6.5zM485 395h6.5v6.5h-6.5zM527 599h6.5v6.5h-6.5zM521 605h6.5v6.5h-6.5z"/>
<path fill="#bfbfbf" d="M503 287h6.5v6.5h-6.5zM527 311h6.5v6.5h-6.5zM527 359h6.5v6.5h-6.5zM503 395h6.5v6.5h-6.5z"/>
<path fill="#c0c0c0" d="M479 347h6.5v6.5h-6.5zM521 377h6.5v6.5h-6.5zM533 599h6.5v6.5h-6.5z"/>
<path fill="#c1c1c1" d="M491 299h6.5v6.5h-6.5zM485 317h6.5v6.5h-6.5zM479 383h6.5v6.5h-6.5zM491 395h12.5v6.5h-12.5zM545 611h6.5v6.5h-6.5z"/>
<path fill="#c2c2c2" d="M533 347h6.5v6.5h-6.5z"/>
<path fill="#c3c3c3" d="M521 305h6.5v6.5h-6.5zM533 323h6.5v6.5h-6.5zM485 389h6.5v6.5h-6.5zM509 389h6.5v6.5h-6.5zM521 611h6.5v6.5h-6.5z"/>
<path fill="#c4c4c4" d="M497 293h6.5v6.5h-6.5zM479 353h6.5v6.5h-6.5zM521 371h6.5v6.5h-6.5zM479 377h6.5v6.5h-6.5zM515 383h6.5v6.5h-6.5z"/>
<path fill="#c5c5c5" d="M509 293h6.5v6.5h-6.5zM515 299h6.5v6.5h-6.5z"/>
<path fill="#c6c6c6" d="M485 323h6.5v6.5h-6.5zM479 359h6.5v6.5h-6.5z"/>
<path fill="#c7c7c7" d="M503 293h6.5v6.5h-6.5zM491 305h6.5v6.5h-6.5zM479 365h6.5v6.5h-6.5zM479 371h6.5v6.5h-6.5zM491 389h6.5v6.5h-6.5zM503 389h6.5v6.5h-6.5z"/>
<path fill="#c8c8c8" d="M533 341h6.5v6.5h-6.5zM527 353h6.5v6.5h-6.5zM521 365h6.5v6.5h-6.5zM485 383h6.5v6.5h-6.5zM497 389h6.5v6.5h-6.5zM527 605h6.5v6.5h-6.5zM539 605h6.5v6.5h-6.5z"/>
<path fill="#c9c9c9" d="M485 329h6.5v6.5h-6.5zM533 329h6.5v6.5h-6.5z"/>
<path fill="#cacaca" d="M509 383h6.5v6.5h-6.5z"/>
<path fill="#cbcbcb" d="M497 299h6.5v6.5h-6.5zM527 317h6.5v6.5h-6.5zM533 335h6.5v6.5h-6.5zM515 377h6.5v6.5h-6.5zM533 605h6.5v6.5h-6.5z"/>
<path fill="#cccccc" d="M491 311h6.5v6.5h-6.5zM485 335h6.5v6.5h-6.5zM521 359h6.5v6.5h-6.5zM485 377h6.5v6.5h-6.5z"/>
<path fill="#cdcdcd" d="M491 383h6.5v6.5h-6.5z"/>
<path fill="#cecece" d="M509 299h6.5v6.5h-6.5zM503 383h6.5v6.5h-6.5zM527 611h6.5v6.5h-6.5zM539 611h6.5v6.5h-6.5z"/>
<path fill="#cfcfcf" d="M521 311h6.5v6.5h-6.5zM485 341h6.5v6.5h-6.5zM485 371h6.5v6.5h-6.5zM497 383h6.5v6.5h-6.5z"/>
<path fill="#d0d0d0" d="M503 299h6.5v6.5h-6.5z"/>
<path fill="#d1d1d1" d="M515 305h6.5v6.5h-6.5zM485 347h6.5v6.5h-6.5zM485 365h6.5v6.5h-6.5zM515 371h6.5v6.5h-6.5zM533 611h6.5v6.5h-6.5z"/>
<path fill="#d2d2d2" d="M497 305h6.5v6.5h-6.5zM491 317h6.5v6.5h-6.5zM527 347h6.5v6.5h-6.5zM485 353h6.5v6.5h-6.5zM485 359h6.5v6.5h-6.5zM491 377h6.5v6.5h-6.5zM509 377h6.5v6.5h-6.5z"/>
<path fill="#d4d4d4" d="M527 323h6.5v6.5h-6.5zM521 353h6.5v6.5h-6.5zM515 365h6.5v6.5h-6.5z"/>
<path fill="#d5d5d5" d="M497 377h12.5v6.5h-12.5z"/>
<path fill="#d6d6d6" d="M491 323h6.5v6.5h-6.5zM491 371h6.5v6.5h-6.5z"/>
<path fill="#d7d7d7" d="M515 359h6.5v6.5h-6.5z"/>
<path fill="#d8d8d8" d="M503 305h12.5v6.5h-12.5zM497 311h6.5v6.5h-6.5z"/>
<path fill="#d9d9d9" d="M521 317h6.5v6.5h-6.5zM491 365h6.5v6.5h-6.5zM509 371h6.5v6.5h-6.5z"/>
<path fill="#dadada" d="M491 329h6.5v6.5h-6.5zM527 329h6.5v6.5h-6.5zM527 341h6.5v6.5h-6.5zM497 371h6.5v6.5h-6.5z"/>
<path fill="#dbdbdb" d="M515 311h6.5v6.5h-6.5zM491 359h6.5v6.5h-6.5zM503 371h6.5v6.5h-6.5z"/>
<path fill="#dcdcdc" d="M509 365h6.5v6.5h-6.5z"/>
<path fill="#dddddd" d="M491 335h6.5v6.5h-6.5zM527 335h6.5v6.5h-6.5zM491 353h6.5v6.5h-6.5zM515 353h6.5v6.5h-6.5z"/>
<path fill="#dedede" d="M497 317h6.5v6.5h-6.5zM491 341h6.5v6.5h-6.5zM491 347h6.5v6.5h-6.5zM497 365h6.5v6.5h-6.5z"/>
<path fill="#dfdfdf" d="M503 311h6.5v6.5h-6.5zM509 359h6.5v6.5h-6.5zM503 365h6.5v6.5h-6.5z"/>
<path fill="#e0e0e0" d="M509 311h6.5v6.5h-6.5zM521 347h6.5v6.5h-6.5z"/>
<path fill="#e1e1e1" d="M497 359h6.5v6.5h-6.5z"/>
<path fill="#e2e2e2" d="M521 323h6.5v6.5h-6.5zM503 359h6.5v6.5h-6.5z"/>
<path fill="#e3e3e3" d="M515 317h6.5v6.5h-6.5z"/>
<path fill="#e4e4e4" d="M497 323h6.5v6.5h-6.5zM497 353h6.5v6.5h-6.5z"/>
<path fill="#e5e5e5" d="M509 353h6.5v6.5h-6.5z"/>
<path fill="#e6e6e6" d="M503 317h6.5v6.5h-6.5z"/>
<path fill="#e7e7e7" d="M503 353h6.5v6.5h-6.5z"/>
<path fill="#e8e8e8" d="M509 317h6.5v6.5h-6.5zM497 329h6.5v6.5h-6.5zM497 347h6.5v6.5h-6.5z"/>
<path fill="#e9e9e9" d="M521 329h6.5v6.5h-6.5zM515 347h6.5v6.5h-6.5z"/>
<path fill="#eaeaea" d="M497 335h6.5v6.5h-6.5zM497 341h6.5v6.5h-6.5z"/>
<path fill="#ebebeb" d="M515 323h6.5v6.5h-6.5zM521 341h6.5v6.5h-6.5z"/>
<path fill="#ececec" d="M503 323h6.5v6.5h-6.5z"/>
<path fill="#ededed" d="M503 347h6.5v6.5h-6.5z"/>
<path fill="#eeeeee" d="M521 335h6.5v6.5h-6.5zM509 347h6.5v6.5h-6.5z"/>
<path fill="#efefef" d="M509 323h6.5v6.5h-6.5z"/>
<path fill="#f1f1f1" d="M503 329h6.5v6.5h-6.5z"/>
<path fill="#f2f2f2" d="M515 329h6.5v6.5h-6.5zM503 341h6.5v6.5h-6.5z"/>
<path fill="#f4f4f4" d="M503 335h6.5v6.5h-6.5z"/>
<path fill="#f5f5f5" d="M509 329h6.5v6.5h-6.5zM515 341h6.5v6.5h-6.5z"/>
<path fill="#f7f7f7" d="M509 341h6.5v6.5h-6.5z"/>
<path fill="#f8f8f8" d="M515 335h6.5v6.5h-6.5z"/>
<path fill="#f9f9f9" d="M509 335h6.5v6.5h-6.5z"/>
</g>
<path id="iso" fill="none" stroke="#04140a" stroke-width="1" d="M408.7 174L408.6 186L404.5 206L404 214L404.3 220L405.8 230L409.1 242L425.7 290L426 294L425.4 298L422.3 310L419.6 316L418.9 320L419.5 334L420.6 338L424.6 346L424 347.4L420 346.1L410 339L404 336.3L400 335.4L390 335.6L384 335M626.4 252L632 250.4L638 250.3L648 251.2L652 252.3L655 254L662.6 260L666 264L668.5 270L671.2 282L670.7 290L667.7 302L666.5 310L665.6 338L664.8 348L663.4 356L664 364.6L663 366L656 368.8L648 370.8L642 371.5L640 371.4L636.6 370L632.5 366L630 364.4L627.7 364L625.9 366L626 384L626.9 388L628.6 392L632.2 398L636.9 404L652 418.6L654.9 422L657.4 426L660.9 434L662.7 440L662.7 444L661.3 452L658 458.1L656 460.2L648 465.1L644 466.5L640 467.1L632 466.6L624 464.1L617.5 460L612 454.8L608.4 450L606.7 446L603.5 426L603.7 418L606.2 400L606.9 390L609.4 372L613.6 332L611.2 304L608.7 296L601.5 280L601.3 278L602 274.5L605.2 268L610 261L616 256.5L626.4 252M456.5 580L460 578.3L462 578L466 578.6L470 581.2L472.7 586L473 592L472 595.4L469.2 600L468.7 608L467.9 610L466.1 612L464 612.9L462 612.8L460.3 612L458.5 610L457.7 608L456.3 600L452.5 592L452.1 590L452.6 586L454 582.8L456.5 580M596.9 614L595.4 608L596.8 584L598.7 572L602.1 558L604.8 552L612 541.7L616.2 538L624 534.4L628 533.5L632 534L638 536.8L643.1 540L646 542.4L649 546L654.6 556L656.7 564L656.9 576L655.3 582L649.9 596M430 172L427.2 186L421.7 204L420.9 214L422.1 222L424.7 230L429.1 238L438.1 250L439.9 254L441 258L441.9 272L448.1 302L449.1 312L448.4 318L446.2 324L444 327.1L440.2 330M446 344L447.2 348L445.6 354L442.6 358L438 359.5L428 360.3L420 359.9L412 358.4L396 354.1L382 351.7M547.3 168L542.7 176L538.5 180L530 183.2L522 184.4L514 183.1L506.8 180L502.5 176L498.9 170M372 421.2L374 423.8L374.9 426L379.9 440L381.5 446M380.3 462L376.5 468L372 472.5L368 474.9L362 476.4M450.6 472L456 471.6L460 472.3L466 475.3L468.8 478L470.9 482L471.5 486L470 490L468.6 492L466 494.4L460 497.4L454 497.6L448 495.3L442.8 490L441.8 488L440.8 484L441.2 480L442 478L445.8 474L450.6 472M347.8 570L355.6 578L360.2 586L362.9 596L363.2 606M443.4 614L440.2 594L440.1 590L440.9 584L443.4 576L446 571.3L450 566.8L454 564.2M470 564.1L474 566.2L478 569.9L480.6 574L482.8 580L484 586L484.6 594L483.7 608L482 614.6M588 615.4L587.1 612L587 608L590.2 570L590.8 556M591.6 540L591.6 530L588.7 508L588 504.4L586 502.1L582 502L572 505.6L568 506.4L554 506.5L542 503.8L537.5 502L534 498.8L528.8 490L526.9 484L527 480L529 474L532.4 468L536 463.1L544 455.9L553.3 450L558.3 446L565.8 438L570 431.9M572.2 416L572.7 410L573.8 408L576 407.4L582 407.2L584 406.4L586 405.1L588.5 402L589.2 400L589.6 396L588.3 390L588.4 388L594.3 372L601.9 346L603.1 338M599.6 322L597.3 310L596 290L594.4 284L590 276.2L586 270.7L582 267.3L573.1 262L571.9 260L572.1 256L574.9 246L576.7 242L579.5 238L584 235.1L596 231.6L614 228.3L622 228L630 228.6L640 230.3L661.2 236L674 238.7L677.1 240M670 371.5L660 376.8L657.5 382L657 388L657.9 394L659.7 400L668.6 418L673.5 430L674.3 436L673.5 450L671 460L665.5 476L655.3 496L654.3 500L654.1 504L655 512L657.1 522L660.9 534L665.5 542L672 549.9L672.8 552L673.6 560L673.2 570M679.1 372L674.8 378M672 394L672.9 398L674.5 402L680.8 412M681.3 454L679.7 458M673.5 474L668.5 486L665.7 496L664.4 502L664.4 508L667.1 520L672.7 536L680.2 548L682.4 554M350 557.4L358 564.5L363.2 570L366.1 574L369.3 580M372.4 596L373.1 614M430 614.5L427.9 596L428.8 582L430.6 572L432.9 564L442.1 542L443.2 534L442 527.7M434.1 512L428.6 504L426.6 500L424 496.7L422.7 494M420.6 478L424.7 470L428 466.1L430 464.6L434 463.3L446 461.1L458 460.9L475.9 464L496 474.5L498 474.6L508 472.7L516 469.8L522 465.8M533.5 454L543.6 442L547.5 436L553.1 424L559.2 408M570 398L574 399.3L578 399.7L580 399.2L581.7 398L582.9 396L583.1 394L582.4 388L584.7 380L586.6 364L590.5 346L595 332L595.2 328L594 322L592.3 318L588.5 312L587 308L585.3 296M578.3 280L574 279.1L564 280.9L562 280.8L560 280L558 278.1L555.9 274L554.6 268L554.7 258L554.2 254L555.3 248L560 238.2L564 232.3L568 227.7L578 219.3L598.7 206L604.1 200L605.8 196L606 193.9M601.7 178L600 171.9L598 167.6M570.3 168L559.4 184M544 193.1L538 194.3L530 194.5L518 193.7L510 191.6L500 187.5L496 185.2L492.3 182L484 172.6L479.8 170M450 171.6L446 175.4L444 178.4M437.3 194L435.2 206L435.3 210L436.2 214L439.1 222L441.2 226L450 235.4L453.2 240L455.8 248L459.1 262L459.5 266L456.6 278L456 284L457 312L454.4 332L454 348L452.2 354L448 364.4L446 365.8L436 365.2L428 367M412 369.4L402 370.1L379.4 366M372 409.1L380 408.5L383 410L385.7 414L393.1 434L397.4 448L398.3 452L398 458L394.5 470L391.6 474L385.4 480L382 482.3L376 484.6L360 487.5M582.5 614L582.3 606L583.2 586L584.3 574L584.4 564L582.4 552L580 544.4L574 536.3L569 532L552 524.2L538 520.4M522 517.3L518 517L514 517.3L500 522.6L496 526.6L492.5 534L491.1 540L490.7 548L490.9 556L493 578L492.4 606L491.3 614M466 191.7L462 193.4L459.3 196L457.1 200L456.2 204M456.8 220L458.6 228L469.6 262M467.1 278L465.2 286L463.8 314L460.2 344L458 352L450 370L448 373.1L446 374L442.3 370L440 369L434.3 370L430.7 372L427.3 376L420 382.6L414 386.3M400.1 400L402.3 416L404.2 424L407.1 430L414 440.5L418 444.3L422 446.3L428 447.6L440 449M456 451.3L472 454.8L480 457.3L488 461.2L496 466.6L498 467.3L506 467L514 464.2L520 459.1L528 449.6M539 434L542 429L548 414.8L553.5 398M558 380.4L560 373.3L562 370L564 368.7L568 368.1L574 369.7L576 369.3L576.7 368L579.3 358L579.9 350L576.5 344L575 340L573.9 336L574 331.8L575.4 328L578 325.7L580 325.4L584 326.5L586 326.6L586.6 324L576.7 310L574 308.9L568 308.7L564 306.5L562 304L560 299.6L558.7 298L550 290.3L546.9 286L546 282L545.2 270L545.3 260L543.4 252L539.9 228L538.1 222L534.6 218L528 212.7L519.6 208L482 192.5L474 191.3L466 191.7M682 481.2L672.5 500M671.6 516L676.3 534L678.4 538L682.9 544M390 496L390 496M374 497.2L364 497.3L361.4 498L358 500.1M352 542.9L360 551.4L374 564.2M385.6 580L387.1 584L388.5 592L388.8 600L387.8 610L388.8 614M411.3 614L411.5 610L410.5 604M410.2 588L419.1 546L419.7 534L418.8 526L414 512L412 508.7L408 504.2L404 500.9L400 498.7L394 496.4L390 496M577.3 614L576 595.9L573.2 578L571 570L567.2 562L561.5 554L553.3 546L548 543.4L538 541.2M522 545.8L516 551.3L512.2 556L509.9 560L507.4 566L502.9 584L498 614.9M494 225.8L490 227.4L488 229.1L485.9 232L484.3 236L483.3 242L482.3 268L481.5 276L480 279.5L475.6 286L473.5 292L472 300L467.4 336L465.9 344L464 350L461.1 356L454.8 366L451.1 378L448 383.3L444 387.2L440 389.3L436 390.1L430 390.1L428 390.8L426 392.5L424.3 396L422.8 404L422.7 416L424.4 422L429.1 428M444 435.5L470 442.9L492 445.1L500 444.5L516 437.2L522 433.3L533.3 422L540.5 410M546.6 394L553.5 368L560.7 354L561.9 350L562.4 342L561.1 324L559.2 318L554 309.1L550 304.3L542 296.9L539 292L537.7 286L537.8 278L534 265.2L527.9 250L520 236.9M506 226.3L500 225.6L494 225.8M682.1 502L677.9 512L677.3 516L678.9 524L679.9 534L682.6 538M368 519.7L363.8 522L361.9 524L361 526L360.9 528L361.6 530L364 533.1L368 535.8L374 537.2L380 536.4L383.3 534L384.6 532L385.4 528L384.9 526L383.6 524L381 522L376 519.7L372 519.1L368 519.7M569.7 614L568 606.4L562.6 590L560 584L552 573.5L546 569.1M530 566.9L526 568.1L522 570.7L514 581.2L511.4 588L505 614M506 255.7L502 257.5L496 261.7L494 263.8L492 267.2L488.2 280L482.4 292L479.7 300L473.2 338L470.7 348L468.2 354L465.9 358L457.7 368L454.3 384L448.1 400L447 404L447 408L448.1 412L450 415L452.9 418L458 421.6L466 426.1L470 427.7L476 428.7M492 429.2L506 425.8L514.4 422L522.9 416L530 407.7L534 401.1L538 391.4L544.8 368L551.2 350L552.6 342L552.8 336L552.1 330L550.7 324L549.1 320L544 312L534.3 302L531.3 298L529 292L525.2 276L518 261.7L516 259.1L512 256.4L508 255.5L506 255.7M560 614.1L553.2 596L548 586L545.9 584L542 581.6L538 580.3L534 579.9L530 580.3L526 581.5L522 584.6L517.6 596L512 614M500 280L497.7 282L494 287.6L488 300.2L484 314.1L476.8 350L474 358L467.2 372L467 374L470.7 396L473.7 402L478 406.8M494 412.2L506 409.3L512 406.5L520 399.5L524.6 394L529.1 386L533.5 368L541.6 352L543.5 346L544.5 340L544.4 334L543.7 330L540.8 322L537.1 316L525.6 302L516 286.2L512 282.1L508 279.7L504 278.9L500 280M552.3 614L550 606L546 599.9L540 595.2L534 593.7L530 594.6L528 595.8L524 599.7L520 607.3L518 614M504 297.1L500 299.8L495.7 306L492 314.8L488.5 328L482.7 366L483.5 376L486 382.6M500 391.9L504 391.3L510 388.8L516 384.4L519.6 380L522 374.7L525.9 362L534.7 348L536.1 344L536.9 338L536 331L533.3 324L529.6 318L522 308L516 301.3L512 298.2L508 296.7L504 297.1M545.7 614L545.5 612L544 609.4L540 607L536 606.2L532 606.7L529.5 608L527.5 610L526 614M508 313.8L504 316.2L499.9 322L496.9 330L495.1 340L495.2 350L497 358L500 363.5L502 365.3L504 366.2L506 366.2L508 365.4L515.9 356L524 349.8L527.1 346L529.1 340L529 336L528 332L526 327.9L522 322.1L518 317.5L514 314.5L510 313.5L508 313.8M512 335.1L510.8 336L509.7 338L509.7 340L510.6 342L514 343.7L518 342.7L518.8 342L519.3 340L518 337L516 335.4L514 334.8L512 335.1"/>
<g font-size="8.5" fill="#06140a" text-anchor="middle">
<text transform="translate(440.2 186) rotate(-65)" y="3">-1.9</text>
<text transform="translate(456.2 212) rotate(87)" y="3">-2.4</text>
<text transform="translate(514 230) rotate(42)" y="3">-2.9</text>
<text transform="translate(552.4 190) rotate(-29)" y="3">-1.9</text>
<text transform="translate(604.2 186) rotate(74)" y="3">-1.9</text>
<text transform="translate(420 368.4) rotate(-8)" y="3">-1.9</text>
<text transform="translate(406 392.8) rotate(-43)" y="3">-2.4</text>
<text transform="translate(492 389.5) rotate(35)" y="3">-4.4</text>
<text transform="translate(486 411.3) rotate(18)" y="3">-3.9</text>
<text transform="translate(484 429.5) rotate(3)" y="3">-3.4</text>
<text transform="translate(436 432.5) rotate(26)" y="3">-2.9</text>
<text transform="translate(448 450.1) rotate(8)" y="3">-2.4</text>
<text transform="translate(420.6 486) rotate(82)" y="3">-1.9</text>
<text transform="translate(382 497) rotate(-5)" y="3">-2.4</text>
<text transform="translate(382.6 454) rotate(-90)" y="3">-1.4</text>
<text transform="translate(380.5 572) rotate(54)" y="3">-2.4</text>
<text transform="translate(409.6 596) rotate(90)" y="3">-2.4</text>
<text transform="translate(438 519) rotate(62)" y="3">-1.9</text>
<text transform="translate(462 562.4) rotate(0)" y="3">-1.4</text>
<text transform="translate(530 518.7) rotate(11)" y="3">-1.9</text>
<text transform="translate(530 541.5) rotate(-13)" y="3">-2.4</text>
<text transform="translate(538 566.7) rotate(7)" y="3">-2.9</text>
<text transform="translate(556 388.9) rotate(-76)" y="3">-2.4</text>
<text transform="translate(544 402) rotate(-70)" y="3">-2.9</text>
<text transform="translate(562 400.1) rotate(-65)" y="3">-1.9</text>
<text transform="translate(571.6 424) rotate(-83)" y="3">-1.4</text>
<text transform="translate(533.6 442) rotate(-55)" y="3">-2.4</text>
<text transform="translate(528 459.9) rotate(-46)" y="3">-1.9</text>
<text transform="translate(676 365.3) rotate(-46)" y="3">-1.4</text>
<text transform="translate(672.4 386) rotate(-79)" y="3">-1.9</text>
<text transform="translate(676.5 466) rotate(-68)" y="3">-1.9</text>
<text transform="translate(670.9 508) rotate(-88)" y="3">-2.4</text>
<text transform="translate(584 287.7) rotate(76)" y="3">-1.9</text>
<text transform="translate(601.6 330) rotate(77)" y="3">-1.4</text>
<text transform="translate(371.7 588) rotate(78)" y="3">-1.9</text>
<text transform="translate(591.2 548) rotate(-87)" y="3">-1.4</text>
<text transform="translate(470.5 270) rotate(-83)" y="3">-2.4</text>
<text transform="translate(440.3 338) rotate(53)" y="3">-1.4</text>
</g>
<rect x="405" y="175" width="18" height="17" fill="none" stroke="#8c6a24" stroke-width="1"/>
<rect x="491.8" y="168" width="52.8" height="27" fill="none" stroke="#8c6a24" stroke-width="1"/>
<rect x="623.6" y="166" width="21.4" height="24" fill="none" stroke="#8c6a24" stroke-width="1"/>
<rect x="391.4" y="243" width="27" height="37.4" fill="none" stroke="#8c6a24" stroke-width="1"/>
<rect x="423" y="252" width="53" height="46" fill="none" stroke="#8c6a24" stroke-width="1"/>
<rect x="546" y="242" width="52" height="48.4" fill="none" stroke="#8c6a24" stroke-width="1"/>
<rect x="623.5" y="242" width="45" height="48.5" fill="none" stroke="#8c6a24" stroke-width="1"/>
<rect x="630.5" y="315" width="45.5" height="54.5" fill="none" stroke="#8c6a24" stroke-width="1"/>
<rect x="633" y="429.3" width="47" height="44" fill="none" stroke="#8c6a24" stroke-width="1"/>
<rect x="428.3" y="322.8" width="20.7" height="56.2" fill="none" stroke="#8c6a24" stroke-width="1"/>
<rect x="546" y="353" width="52" height="54" fill="none" stroke="#8c6a24" stroke-width="1"/>
<rect x="428" y="460" width="46.7" height="43.2" fill="none" stroke="#8c6a24" stroke-width="1"/>
<rect x="526.4" y="460" width="46.6" height="43.2" fill="none" stroke="#8c6a24" stroke-width="1"/>
<rect x="366" y="437.2" width="19.8" height="48.1" fill="none" stroke="#8c6a24" stroke-width="1"/>
<rect x="345" y="570" width="23.2" height="44" fill="none" stroke="#8c6a24" stroke-width="1"/>
<rect x="437.7" y="570" width="54.6" height="44" fill="none" stroke="#8c6a24" stroke-width="1"/>
<rect x="400" y="313.8" width="0.5" height="56.7" fill="none" stroke="#8c6a24" stroke-width="1"/>
<path d="M579.7 616V566h36V530.800h53.300V569.7" fill="none" stroke="#8c6a24" stroke-width="1"/>
<path d="M428.3 379h47" fill="none" stroke="#8a3070" stroke-width="1"/>
<path d="M399.4 226.3L420 229.5" stroke="#8a8228" stroke-width="2.2" fill="none" stroke-linecap="round"/>
<path d="M420 229.5L440 232.5" stroke="#8c5a1c" stroke-width="2.2" fill="none" stroke-linecap="round"/>
<path d="M440 232.5L461 236" stroke="#90381a" stroke-width="2.2" fill="none" stroke-linecap="round"/>
<path d="M461 245L460.5 258" stroke="#8c4a1c" stroke-width="2.2" fill="none" stroke-linecap="round"/>
<path d="M460.5 258L457 262.5" stroke="#94601c" stroke-width="2.2" fill="none" stroke-linecap="round"/>
<path d="M457 262.5L453 263.5" stroke="#94601c" stroke-width="2.2" fill="none" stroke-linecap="round"/>
<path d="M390 296.4L418 300.3" stroke="#9c9230" stroke-width="2.2" fill="none" stroke-linecap="round"/>
<path d="M418 300.3L447 304.3" stroke="#a09830" stroke-width="2.2" fill="none" stroke-linecap="round"/>
<path d="M380 366L404 370.7" stroke="#8a6a20" stroke-width="2.2" fill="none" stroke-linecap="round"/>
<path d="M404 370.7L430.4 373" stroke="#90401a" stroke-width="2.2" fill="none" stroke-linecap="round"/>
<path d="M430.4 373L447 372" stroke="#981c10" stroke-width="2.2" fill="none" stroke-linecap="round"/>
<path d="M646.5 180L646.5 261" stroke="#8a7a1c" stroke-width="2.4" fill="none" stroke-linecap="round"/>
<path d="M652 266L678 266" stroke="#8a7a1c" stroke-width="2.4" fill="none" stroke-linecap="round"/>
<path d="M415.7 612L415.7 591.5" stroke="#a01010" stroke-width="2.6" fill="none" stroke-linecap="round"/>
<path d="M415.7 591.5L430 591.5" stroke="#a02010" stroke-width="2.2" fill="none" stroke-linecap="round"/>
<path d="M430 591.5L445 591.5" stroke="#a06018" stroke-width="2.2" fill="none" stroke-linecap="round"/>
<path d="M445 591.5L460 591.5" stroke="#a09028" stroke-width="2.2" fill="none" stroke-linecap="round"/>
<path d="M465 597L465 612" stroke="#a09028" stroke-width="2.2" fill="none" stroke-linecap="round"/>
<path d="M580.8 612L580.8 593.3" stroke="#903018" stroke-width="2.2" fill="none" stroke-linecap="round"/>
<path d="M580.8 593.3L604 593.3" stroke="#8a5a20" stroke-width="2.2" fill="none" stroke-linecap="round"/>
<path d="M611 590L638 560" stroke="#a4a488" stroke-width="2.6" fill="none" stroke-linecap="round"/>
<path d="M647 555.4L665 555.4" stroke="#8a7a24" stroke-width="2.2" fill="none" stroke-linecap="round"/>
<path d="M665 555.4L680 555.4" stroke="#8a4a1c" stroke-width="2.2" fill="none" stroke-linecap="round"/>
<rect x="452.5" y="293" width="52.5" height="68" fill="#fcfcfa"/>
<rect x="533" y="320" width="37" height="36.5" fill="#fcfcfa"/>
<rect x="431.5" y="287" width="95.5" height="6.4" fill="#fcfcfa"/>
<rect x="447.5" y="253" width="5.5" height="120" fill="#fcfcfa"/>
<rect x="431.5" y="360" width="101.5" height="7" fill="#fcfcfa"/>
<rect x="504.4" y="293" width="7.6" height="68" fill="#fcfcfa"/>
<rect x="527" y="320" width="6.5" height="62.5" fill="#fcfcfa"/>
<rect x="505" y="260" width="6.6" height="27" fill="#fcfcfa"/>
<rect x="505.6" y="313.5" width="84.4" height="6.1" fill="#fcfcfa"/>
<rect x="533" y="356" width="35" height="5" fill="#fcfcfa"/>
<path d="M567.1 242.400h6.500L577 407h-6.500z" fill="#fcfcfa"/>
<rect x="561.4" y="360" width="29.6" height="7" fill="#fcfcfa"/>
<rect x="504.4" y="367" width="7.1" height="17.6" fill="#fcfcfa"/>
<path d="M450.2 262L450.2 372" stroke="#9a9a9a" stroke-width="1.6"/>
<path d="M453 288.5L527 288.5" stroke="#c0c0c0" stroke-width="1.2"/>
<path d="M470 291.5L527 291.5" stroke="#9a9a9a" stroke-width="2"/>
<path d="M508.7 293L508.7 316" stroke="#9a9a9a" stroke-width="2.6"/>
<path d="M508.7 339.6L508.7 361" stroke="#9a9a9a" stroke-width="2.6"/>
<path d="M475 363.3L533 363.3" stroke="#9a9a9a" stroke-width="2.6"/>
<path d="M431.5 361L475 361" stroke="#c8c8c8" stroke-width="1"/>
<path d="M530.5 315.5L567 315.5" stroke="#9a9a9a" stroke-width="2.2"/>
<path d="M533 358.5L567 358.5" stroke="#9a9a9a" stroke-width="2"/>
<path d="M568.5 322L568.5 356" stroke="#9a9a9a" stroke-width="1.6"/>
<path d="M572 300L572 340" stroke="#c8c8c8" stroke-width="1"/>
<path d="M512.5 320L512.5 360" stroke="#b0b0b0" stroke-width="1"/>
<path d="M527 320L527 360" stroke="#b0b0b0" stroke-width="1"/>
<path d="M533.5 320L533.5 356" stroke="#b0b0b0" stroke-width="1"/>
<path d="M504.5 293L504.5 361" stroke="#b8b8b8" stroke-width="1"/>
<path d="M534 321.800l13 10.700M530.5 357.400l13-15.400M561.4 344.300l8.3 9.5" stroke="#a8a8a8" stroke-width="1" fill="none"/>
<rect x="515" y="182" width="10.5" height="20.5" fill="#fff" stroke="#c09090" stroke-width=".8"/>
<ellipse cx="520.2" cy="192.2" rx="2.6" ry="7.7" fill="none" stroke="#909090" stroke-width=".9"/>
<rect x="460.5" y="231.5" width="11.5" height="14.5" fill="#fff" stroke="#c09090" stroke-width=".8" transform="rotate(12 466.2 238.8)"/>
<ellipse cx="466.2" cy="238.8" rx="3.1" ry="4.7" fill="none" stroke="#909090" stroke-width=".9" transform="rotate(12 466.2 238.8)"/>
<rect x="476.4" y="449" width="12" height="14.5" fill="#fff" stroke="#c09090" stroke-width=".8"/>
<ellipse cx="482.4" cy="456.2" rx="3.4" ry="4.7" fill="none" stroke="#909090" stroke-width=".9"/>
<rect x="415.4" y="428.4" width="9.1" height="18.1" fill="#fff" stroke="#c09090" stroke-width=".8"/>
<ellipse cx="419.9" cy="437.4" rx="2" ry="6.5" fill="none" stroke="#909090" stroke-width=".9"/>
<rect x="506" y="433.7" width="15" height="10.6" fill="#fff" stroke="#c09090" stroke-width=".8"/>
<ellipse cx="513.5" cy="439" rx="4.9" ry="2.7" fill="none" stroke="#909090" stroke-width=".9"/>
<rect x="538" y="436.3" width="14" height="9.7" fill="#fff" stroke="#c09090" stroke-width=".8"/>
<ellipse cx="545" cy="441.1" rx="4.4" ry="2.2" fill="none" stroke="#909090" stroke-width=".9"/>
<rect x="569.5" y="443" width="14.1" height="11" fill="#fff" stroke="#c09090" stroke-width=".8"/>
<ellipse cx="576.5" cy="448.5" rx="4.5" ry="2.9" fill="none" stroke="#909090" stroke-width=".9"/>
<rect x="538" y="477.7" width="16.2" height="11.3" fill="#fff" stroke="#c09090" stroke-width=".8"/>
<ellipse cx="546.1" cy="483.4" rx="5.5" ry="3.1" fill="none" stroke="#909090" stroke-width=".9"/>
<rect x="647" y="444" width="8" height="9.6" fill="#fff" stroke="#e8e8e8" stroke-width=".8"/>
<rect x="645" y="334" width="7" height="9" fill="#fff" stroke="#e8e8e8" stroke-width=".8"/>
<rect x="644" y="260.6" width="7" height="9.4" fill="#fff" stroke="#e8e8e8" stroke-width=".8"/>
<rect x="450.6" y="480.7" width="7.7" height="6.7" fill="#fff" stroke="#e8e8e8" stroke-width=".8"/>
<rect x="382.8" y="504" width="10.2" height="14" fill="#fff" stroke="#c09090" stroke-width=".8"/>
<ellipse cx="387.9" cy="511" rx="2.5" ry="4.4" fill="none" stroke="#909090" stroke-width=".9"/>
<rect x="460" y="589" width="8" height="7" fill="#fff" stroke="#e8e8e8" stroke-width=".8"/>
<rect x="526.8" y="546.8" width="9.5" height="17.8" fill="#fff" stroke="#c09090" stroke-width=".8"/>
<ellipse cx="531.5" cy="555.7" rx="2.1" ry="6.3" fill="none" stroke="#909090" stroke-width=".9"/>
<rect x="531.5" y="587.8" width="13.5" height="9.6" fill="#fff" stroke="#c09090" stroke-width=".8"/>
<ellipse cx="538.2" cy="592.6" rx="4.2" ry="2.2" fill="none" stroke="#909090" stroke-width=".9"/>
<rect x="637" y="553" width="10" height="9.5" fill="#fff" stroke="#c09090" stroke-width=".8" transform="rotate(40 642 557.8)"/>
<ellipse cx="642" cy="557.8" rx="2.4" ry="2.1" fill="none" stroke="#909090" stroke-width=".9" transform="rotate(40 642 557.8)"/>
<rect x="604.3" y="586.8" width="6.7" height="8.6" fill="#fff" stroke="#e8e8e8" stroke-width=".8"/>
<rect x="569.7" y="377.5" width="10.6" height="8.3" fill="#fff" stroke="#e8e8e8" stroke-width=".8"/>
<rect x="568.5" y="263.7" width="9.5" height="8.3" fill="#fff" stroke="#e8e8e8" stroke-width=".8"/>
<rect x="445.5" y="345.5" width="5.5" height="9" fill="#fff" stroke="#e8e8e8" stroke-width=".8"/>
</g>
<rect x="527.5" y="171" width="24.5" height="11.5" fill="none" stroke="#a4a4a4" stroke-width="1"/>
<text x="539.8" y="180.8" font-size="10.5" fill="#a4a4a4" text-anchor="middle" textLength="19.5" lengthAdjust="spacingAndGlyphs">0.82</text>
<rect x="635" y="187.5" width="24.5" height="11.5" fill="none" stroke="#a4a4a4" stroke-width="1"/>
<text x="647.2" y="197.3" font-size="10.5" fill="#a4a4a4" text-anchor="middle" textLength="19.5" lengthAdjust="spacingAndGlyphs">0.31</text>
<rect x="620.5" y="217.5" width="24.5" height="11.5" fill="none" stroke="#a4a4a4" stroke-width="1"/>
<text x="632.8" y="227.3" font-size="10.5" fill="#a4a4a4" text-anchor="middle" textLength="19.5" lengthAdjust="spacingAndGlyphs">0.82</text>
<rect x="652.5" y="232.3" width="24.5" height="11.5" fill="none" stroke="#a4a4a4" stroke-width="1"/>
<text x="664.8" y="242.1" font-size="10.5" fill="#a4a4a4" text-anchor="middle" textLength="19.5" lengthAdjust="spacingAndGlyphs">0.31</text>
<rect x="667.5" y="269.5" width="24.5" height="11.5" fill="none" stroke="#a4a4a4" stroke-width="1"/>
<text x="679.8" y="279.3" font-size="10.5" fill="#a4a4a4" text-anchor="middle" textLength="19.5" lengthAdjust="spacingAndGlyphs">0.82</text>
<rect x="402.5" y="233.5" width="24.5" height="11.5" fill="none" stroke="#a4a4a4" stroke-width="1"/>
<text x="414.8" y="243.3" font-size="10.5" fill="#a4a4a4" text-anchor="middle" textLength="19.5" lengthAdjust="spacingAndGlyphs">0.82</text>
<rect x="464.3" y="253" width="24.5" height="11.5" fill="none" stroke="#a4a4a4" stroke-width="1"/>
<text x="476.6" y="262.8" font-size="10.5" fill="#a4a4a4" text-anchor="middle" textLength="19.5" lengthAdjust="spacingAndGlyphs">0.82</text>
<rect x="427.9" y="266.3" width="24.5" height="11.5" fill="none" stroke="#a4a4a4" stroke-width="1"/>
<text x="440.1" y="276.1" font-size="10.5" fill="#a4a4a4" text-anchor="middle" textLength="19.5" lengthAdjust="spacingAndGlyphs">0.82</text>
<rect x="478.5" y="293.5" width="24.5" height="11.5" fill="none" stroke="#a4a4a4" stroke-width="1"/>
<text x="490.8" y="303.3" font-size="10.5" fill="#a4a4a4" text-anchor="middle" textLength="19.5" lengthAdjust="spacingAndGlyphs">0.82</text>
<rect x="506" y="306.5" width="24.5" height="11.5" fill="none" stroke="#a4a4a4" stroke-width="1"/>
<text x="518.2" y="316.3" font-size="10.5" fill="#a4a4a4" text-anchor="middle" textLength="19.5" lengthAdjust="spacingAndGlyphs">0.82</text>
<rect x="390.5" y="304.5" width="24.5" height="11.5" fill="none" stroke="#a4a4a4" stroke-width="1"/>
<text x="402.8" y="314.3" font-size="10.5" fill="#a4a4a4" text-anchor="middle" textLength="19.5" lengthAdjust="spacingAndGlyphs">0.82</text>
<rect x="454.5" y="320.2" width="24.5" height="11.5" fill="none" stroke="#a4a4a4" stroke-width="1"/>
<text x="466.8" y="330" font-size="10.5" fill="#a4a4a4" text-anchor="middle" textLength="19.5" lengthAdjust="spacingAndGlyphs">0.82</text>
<rect x="552.9" y="320.2" width="24.5" height="11.5" fill="none" stroke="#a4a4a4" stroke-width="1"/>
<text x="565.1" y="330" font-size="10.5" fill="#a4a4a4" text-anchor="middle" textLength="19.5" lengthAdjust="spacingAndGlyphs">0.82</text>
<rect x="544.3" y="338.9" width="24.5" height="11.5" fill="none" stroke="#a4a4a4" stroke-width="1"/>
<text x="556.5" y="348.7" font-size="10.5" fill="#a4a4a4" text-anchor="middle" textLength="19.5" lengthAdjust="spacingAndGlyphs">0.82</text>
<rect x="366.5" y="371" width="24.5" height="11.5" fill="none" stroke="#a4a4a4" stroke-width="1"/>
<text x="378.8" y="380.8" font-size="10.5" fill="#a4a4a4" text-anchor="middle" textLength="19.5" lengthAdjust="spacingAndGlyphs">0.82</text>
<rect x="376.4" y="383.5" width="24.5" height="11.5" fill="none" stroke="#a4a4a4" stroke-width="1"/>
<text x="388.6" y="393.3" font-size="10.5" fill="#a4a4a4" text-anchor="middle" textLength="19.5" lengthAdjust="spacingAndGlyphs">0.82</text>
<rect x="436.9" y="374.9" width="24.5" height="11.5" fill="none" stroke="#a4a4a4" stroke-width="1"/>
<text x="449.1" y="384.7" font-size="10.5" fill="#a4a4a4" text-anchor="middle" textLength="19.5" lengthAdjust="spacingAndGlyphs">0.82</text>
<rect x="494.3" y="365.9" width="24.5" height="11.5" fill="none" stroke="#a4a4a4" stroke-width="1"/>
<text x="506.6" y="375.7" font-size="10.5" fill="#a4a4a4" text-anchor="middle" textLength="19.5" lengthAdjust="spacingAndGlyphs">0.82</text>
<rect x="534.5" y="363.2" width="24.5" height="11.5" fill="none" stroke="#a4a4a4" stroke-width="1"/>
<text x="546.8" y="373" font-size="10.5" fill="#a4a4a4" text-anchor="middle" textLength="19.5" lengthAdjust="spacingAndGlyphs">0.82</text>
<rect x="562.7" y="359.3" width="24.5" height="11.5" fill="none" stroke="#a4a4a4" stroke-width="1"/>
<text x="575" y="369.1" font-size="10.5" fill="#a4a4a4" text-anchor="middle" textLength="19.5" lengthAdjust="spacingAndGlyphs">0.82</text>
<rect x="656.5" y="404.7" width="24.5" height="11.5" fill="none" stroke="#a4a4a4" stroke-width="1"/>
<text x="668.8" y="414.5" font-size="10.5" fill="#a4a4a4" text-anchor="middle" textLength="19.5" lengthAdjust="spacingAndGlyphs">0.82</text>
<rect x="656.5" y="536" width="24.5" height="11.5" fill="none" stroke="#a4a4a4" stroke-width="1"/>
<text x="668.8" y="545.8" font-size="10.5" fill="#a4a4a4" text-anchor="middle" textLength="19.5" lengthAdjust="spacingAndGlyphs">0.82</text>
<rect x="666.5" y="556.3" width="24.5" height="11.5" fill="none" stroke="#a4a4a4" stroke-width="1"/>
<text x="678.8" y="566.1" font-size="10.5" fill="#a4a4a4" text-anchor="middle" textLength="19.5" lengthAdjust="spacingAndGlyphs">0.82</text>
<rect x="681.8" y="564.9" width="24.5" height="11.5" fill="none" stroke="#a4a4a4" stroke-width="1"/>
<text x="694" y="574.7" font-size="10.5" fill="#a4a4a4" text-anchor="middle" textLength="19.5" lengthAdjust="spacingAndGlyphs">0.31</text>
<rect x="672.1" y="578.9" width="24.5" height="11.5" fill="none" stroke="#a4a4a4" stroke-width="1"/>
<text x="684.4" y="588.7" font-size="10.5" fill="#a4a4a4" text-anchor="middle" textLength="19.5" lengthAdjust="spacingAndGlyphs">0.31</text>
<rect x="655.3" y="595" width="24.5" height="11.5" fill="none" stroke="#a4a4a4" stroke-width="1"/>
<text x="667.5" y="604.8" font-size="10.5" fill="#a4a4a4" text-anchor="middle" textLength="19.5" lengthAdjust="spacingAndGlyphs">0.31</text>
<rect x="631" y="577" width="24.5" height="11.5" fill="none" stroke="#a4a4a4" stroke-width="1"/>
<text x="643.2" y="586.8" font-size="10.5" fill="#a4a4a4" text-anchor="middle" textLength="19.5" lengthAdjust="spacingAndGlyphs">0.82</text>
<rect x="610.3" y="592.2" width="24.5" height="11.5" fill="none" stroke="#a4a4a4" stroke-width="1"/>
<text x="622.5" y="602" font-size="10.5" fill="#a4a4a4" text-anchor="middle" textLength="19.5" lengthAdjust="spacingAndGlyphs">0.31</text>
<rect x="558.8" y="579.7" width="24.5" height="11.5" fill="none" stroke="#a4a4a4" stroke-width="1"/>
<text x="571" y="589.5" font-size="10.5" fill="#a4a4a4" text-anchor="middle" textLength="19.5" lengthAdjust="spacingAndGlyphs">0.82</text>
<rect x="583.5" y="606.7" width="24.5" height="11.5" fill="none" stroke="#a4a4a4" stroke-width="1"/>
<text x="595.8" y="616.5" font-size="10.5" fill="#a4a4a4" text-anchor="middle" textLength="19.5" lengthAdjust="spacingAndGlyphs">0.82</text>
<rect x="615.5" y="618" width="24.5" height="11.5" fill="none" stroke="#a4a4a4" stroke-width="1"/>
<text x="627.8" y="627.8" font-size="10.5" fill="#a4a4a4" text-anchor="middle" textLength="19.5" lengthAdjust="spacingAndGlyphs">0.31</text>
<rect x="565.8" y="619.5" width="24.5" height="11.5" fill="none" stroke="#a4a4a4" stroke-width="1"/>
<text x="578" y="629.3" font-size="10.5" fill="#a4a4a4" text-anchor="middle" textLength="19.5" lengthAdjust="spacingAndGlyphs">0.31</text>
<rect x="511.1" y="619.5" width="24.5" height="11.5" fill="none" stroke="#a4a4a4" stroke-width="1"/>
<text x="523.4" y="629.3" font-size="10.5" fill="#a4a4a4" text-anchor="middle" textLength="19.5" lengthAdjust="spacingAndGlyphs">0.82</text>
<rect x="426.8" y="619.5" width="24.5" height="11.5" fill="none" stroke="#a4a4a4" stroke-width="1"/>
<text x="439.1" y="629.3" font-size="10.5" fill="#a4a4a4" text-anchor="middle" textLength="19.5" lengthAdjust="spacingAndGlyphs">0.31</text>
<rect x="394.7" y="619.5" width="24.5" height="11.5" fill="none" stroke="#a4a4a4" stroke-width="1"/>
<text x="406.9" y="629.3" font-size="10.5" fill="#a4a4a4" text-anchor="middle" textLength="19.5" lengthAdjust="spacingAndGlyphs">0.82</text>
<rect x="335" y="609.5" width="24.5" height="11.5" fill="none" stroke="#a4a4a4" stroke-width="1"/>
<text x="347.2" y="619.3" font-size="10.5" fill="#a4a4a4" text-anchor="middle" textLength="19.5" lengthAdjust="spacingAndGlyphs">0.82</text>
<rect x="351.8" y="594.5" width="24.5" height="11.5" fill="none" stroke="#a4a4a4" stroke-width="1"/>
<text x="364.1" y="604.3" font-size="10.5" fill="#a4a4a4" text-anchor="middle" textLength="19.5" lengthAdjust="spacingAndGlyphs">0.82</text>
<rect x="402.5" y="578.5" width="24.5" height="11.5" fill="none" stroke="#a4a4a4" stroke-width="1"/>
<text x="414.8" y="588.3" font-size="10.5" fill="#a4a4a4" text-anchor="middle" textLength="19.5" lengthAdjust="spacingAndGlyphs">0.82</text>
<rect x="417.4" y="606.3" width="24.5" height="11.5" fill="none" stroke="#a4a4a4" stroke-width="1"/>
<text x="429.6" y="616.1" font-size="10.5" fill="#a4a4a4" text-anchor="middle" textLength="19.5" lengthAdjust="spacingAndGlyphs">0.82</text>
<rect x="465.8" y="606.3" width="24.5" height="11.5" fill="none" stroke="#a4a4a4" stroke-width="1"/>
<text x="478.1" y="616.1" font-size="10.5" fill="#a4a4a4" text-anchor="middle" textLength="19.5" lengthAdjust="spacingAndGlyphs">0.82</text>
<rect x="492.5" y="278" width="50" height="11.5" fill="none" stroke="#a4a4a4" stroke-width="1"/>
<text x="517.5" y="287.8" font-size="10.5" fill="#a4a4a4" text-anchor="middle" textLength="45" lengthAdjust="spacingAndGlyphs">2.43;0.68</text>
<rect x="511.9" y="293.5" width="47" height="11.5" fill="none" stroke="#a4a4a4" stroke-width="1"/>
<text x="535.4" y="303.3" font-size="10.5" fill="#a4a4a4" text-anchor="middle" textLength="42" lengthAdjust="spacingAndGlyphs">0.30;0.26</text>
<rect x="456.5" y="332.5" width="49" height="11.5" fill="none" stroke="#a4a4a4" stroke-width="1"/>
<text x="481" y="342.3" font-size="10.5" fill="#a4a4a4" text-anchor="middle" textLength="44" lengthAdjust="spacingAndGlyphs">0.82;0.25</text>
<rect x="390.5" y="349.5" width="49" height="11.5" fill="none" stroke="#a4a4a4" stroke-width="1"/>
<text x="415" y="359.3" font-size="10.5" fill="#a4a4a4" text-anchor="middle" textLength="44" lengthAdjust="spacingAndGlyphs">2.66;0.66</text>
<rect x="399.5" y="167.5" width="7.5" height="8.5" fill="#fcfcfa" stroke="#b0b0b0" stroke-width="1" transform="rotate(-8 403.2 171.8)"/>
<rect x="514.7" y="164.7" width="10.3" height="6.3" fill="#fcfcfa" stroke="#b0b0b0" stroke-width="1"/>
<rect x="641.2" y="159.3" width="7.6" height="12.7" fill="#fcfcfa" stroke="#b0b0b0" stroke-width="1"/>
<rect x="674" y="189" width="7" height="7" fill="#fcfcfa" stroke="#b0b0b0" stroke-width="1" transform="rotate(25 677.5 192.5)"/>
<rect x="357.6" y="451.3" width="8.8" height="10.7" fill="#fcfcfa" stroke="#b0b0b0" stroke-width="1" transform="rotate(-10 362 456.6)"/>
<rect x="375" y="334.3" width="7" height="9.7" fill="#fcfcfa" stroke="#b0b0b0" stroke-width="1" transform="rotate(-8 378.5 339.1)"/>
<rect x="383.5" y="324" width="12.5" height="14" fill="#fcfcfa" stroke="#b0b0b0" stroke-width="1" transform="rotate(-10 389.8 331)"/>
</svg>
<style>
#pn{left:13px;top:96px;width:245px;height:238px;background:#0a50dc;border-radius:7px 7px 0 0;}
#pnt{left:13px;top:96px;width:245px;height:35px;border-radius:7px 7px 0 0;background:linear-gradient(#0a40d0 0,#3a90ff 1.5px,#3a90ff 2.5px,#0c62f0 4px,#0856e0 6px,#0856e0 20px,#0a5ee8 23px,#0a66f0 26px,#0a66f0 31px,#0a48d4 33px,#0a3cc8 35px);}
#pnb{left:16px;top:131px;width:238px;height:200px;background:#ece9d8;}
#pntitle{left:42px;top:107px;line-height:18px;color:#fff;font-family:"DejaVu Sans Condensed","DejaVu Sans","Liberation Sans",sans-serif;font-weight:bold;font-size:14.500px;white-space:nowrap;text-shadow:1px 1px 0 #0a2a8a;letter-spacing:-0.05px;}
.pb{position:absolute;top:101px;width:26px;height:26px;border-radius:4px;box-sizing:border-box;border:1px solid #e8eefc;}
.ptb{position:absolute;top:131.500px;width:21px;height:20px;border-radius:4px;background:#f9f9f5;box-shadow:0 0 0 1px #dcdad0, 1px 1px 1px #c4c2b4;}
.cmb{position:absolute;left:17px;width:237px;height:23px;box-sizing:border-box;background:#fdfdfb;border:1px solid #a9bccf;font-size:13.500px;line-height:22px;padding-left:3px;color:#111;letter-spacing:-0.1px;}
.cmbb{position:absolute;right:1px;top:1px;width:19px;height:19px;background:linear-gradient(#c6d6f0,#b4c8e8);border-radius:2px;}
.rad{position:absolute;width:15px;height:15px;border-radius:50%;box-sizing:border-box;border:1.500px solid #4a6a8c;background:radial-gradient(circle at 35% 35%,#fff 40%,#dcdcd4);}
</style>
<div id="pn" class="abs"></div>
<div id="pnt" class="abs"></div>
<div id="pnb" class="abs"></div>
<svg class="abs" style="left:17.500px;top:104px" width="20" height="21" viewBox="0 0 20 21">
<g fill="#000"><rect x="1" y="2" width="18" height="4"/><rect x="1" y="7" width="18" height="4"/><rect x="1" y="12" width="18" height="4"/><rect x="1" y="17" width="18" height="3.500"/></g>
<g fill="#fff"><rect x="4" y="1.500" width="14" height="2.600"/><rect x="4" y="6.300" width="14" height="2.600"/><rect x="4" y="11.200" width="14" height="2.600"/><rect x="4" y="16.200" width="14" height="2.600"/></g>
<g fill="#000"><rect x="7" y="4" width="1" height="2"/><rect x="11" y="4" width="1" height="2"/><rect x="15" y="4" width="1" height="2"/><rect x="7" y="9" width="1" height="2"/><rect x="11" y="9" width="1" height="2"/><rect x="15" y="9" width="1" height="2"/><rect x="7" y="14" width="1" height="2"/><rect x="11" y="14" width="1" height="2"/><rect x="15" y="14" width="1" height="2"/></g>
</svg>
<div id="pntitle" class="abs">Hipótesis y plantas</div>
<div class="pb tblue" style="left:196.500px"><svg width="24" height="24" viewBox="0 0 24 24"><text x="12" y="20.500" text-anchor="middle" font-family="Liberation Sans,sans-serif" font-weight="bold" font-size="22" fill="#fff">?</text></svg></div>
<div class="pb tred" style="left:225.500px"><svg width="24" height="24" viewBox="0 0 24 24"><path d="M5 5L19 19M19 5L5 19" stroke="#fff" stroke-width="3.600"/></svg></div>
<div class="ptb" style="left:17px"></div>
<div class="ptb" style="left:40px"></div>
<div class="ptb" style="left:62.500px;background:#f4f3ec;box-shadow:none"></div>
<div class="ptb" style="left:86px"></div>
<div class="ptb" style="left:109px"></div>
<svg class="abs" style="left:13px;top:130px" width="130" height="24" viewBox="13 130 130 24">
<circle cx="27.500" cy="141" r="7.500" fill="#128a50"/><circle cx="27.500" cy="141" r="4" fill="#7a6a20"/><circle cx="27.500" cy="141" r="1.700" fill="#c01010"/>
<rect x="44" y="139" width="8" height="8" fill="#888"/><rect x="49" y="134" width="8" height="8" fill="#777"/>
<text x="45.500" y="146.500" font-size="8" font-weight="bold" fill="#f0e020" font-family="Liberation Sans,sans-serif">3</text><text x="50.500" y="141.500" font-size="8" font-weight="bold" fill="#f0e020" font-family="Liberation Sans,sans-serif">2</text>
<path d="M52 147c3 0 6-1.500 7-4M44 135c1 2 1 3 3 4" stroke="#c02020" stroke-width="1" fill="none"/><path d="M53 133l3-1M56 136l3-2" stroke="#20a020" stroke-width="1"/>
<path d="M43 149.500h4" stroke="#c01010" stroke-width="1.600"/><path d="M47 149.500h4" stroke="#c0a010" stroke-width="1.600"/><path d="M51 149.500h4" stroke="#20a020" stroke-width="1.600"/><path d="M55 149.500h4" stroke="#2040c0" stroke-width="1.600"/>
<circle cx="72.500" cy="140.500" r="7" fill="none" stroke="#20a090" stroke-width="1.200"/><circle cx="72.500" cy="140.500" r="5" fill="none" stroke="#20a030" stroke-width="1.200"/><circle cx="72.500" cy="140.500" r="3" fill="none" stroke="#908020" stroke-width="1.200"/><rect x="71.300" y="139.300" width="2.400" height="2.400" fill="#d01010"/>
<path d="M65 149.500h4" stroke="#c01010" stroke-width="1.600"/><path d="M69 149.500h4" stroke="#c0a010" stroke-width="1.600"/><path d="M73 149.500h4" stroke="#20a020" stroke-width="1.600"/><path d="M77 149.500h3" stroke="#2040c0" stroke-width="1.600"/>
<circle cx="95.500" cy="140" r="6" fill="#e8f8ff" stroke="#888" stroke-width="1.200"/><path d="M95 136c3 0 5 3 4 6l-3-1z" fill="#40d0e8"/><path d="M93 136l2 6" stroke="#e0d040" stroke-width="1"/>
<path d="M100 145l5 5" stroke="#2050c0" stroke-width="2.200"/><path d="M101 136l3-2M102 140l3-1" stroke="#c0a020" stroke-width="1"/>
<path d="M89 149.500h4" stroke="#c01010" stroke-width="1.600"/><path d="M93 149.500h4" stroke="#c0a010" stroke-width="1.600"/><path d="M97 149.500h3" stroke="#20a020" stroke-width="1.600"/>
<path d="M112 139c2-5 13-5 15 0l-2 1.500c-3-3-8-3-11 0z" fill="#222"/><path d="M113 149v-6l3-3h7l3 3v6z" fill="#e8c020" stroke="#c01010" stroke-width="1.200"/><path d="M116.500 143v5M119.500 143v5M122.500 143v5" stroke="#c01010" stroke-width="1.200"/>
</svg>
<div class="abs" style="left:16px;top:153.500px;width:238px;height:1px;background:#fff"></div>
<div class="abs" style="left:16px;top:154.500px;width:238px;height:1px;background:#c8c5b4"></div>
<div class="cmb" style="top:156px">Desplazamientos<div class="cmbb"><svg width="19" height="19"><path d="M6 7.500l3.500 3.500 3.500-3.500" fill="none" stroke="#3a5078" stroke-width="2"/></svg></div></div>
<div class="abs" style="left:16px;top:182.500px;width:238px;height:1px;background:#c8c5b4"></div>
<div class="abs" style="left:16px;top:183.500px;width:238px;height:1px;background:#fff"></div>
<div class="cmb" style="top:188px">Desplazamiento Z<div class="cmbb"><svg width="19" height="19"><path d="M6 7.500l3.500 3.500 3.500-3.500" fill="none" stroke="#3a5078" stroke-width="2"/></svg></div></div>
<div class="rad" style="left:22.500px;top:222px"></div>
<div class="abs" style="left:41px;top:221px;font-size:13.500px;line-height:16px;color:#111">Hipótesis</div>
<div class="rad" style="left:118.500px;top:222px"><div style="position:absolute;left:3px;top:3px;width:6px;height:6px;border-radius:50%;background:radial-gradient(circle at 40% 40%,#60d040,#209010)"></div></div>
<div class="abs" style="left:138px;top:221px;font-size:13.500px;line-height:16px;font-weight:bold;color:#111;letter-spacing:0.5px">Combinaciones</div>
<div class="cmb" style="top:245.500px;left:19.500px;width:232.500px;height:23px"><div style="position:absolute;left:2px;top:2.500px;width:207px;height:16px;background:#2a5cc8;outline:1px dotted #e0c070;color:#fff;line-height:16px;font-size:13.500px;letter-spacing:-0.330px;padding-left:1px;box-sizing:border-box">G+Q+V(-Yexc.-)</div><div class="cmbb"><svg width="19" height="19"><path d="M6 7.500l3.500 3.500 3.500-3.500" fill="none" stroke="#3a5078" stroke-width="2"/></svg></div></div>
<div class="abs" style="left:16px;top:310px;width:238px;text-align:center;font-size:13px;line-height:16px;color:#111">Planta 1</div>
<style>
#cbar{left:7px;top:666px;width:1009px;height:21px;background:#c0c0c0;}
#cgrad{left:49px;top:666px;width:840px;height:21px;background:linear-gradient(90deg,#800808 0%,#884408 10%,#827a0c 20%,#46820a 30%,#0a8216 40%,#008440 50%,#008080 60%,#084c98 70%,#02007c 80%,#02003c 90%,#000004 100%);}
.cl{position:absolute;top:668px;font-weight:bold;font-size:14px;color:#fff;letter-spacing:-0.18px;line-height:16px;white-space:nowrap;}
#tabrow{left:4px;top:692px;width:1016px;height:18px;background:#ece9d8;}
#status{left:4px;top:709px;width:1016px;height:25px;border-top:1px solid #fff;box-sizing:border-box;background:#ece9d8;}
.sp{position:absolute;top:2px;height:21px;border:1px solid;border-color:#aca899 #fff #fff #aca899;box-sizing:border-box;font-size:13px;line-height:21px;letter-spacing:0;padding-left:3px;white-space:nowrap;}
.tabt{font-size:13.500px;fill:#111;letter-spacing:-0.2px;}
</style>
<div id="cbar" class="abs"></div>
<div id="cgrad" class="abs"></div>
<div class="cl" style="left:33px">-5.55</div>
<div class="cl" style="left:117px">-5.01</div>
<div class="cl" style="left:201px">-4.48</div>
<div class="cl" style="left:285px">-3.94</div>
<div class="cl" style="left:373px">-3.4</div>
<div class="cl" style="left:453px">-2.87</div>
<div class="cl" style="left:537px">-2.33</div>
<div class="cl" style="left:621px">-1.79</div>
<div class="cl" style="left:705px">-1.26</div>
<div class="cl" style="left:789px">-0.72</div>
<div class="cl" style="left:873px;color:#444"><span style="color:#4a4a20">-0.</span>18</div>
<div class="cl" style="left:945px;color:#555">[mm]</div>
<div id="tabrow" class="abs"></div>
<svg class="abs" style="left:0;top:690px" width="1024" height="22" viewBox="0 690 1024 22" font-family="Liberation Sans,sans-serif">
<rect x="4" y="690" width="1016" height="3" fill="#fcfcfa"/>
<path d="M354 692.500l15 16h71l15-16z" fill="#fcfcfa"/>
<path d="M4 692.500h350M455 692.500h565" stroke="#000" stroke-width="1"/>
<path d="M6 692.500l15 16h116l8-8.500M138 692.500l15 16h109l8-8.500M263 692.500l15 16h75l8-8.500M354 692.500l15 16h71l15-16M448 700l8 8.500h73l15-16" fill="none" stroke="#000" stroke-width="1"/>
<text class="tabt" x="24.500" y="705" textLength="108.500">Entrada de pilares</text>
<text class="tabt" x="156.500" y="705" textLength="101">Entrada de vigas</text>
<text class="tabt" x="281" y="705" textLength="68.500">Resultados</text>
<text class="tabt" x="373" y="705" textLength="62">Isovalores</text>
<text class="tabt" x="459" y="705" textLength="67">Deformada</text>
</svg>
<div id="status" class="abs">
<div class="sp" style="left:2px;width:845px">CYPECAD - CYPE Ingenieros, S.A.</div>
<div class="sp" style="left:849px;width:164px">2: Planta 1</div>
</div>
</body>
</html>
